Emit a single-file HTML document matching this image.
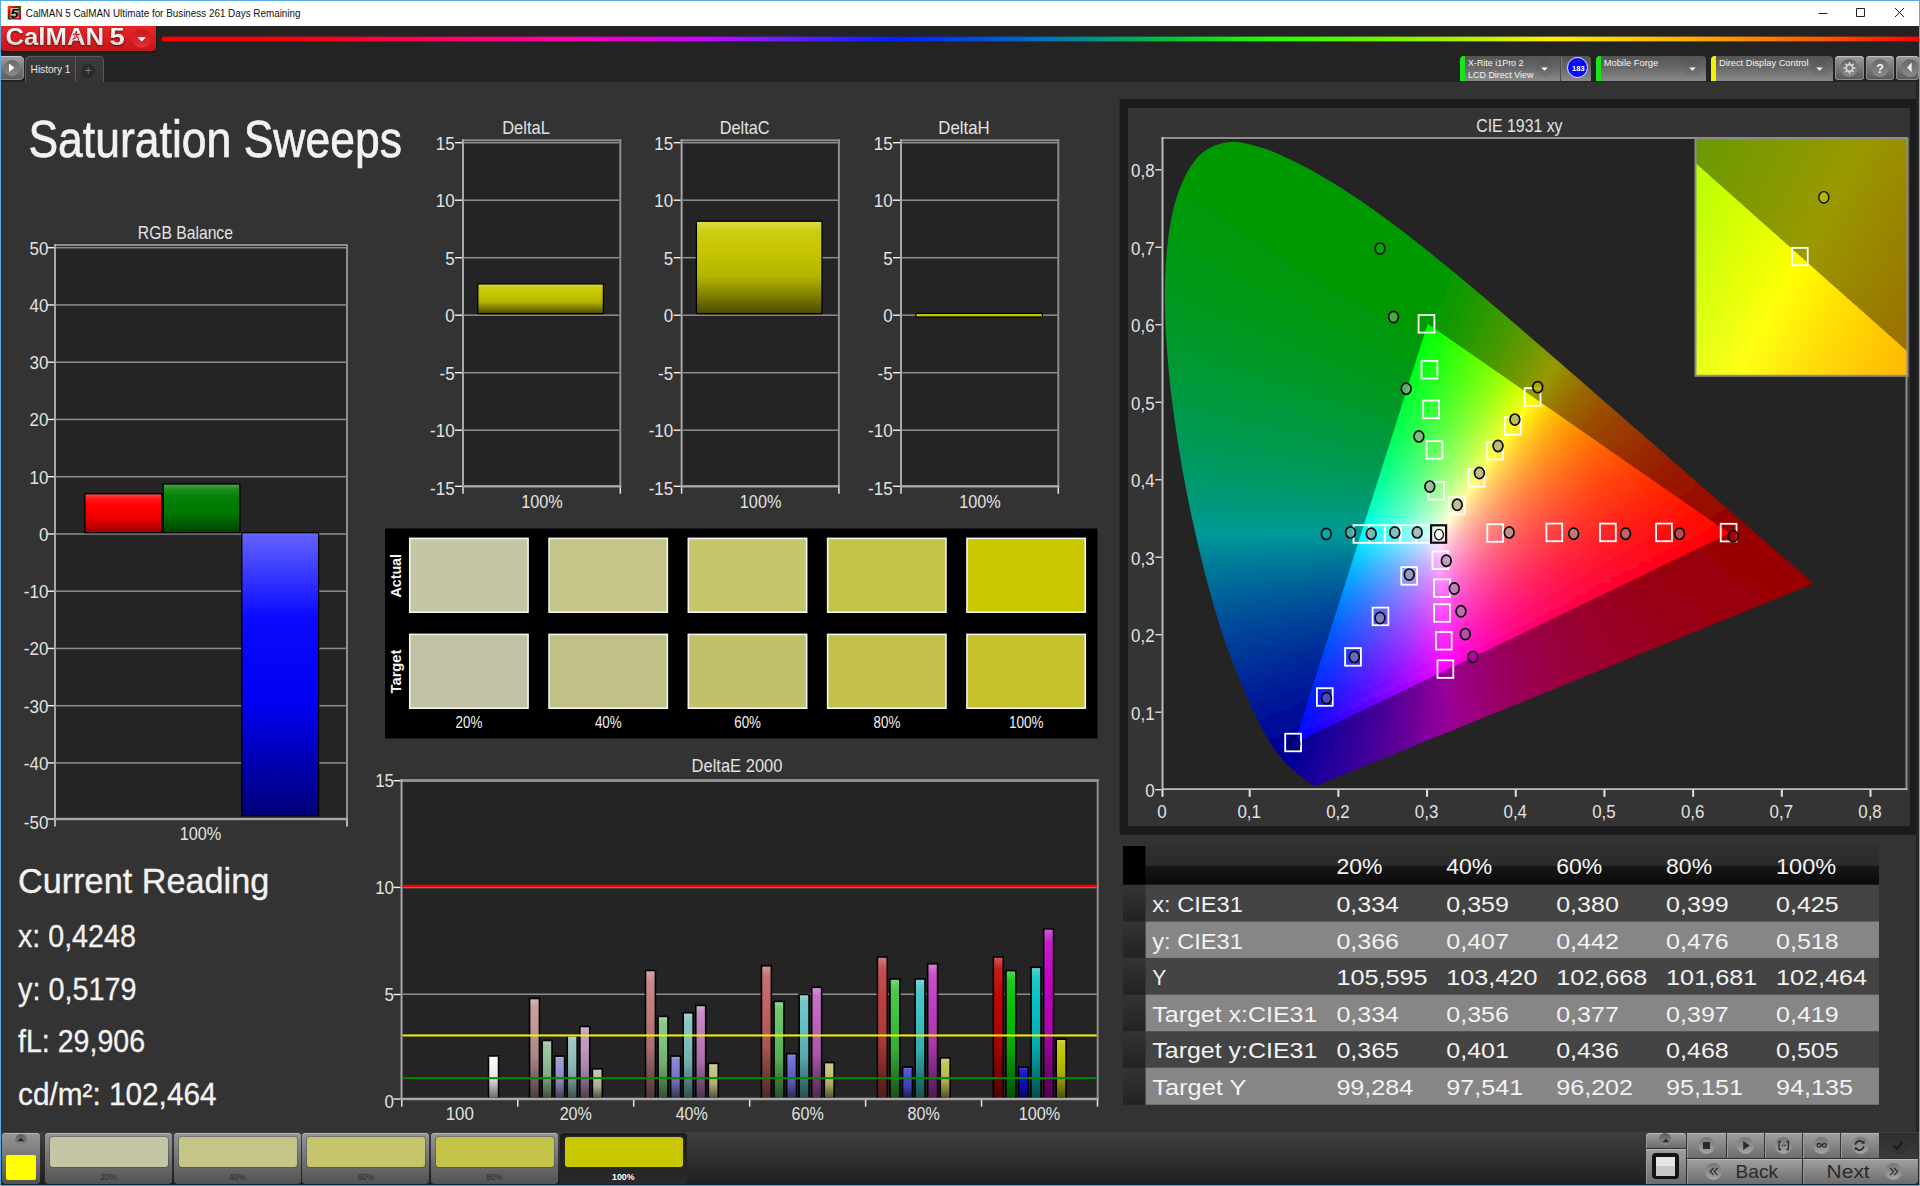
<!DOCTYPE html>
<html lang="en"><head><meta charset="utf-8"><title>CalMAN 5 - Saturation Sweeps</title>
<style>
html,body{margin:0;padding:0;background:#333}
#win{position:relative;width:1920px;height:1186px;overflow:hidden;background:#333333;font-family:'Liberation Sans',sans-serif}
#win div,#win i,#win b,#win u,#win s,#win em,#win span{position:absolute;display:block;box-sizing:border-box;text-decoration:none}
#border{left:0;top:0;width:1920px;height:1186px;border:1px solid #58ace6;z-index:5;pointer-events:none}
#ov{position:absolute;left:0;top:0}
text{font-family:'Liberation Sans',sans-serif}

#titlebar{left:1px;top:1px;width:1918px;height:25px;background:#fff}
#topbar{left:1px;top:26px;width:1918px;height:56px;background:#232323}
#rainbow{left:162px;top:36px;width:1757px;height:6px;-webkit-mask-image:linear-gradient(180deg,transparent 0,#000 22%,#000 78%,transparent 100%);mask-image:linear-gradient(180deg,transparent 0,#000 22%,#000 78%,transparent 100%);background:linear-gradient(90deg,#ff0000 0%,#ff0010 8%,#ff00a0 22%,#d000ff 30.5%,#7020ff 35%,#0020ff 42%,#0070c0 50%,#00c040 57%,#20ff00 63%,#a0f000 73%,#fff000 79%,#ffb000 87%,#ff5000 95%,#ff0000 100%)}
#logo{left:1px;top:26px;width:155px;height:25px;border-radius:0 0 4px 4px;background:linear-gradient(#e8262a,#dc1f22 45%,#c41418);box-shadow:0 1px 2px rgba(0,0,0,.7)}
#logodd{left:131px;top:3px;width:19px;height:19px;border-radius:50%;background:linear-gradient(#c8181c,#e43034)}
#playbtn{left:1px;top:56px;width:23px;height:24px;border-radius:0 5px 5px 0;background:linear-gradient(#a2a2a2,#7a7a7a 50%,#5c5c5c);box-shadow:inset 0 1px 0 #c4c4c4,inset -1px 0 0 #8a8a8a,inset 0 -1px 0 #888}
#playbtn i{left:3px;top:4px;width:16px;height:16px;border-radius:50%;background:linear-gradient(#6a6a6a,#8a8a8a)}
#tab{left:25px;top:56px;width:79px;height:26px;border-radius:5px 5px 0 0;background:linear-gradient(#3c3c3c,#333);box-shadow:inset 1px 1px 0 #5a5a5a,inset -1px 0 0 #5a5a5a}
#tab b{left:50px;top:1px;width:1px;height:25px;background:#5a5a5a}
#tab i{left:56px;top:8px;width:14px;height:14px;border-radius:50%;background:#2a2a2a}
.src{top:56px;height:25px;border-radius:4px 4px 0 0;background:linear-gradient(#545454,#6a6a6a 50%,#8a8a8a);overflow:hidden}
.src u{left:0;top:0;width:5px;height:25px}
.src s{top:1px;width:1px;height:24px;background:#4a4a4a;box-shadow:1px 0 0 #7c7c7c}
.src em{top:4px;width:17px;height:17px;border-radius:50%;background:linear-gradient(#555,#777)}
.src .blue{left:107px;top:1px;width:21px;height:21px;border-radius:50%;background:#0a0aff;border:1px solid #e8e8ff}
.tbtn{top:56px;height:24px;border-radius:4px;background:linear-gradient(#9c9c9c,#787878 50%,#585858);box-shadow:inset 0 1px 0 #c0c0c0,inset 1px 0 0 #8c8c8c,inset -1px 0 0 #8c8c8c,inset 0 -1px 0 #8c8c8c}
.tbtn i{left:5px;top:3px;width:18px;height:18px;border-radius:50%;background:linear-gradient(#666,#8a8a8a)}
#botbar{left:1px;top:1132px;width:1918px;height:53px;background:linear-gradient(#3e3e3e,#2c2c2c 60%,#1f1f1f)}
.bbtn{top:1133px;height:51px;border-radius:4px;background:linear-gradient(#969696,#747474 50%,#525252);box-shadow:inset 0 1px 0 #b4b4b4}
.bbtn.sw b{left:5px;top:4px;width:118px;height:30px;border-radius:3px;box-shadow:0 0 0 1px rgba(60,60,60,.35)}
.bbtn.sel{background:linear-gradient(#1c1c1c,#2a2a2a)}
.bbtn.sel{box-shadow:none}
.upc{left:13px;top:1px;width:12px;height:12px;border-radius:50%;background:linear-gradient(#5c5c5c,#8c8c8c)}
.ysq{left:4px;top:22px;width:30px;height:25px;border-radius:2px;background:#ffff00}
.rb{background:linear-gradient(#a0a0a0,#868686 50%,#6c6c6c);box-shadow:inset 0 1px 0 #b8b8b8,inset 1px 0 0 #999}
.rb.dk{background:linear-gradient(#2e2e2e,#3a3a3a);box-shadow:none}
.cir{top:4px;width:17px;height:17px;border-radius:50%;background:linear-gradient(#767676,#a4a4a4)}
.psq{left:6px;top:4px;width:27px;height:26px;border-radius:4px;background:#141414}
.psq i{left:4px;top:4px;width:19px;height:19px;background:linear-gradient(#e6e6e6 50%,#c8c8c8 50%)}
</style></head>
<body><div id="win">
<div id="titlebar"></div>
<div id="topbar"></div>
<div id="rainbow"></div>
<div id="logo"><div id="logodd"></div></div>
<div id="playbtn"><i></i></div>
<div id="tab"><b></b><i></i></div>
<div class="src" style="left:1460px;width:131px"><u style="background:#19e619"></u><s style="left:100px"></s><em style="left:76px"></em><span class="blue"></span></div>
<div class="src" style="left:1596px;width:110px"><u style="background:#19e619"></u><em style="left:88px"></em></div>
<div class="src" style="left:1711px;width:122px"><u style="background:#f2f200"></u><em style="left:100px"></em></div>
<div class="tbtn" style="left:1835px;width:29px"><i></i></div>
<div class="tbtn" style="left:1866px;width:28px"><i></i></div>
<div class="tbtn" style="left:1896px;width:23px"><i></i></div>
<div id="botbar"></div>
<div class="bbtn" style="left:2px;width:38px"><i class="upc"></i><b class="ysq"></b></div>
<div class="bbtn sw" style="left:45px;width:127px"><b style="background:#c5c6a6"></b></div>
<div class="bbtn sw" style="left:173.7px;width:127px"><b style="background:#c6c588"></b></div>
<div class="bbtn sw" style="left:302.4px;width:127px"><b style="background:#c7c56b"></b></div>
<div class="bbtn sw" style="left:431.1px;width:127px"><b style="background:#c4c34a"></b></div>
<div class="bbtn sw sel" style="left:559.8px;width:127px"><b style="background:#c9c800"></b></div>
<div class="rb" style="left:1646px;top:1133px;width:40px;height:15px;border-radius:4px 4px 0 0"><i class="upc" style="left:13px;top:0px"></i></div>
<div class="rb" style="left:1646px;top:1149px;width:40px;height:35px"><b class="psq"><i></i></b></div>
<div class="rb" style="left:1687px;top:1133px;width:39px;height:25px"><i class="cir" style="left:11px"></i></div>
<div class="rb" style="left:1727px;top:1133px;width:37px;height:25px"><i class="cir" style="left:10px"></i></div>
<div class="rb" style="left:1765px;top:1133px;width:37px;height:25px"><i class="cir" style="left:10px"></i></div>
<div class="rb" style="left:1803px;top:1133px;width:37px;height:25px"><i class="cir" style="left:10px"></i></div>
<div class="rb" style="left:1841px;top:1133px;width:38px;height:25px"><i class="cir" style="left:10.5px"></i></div>
<div class="rb dk" style="left:1879px;top:1133px;width:39px;height:25px"><i class="cir" style="left:11px;background:#333"></i></div>
<div class="rb" style="left:1687px;top:1159px;width:115px;height:25px"><i class="cir" style="left:18px;top:4px"></i></div>
<div class="rb" style="left:1803px;top:1159px;width:115px;height:25px;border-radius:0 0 4px 0"><i class="cir" style="left:82px;top:4px"></i></div>
<svg id="ov" width="1920" height="1186" viewBox="0 0 1920 1186">
<text x="28.4" y="157.3" font-size="52" fill="#f2f2f2" textLength="373.6" lengthAdjust="spacingAndGlyphs" stroke="#f2f2f2" stroke-width=".7">Saturation Sweeps</text>
<text x="18" y="893" font-size="35.2" fill="#f2f2f2" textLength="251.3" lengthAdjust="spacingAndGlyphs" stroke="#f2f2f2" stroke-width=".35">Current Reading</text>
<text x="18" y="947" font-size="30.9" fill="#f2f2f2" textLength="117.81" lengthAdjust="spacingAndGlyphs" stroke="#f2f2f2" stroke-width=".3">x: 0,4248</text>
<text x="18" y="999.5" font-size="30.9" fill="#f2f2f2" textLength="118.43" lengthAdjust="spacingAndGlyphs" stroke="#f2f2f2" stroke-width=".3">y: 0,5179</text>
<text x="18" y="1052" font-size="30.9" fill="#f2f2f2" textLength="127.09" lengthAdjust="spacingAndGlyphs" stroke="#f2f2f2" stroke-width=".3">fL: 29,906</text>
<text x="18" y="1104.5" font-size="30.9" fill="#f2f2f2" textLength="198.55" lengthAdjust="spacingAndGlyphs" stroke="#f2f2f2" stroke-width=".3">cd/m²: 102,464</text>
<defs>
<linearGradient id="gR" x1="0" y1="0" x2="0" y2="1"><stop offset="0" stop-color="#ff5050"/><stop offset="0.12" stop-color="#ff1a1a"/><stop offset="0.3" stop-color="#ff0000"/><stop offset="0.6" stop-color="#f00000"/><stop offset="1" stop-color="#9c0000"/></linearGradient>
<linearGradient id="gG" x1="0" y1="0" x2="0" y2="1"><stop offset="0" stop-color="#4aa84a"/><stop offset="0.12" stop-color="#1a8c1a"/><stop offset="0.3" stop-color="#008000"/><stop offset="0.6" stop-color="#007800"/><stop offset="1" stop-color="#004200"/></linearGradient>
<linearGradient id="gB" x1="0" y1="0" x2="0" y2="1"><stop offset="0" stop-color="#6464ff"/><stop offset="0.12" stop-color="#4040ff"/><stop offset="0.3" stop-color="#0a0aff"/><stop offset="0.6" stop-color="#0000f4"/><stop offset="1" stop-color="#000078"/></linearGradient>
</defs>
<rect x="54" y="244" width="294" height="576" fill="#242424"/>
<rect x="56" y="246.95" width="290" height="1.5" fill="#8e8e8e"/>
<rect x="56" y="304.2" width="290" height="1.5" fill="#8e8e8e"/>
<rect x="56" y="361.45" width="290" height="1.5" fill="#8e8e8e"/>
<rect x="56" y="418.7" width="290" height="1.5" fill="#8e8e8e"/>
<rect x="56" y="475.95" width="290" height="1.5" fill="#8e8e8e"/>
<rect x="56" y="533.2" width="290" height="1.5" fill="#8e8e8e"/>
<rect x="56" y="590.45" width="290" height="1.5" fill="#8e8e8e"/>
<rect x="56" y="647.7" width="290" height="1.5" fill="#8e8e8e"/>
<rect x="56" y="704.95" width="290" height="1.5" fill="#8e8e8e"/>
<rect x="56" y="762.2" width="290" height="1.5" fill="#8e8e8e"/>
<rect x="54" y="244" width="294" height="2" fill="#8e8e8e"/>
<rect x="346" y="244" width="2" height="576" fill="#8e8e8e"/>
<rect x="54" y="244" width="2" height="576" fill="#a8a8a8"/>
<rect x="54" y="817.8" width="294" height="2.4" fill="#a8a8a8"/>
<rect x="47" y="247" width="7" height="1.4" fill="#f2f2f2"/>
<text x="48.4" y="254.5" font-size="19" fill="#e2e2e2" text-anchor="end" textLength="18.85" lengthAdjust="spacingAndGlyphs">50</text>
<rect x="47" y="304.25" width="7" height="1.4" fill="#f2f2f2"/>
<text x="48.4" y="311.75" font-size="19" fill="#e2e2e2" text-anchor="end" textLength="18.85" lengthAdjust="spacingAndGlyphs">40</text>
<rect x="47" y="361.5" width="7" height="1.4" fill="#f2f2f2"/>
<text x="48.4" y="369" font-size="19" fill="#e2e2e2" text-anchor="end" textLength="18.85" lengthAdjust="spacingAndGlyphs">30</text>
<rect x="47" y="418.75" width="7" height="1.4" fill="#f2f2f2"/>
<text x="48.4" y="426.25" font-size="19" fill="#e2e2e2" text-anchor="end" textLength="18.85" lengthAdjust="spacingAndGlyphs">20</text>
<rect x="47" y="476" width="7" height="1.4" fill="#f2f2f2"/>
<text x="48.4" y="483.5" font-size="19" fill="#e2e2e2" text-anchor="end" textLength="18.85" lengthAdjust="spacingAndGlyphs">10</text>
<rect x="47" y="533.25" width="7" height="1.4" fill="#f2f2f2"/>
<text x="48.4" y="540.75" font-size="19" fill="#e2e2e2" text-anchor="end" textLength="9.43" lengthAdjust="spacingAndGlyphs">0</text>
<rect x="47" y="590.5" width="7" height="1.4" fill="#f2f2f2"/>
<text x="48.4" y="598" font-size="19" fill="#e2e2e2" text-anchor="end" textLength="24.55" lengthAdjust="spacingAndGlyphs">-10</text>
<rect x="47" y="647.75" width="7" height="1.4" fill="#f2f2f2"/>
<text x="48.4" y="655.25" font-size="19" fill="#e2e2e2" text-anchor="end" textLength="24.55" lengthAdjust="spacingAndGlyphs">-20</text>
<rect x="47" y="705" width="7" height="1.4" fill="#f2f2f2"/>
<text x="48.4" y="712.5" font-size="19" fill="#e2e2e2" text-anchor="end" textLength="24.55" lengthAdjust="spacingAndGlyphs">-30</text>
<rect x="47" y="762.25" width="7" height="1.4" fill="#f2f2f2"/>
<text x="48.4" y="769.75" font-size="19" fill="#e2e2e2" text-anchor="end" textLength="24.55" lengthAdjust="spacingAndGlyphs">-40</text>
<rect x="47" y="818.3" width="7" height="1.4" fill="#f2f2f2"/>
<text x="48.4" y="828.5" font-size="19" fill="#e2e2e2" text-anchor="end" textLength="24.55" lengthAdjust="spacingAndGlyphs">-50</text>
<rect x="54.25" y="820" width="1.5" height="6.5" fill="#e0e0e0"/>
<rect x="346.25" y="820" width="1.5" height="6.5" fill="#e0e0e0"/>
<text x="200.5" y="839.6" font-size="19" fill="#e2e2e2" text-anchor="middle" textLength="41.58" lengthAdjust="spacingAndGlyphs">100%</text>
<text x="185.4" y="238.9" font-size="19" fill="#e2e2e2" text-anchor="middle" textLength="95.08" lengthAdjust="spacingAndGlyphs">RGB Balance</text>
<rect x="84.8" y="493.8" width="77" height="38.9" fill="url(#gR)" stroke="#000" stroke-width="1.3"/>
<rect x="163.2" y="484" width="76.6" height="48.7" fill="url(#gG)" stroke="#000" stroke-width="1.3"/>
<rect x="241.8" y="532.6" width="76.8" height="283" fill="url(#gB)" stroke="#000" stroke-width="1.3"/>
<defs>
<linearGradient id="gY" x1="0" y1="0" x2="0" y2="1"><stop offset="0" stop-color="#dcdc50"/><stop offset="0.12" stop-color="#cccc10"/><stop offset="0.35" stop-color="#c4c400"/><stop offset="0.6" stop-color="#b4b400"/><stop offset="1" stop-color="#4c4c00"/></linearGradient>
</defs>
<rect x="462" y="139.3" width="159.3" height="348" fill="#242424"/>
<rect x="464" y="141.95" width="155.3" height="1.5" fill="#8e8e8e"/>
<rect x="464" y="199.45" width="155.3" height="1.5" fill="#8e8e8e"/>
<rect x="464" y="256.95" width="155.3" height="1.5" fill="#8e8e8e"/>
<rect x="464" y="314.45" width="155.3" height="1.5" fill="#8e8e8e"/>
<rect x="464" y="371.95" width="155.3" height="1.5" fill="#8e8e8e"/>
<rect x="464" y="429.45" width="155.3" height="1.5" fill="#8e8e8e"/>
<rect x="462" y="139.3" width="159.3" height="2" fill="#8e8e8e"/>
<rect x="619.3" y="139.3" width="2" height="348" fill="#8e8e8e"/>
<rect x="462" y="139.3" width="2" height="348" fill="#a8a8a8"/>
<rect x="462" y="485.1" width="159.3" height="2.4" fill="#a8a8a8"/>
<rect x="455" y="142" width="7" height="1.4" fill="#f2f2f2"/>
<text x="454.6" y="149.5" font-size="19" fill="#e2e2e2" text-anchor="end" textLength="18.85" lengthAdjust="spacingAndGlyphs">15</text>
<rect x="455" y="199.5" width="7" height="1.4" fill="#f2f2f2"/>
<text x="454.6" y="207" font-size="19" fill="#e2e2e2" text-anchor="end" textLength="18.85" lengthAdjust="spacingAndGlyphs">10</text>
<rect x="455" y="257" width="7" height="1.4" fill="#f2f2f2"/>
<text x="454.6" y="264.5" font-size="19" fill="#e2e2e2" text-anchor="end" textLength="9.43" lengthAdjust="spacingAndGlyphs">5</text>
<rect x="455" y="314.5" width="7" height="1.4" fill="#f2f2f2"/>
<text x="454.6" y="322" font-size="19" fill="#e2e2e2" text-anchor="end" textLength="9.43" lengthAdjust="spacingAndGlyphs">0</text>
<rect x="455" y="372" width="7" height="1.4" fill="#f2f2f2"/>
<text x="454.6" y="379.5" font-size="19" fill="#e2e2e2" text-anchor="end" textLength="15.12" lengthAdjust="spacingAndGlyphs">-5</text>
<rect x="455" y="429.5" width="7" height="1.4" fill="#f2f2f2"/>
<text x="454.6" y="437" font-size="19" fill="#e2e2e2" text-anchor="end" textLength="24.55" lengthAdjust="spacingAndGlyphs">-10</text>
<rect x="455" y="485.6" width="7" height="1.4" fill="#f2f2f2"/>
<text x="454.6" y="495.3" font-size="19" fill="#e2e2e2" text-anchor="end" textLength="24.55" lengthAdjust="spacingAndGlyphs">-15</text>
<rect x="462.25" y="487.3" width="1.5" height="6.5" fill="#e0e0e0"/>
<rect x="619.55" y="487.3" width="1.5" height="6.5" fill="#e0e0e0"/>
<text x="542" y="508.2" font-size="19" fill="#e2e2e2" text-anchor="middle" textLength="41.58" lengthAdjust="spacingAndGlyphs">100%</text>
<text x="526" y="134.2" font-size="19" fill="#e2e2e2" text-anchor="middle" textLength="47.7" lengthAdjust="spacingAndGlyphs">DeltaL</text>
<rect x="477.8" y="283.9" width="125.6" height="29.7" fill="url(#gY)" stroke="#000" stroke-width="1.3"/>
<rect x="680.6" y="139.3" width="159.3" height="348" fill="#242424"/>
<rect x="682.6" y="141.95" width="155.3" height="1.5" fill="#8e8e8e"/>
<rect x="682.6" y="199.45" width="155.3" height="1.5" fill="#8e8e8e"/>
<rect x="682.6" y="256.95" width="155.3" height="1.5" fill="#8e8e8e"/>
<rect x="682.6" y="314.45" width="155.3" height="1.5" fill="#8e8e8e"/>
<rect x="682.6" y="371.95" width="155.3" height="1.5" fill="#8e8e8e"/>
<rect x="682.6" y="429.45" width="155.3" height="1.5" fill="#8e8e8e"/>
<rect x="680.6" y="139.3" width="159.3" height="2" fill="#8e8e8e"/>
<rect x="837.9" y="139.3" width="2" height="348" fill="#8e8e8e"/>
<rect x="680.6" y="139.3" width="2" height="348" fill="#a8a8a8"/>
<rect x="680.6" y="485.1" width="159.3" height="2.4" fill="#a8a8a8"/>
<rect x="673.6" y="142" width="7" height="1.4" fill="#f2f2f2"/>
<text x="673.2" y="149.5" font-size="19" fill="#e2e2e2" text-anchor="end" textLength="18.85" lengthAdjust="spacingAndGlyphs">15</text>
<rect x="673.6" y="199.5" width="7" height="1.4" fill="#f2f2f2"/>
<text x="673.2" y="207" font-size="19" fill="#e2e2e2" text-anchor="end" textLength="18.85" lengthAdjust="spacingAndGlyphs">10</text>
<rect x="673.6" y="257" width="7" height="1.4" fill="#f2f2f2"/>
<text x="673.2" y="264.5" font-size="19" fill="#e2e2e2" text-anchor="end" textLength="9.43" lengthAdjust="spacingAndGlyphs">5</text>
<rect x="673.6" y="314.5" width="7" height="1.4" fill="#f2f2f2"/>
<text x="673.2" y="322" font-size="19" fill="#e2e2e2" text-anchor="end" textLength="9.43" lengthAdjust="spacingAndGlyphs">0</text>
<rect x="673.6" y="372" width="7" height="1.4" fill="#f2f2f2"/>
<text x="673.2" y="379.5" font-size="19" fill="#e2e2e2" text-anchor="end" textLength="15.12" lengthAdjust="spacingAndGlyphs">-5</text>
<rect x="673.6" y="429.5" width="7" height="1.4" fill="#f2f2f2"/>
<text x="673.2" y="437" font-size="19" fill="#e2e2e2" text-anchor="end" textLength="24.55" lengthAdjust="spacingAndGlyphs">-10</text>
<rect x="673.6" y="485.6" width="7" height="1.4" fill="#f2f2f2"/>
<text x="673.2" y="495.3" font-size="19" fill="#e2e2e2" text-anchor="end" textLength="24.55" lengthAdjust="spacingAndGlyphs">-15</text>
<rect x="680.85" y="487.3" width="1.5" height="6.5" fill="#e0e0e0"/>
<rect x="838.15" y="487.3" width="1.5" height="6.5" fill="#e0e0e0"/>
<text x="760.6" y="508.2" font-size="19" fill="#e2e2e2" text-anchor="middle" textLength="41.58" lengthAdjust="spacingAndGlyphs">100%</text>
<text x="744.6" y="134.2" font-size="19" fill="#e2e2e2" text-anchor="middle" textLength="49.8" lengthAdjust="spacingAndGlyphs">DeltaC</text>
<rect x="696.4" y="221.2" width="125.6" height="92.4" fill="url(#gY)" stroke="#000" stroke-width="1.3"/>
<rect x="900" y="139.3" width="159.3" height="348" fill="#242424"/>
<rect x="902" y="141.95" width="155.3" height="1.5" fill="#8e8e8e"/>
<rect x="902" y="199.45" width="155.3" height="1.5" fill="#8e8e8e"/>
<rect x="902" y="256.95" width="155.3" height="1.5" fill="#8e8e8e"/>
<rect x="902" y="314.45" width="155.3" height="1.5" fill="#8e8e8e"/>
<rect x="902" y="371.95" width="155.3" height="1.5" fill="#8e8e8e"/>
<rect x="902" y="429.45" width="155.3" height="1.5" fill="#8e8e8e"/>
<rect x="900" y="139.3" width="159.3" height="2" fill="#8e8e8e"/>
<rect x="1057.3" y="139.3" width="2" height="348" fill="#8e8e8e"/>
<rect x="900" y="139.3" width="2" height="348" fill="#a8a8a8"/>
<rect x="900" y="485.1" width="159.3" height="2.4" fill="#a8a8a8"/>
<rect x="893" y="142" width="7" height="1.4" fill="#f2f2f2"/>
<text x="892.6" y="149.5" font-size="19" fill="#e2e2e2" text-anchor="end" textLength="18.85" lengthAdjust="spacingAndGlyphs">15</text>
<rect x="893" y="199.5" width="7" height="1.4" fill="#f2f2f2"/>
<text x="892.6" y="207" font-size="19" fill="#e2e2e2" text-anchor="end" textLength="18.85" lengthAdjust="spacingAndGlyphs">10</text>
<rect x="893" y="257" width="7" height="1.4" fill="#f2f2f2"/>
<text x="892.6" y="264.5" font-size="19" fill="#e2e2e2" text-anchor="end" textLength="9.43" lengthAdjust="spacingAndGlyphs">5</text>
<rect x="893" y="314.5" width="7" height="1.4" fill="#f2f2f2"/>
<text x="892.6" y="322" font-size="19" fill="#e2e2e2" text-anchor="end" textLength="9.43" lengthAdjust="spacingAndGlyphs">0</text>
<rect x="893" y="372" width="7" height="1.4" fill="#f2f2f2"/>
<text x="892.6" y="379.5" font-size="19" fill="#e2e2e2" text-anchor="end" textLength="15.12" lengthAdjust="spacingAndGlyphs">-5</text>
<rect x="893" y="429.5" width="7" height="1.4" fill="#f2f2f2"/>
<text x="892.6" y="437" font-size="19" fill="#e2e2e2" text-anchor="end" textLength="24.55" lengthAdjust="spacingAndGlyphs">-10</text>
<rect x="893" y="485.6" width="7" height="1.4" fill="#f2f2f2"/>
<text x="892.6" y="495.3" font-size="19" fill="#e2e2e2" text-anchor="end" textLength="24.55" lengthAdjust="spacingAndGlyphs">-15</text>
<rect x="900.25" y="487.3" width="1.5" height="6.5" fill="#e0e0e0"/>
<rect x="1057.55" y="487.3" width="1.5" height="6.5" fill="#e0e0e0"/>
<text x="980" y="508.2" font-size="19" fill="#e2e2e2" text-anchor="middle" textLength="41.58" lengthAdjust="spacingAndGlyphs">100%</text>
<text x="964" y="134.2" font-size="19" fill="#e2e2e2" text-anchor="middle" textLength="51.47" lengthAdjust="spacingAndGlyphs">DeltaH</text>
<rect x="915.8" y="313.4" width="126.6" height="3.6" fill="#c8c800" stroke="#000" stroke-width="1.3"/>
<rect x="385" y="528.5" width="712.5" height="210" fill="#000"/>
<rect x="409.75" y="538.4" width="118.3" height="73.8" fill="#c5c6a6" stroke="#f4f4ea" stroke-width="1.6"/>
<rect x="409.75" y="634.4" width="118.3" height="73.8" fill="#c1c1a6" stroke="#f4f4ea" stroke-width="1.6"/>
<text x="469" y="727.9" font-size="16.4" fill="#f0f0f0" text-anchor="middle" textLength="26.79" lengthAdjust="spacingAndGlyphs">20%</text>
<rect x="549.05" y="538.4" width="118.3" height="73.8" fill="#c6c588" stroke="#f4f4ea" stroke-width="1.6"/>
<rect x="549.05" y="634.4" width="118.3" height="73.8" fill="#c1c087" stroke="#f4f4ea" stroke-width="1.6"/>
<text x="608.3" y="727.9" font-size="16.4" fill="#f0f0f0" text-anchor="middle" textLength="26.79" lengthAdjust="spacingAndGlyphs">40%</text>
<rect x="688.35" y="538.4" width="118.3" height="73.8" fill="#c7c56b" stroke="#f4f4ea" stroke-width="1.6"/>
<rect x="688.35" y="634.4" width="118.3" height="73.8" fill="#c2c06c" stroke="#f4f4ea" stroke-width="1.6"/>
<text x="747.6" y="727.9" font-size="16.4" fill="#f0f0f0" text-anchor="middle" textLength="26.79" lengthAdjust="spacingAndGlyphs">60%</text>
<rect x="827.65" y="538.4" width="118.3" height="73.8" fill="#c4c34a" stroke="#f4f4ea" stroke-width="1.6"/>
<rect x="827.65" y="634.4" width="118.3" height="73.8" fill="#c3c04b" stroke="#f4f4ea" stroke-width="1.6"/>
<text x="886.9" y="727.9" font-size="16.4" fill="#f0f0f0" text-anchor="middle" textLength="26.79" lengthAdjust="spacingAndGlyphs">80%</text>
<rect x="966.95" y="538.4" width="118.3" height="73.8" fill="#c9c800" stroke="#f4f4ea" stroke-width="1.6"/>
<rect x="966.95" y="634.4" width="118.3" height="73.8" fill="#c5c22e" stroke="#f4f4ea" stroke-width="1.6"/>
<text x="1026.2" y="727.9" font-size="16.4" fill="#f0f0f0" text-anchor="middle" textLength="34.65" lengthAdjust="spacingAndGlyphs">100%</text>
<text transform="translate(401,575.8) rotate(-90)" font-size="14.6" font-weight="bold" fill="#f4f4f4" text-anchor="middle" textLength="43.6" lengthAdjust="spacingAndGlyphs">Actual</text>
<text transform="translate(401,671.5) rotate(-90)" font-size="14.6" font-weight="bold" fill="#f4f4f4" text-anchor="middle" textLength="43.8" lengthAdjust="spacingAndGlyphs">Target</text>
<defs>
<linearGradient id="bw" x1="0" y1="0" x2="0" y2="1"><stop offset="0" stop-color="#ffffff"/><stop offset="0.5" stop-color="#e8e8e8"/><stop offset="1" stop-color="#6a6a6a"/></linearGradient>
<linearGradient id="br0" x1="0" y1="0" x2="0" y2="1"><stop offset="0" stop-color="#d6baba"/><stop offset="0.08" stop-color="#c7a0a0"/><stop offset="0.3" stop-color="#c19696"/><stop offset="0.6" stop-color="#aa8484"/><stop offset="1" stop-color="#4d3c3c"/></linearGradient>
<linearGradient id="bg0" x1="0" y1="0" x2="0" y2="1"><stop offset="0" stop-color="#bad6ba"/><stop offset="0.08" stop-color="#a0c7a0"/><stop offset="0.3" stop-color="#96c196"/><stop offset="0.6" stop-color="#84aa84"/><stop offset="1" stop-color="#3c4d3c"/></linearGradient>
<linearGradient id="bb0" x1="0" y1="0" x2="0" y2="1"><stop offset="0" stop-color="#babadf"/><stop offset="0.08" stop-color="#a0a0d3"/><stop offset="0.3" stop-color="#9696ce"/><stop offset="0.6" stop-color="#8484b5"/><stop offset="1" stop-color="#3c3c52"/></linearGradient>
<linearGradient id="bc0" x1="0" y1="0" x2="0" y2="1"><stop offset="0" stop-color="#bad6d6"/><stop offset="0.08" stop-color="#a0c7c7"/><stop offset="0.3" stop-color="#96c1c1"/><stop offset="0.6" stop-color="#84aaaa"/><stop offset="1" stop-color="#3c4d4d"/></linearGradient>
<linearGradient id="bm0" x1="0" y1="0" x2="0" y2="1"><stop offset="0" stop-color="#d6bad6"/><stop offset="0.08" stop-color="#c7a0c7"/><stop offset="0.3" stop-color="#c196c1"/><stop offset="0.6" stop-color="#aa84aa"/><stop offset="1" stop-color="#4d3c4d"/></linearGradient>
<linearGradient id="by0" x1="0" y1="0" x2="0" y2="1"><stop offset="0" stop-color="#d6d6c0"/><stop offset="0.08" stop-color="#c7c7aa"/><stop offset="0.3" stop-color="#c1c1a0"/><stop offset="0.6" stop-color="#aaaa8d"/><stop offset="1" stop-color="#4d4d40"/></linearGradient>
<linearGradient id="br1" x1="0" y1="0" x2="0" y2="1"><stop offset="0" stop-color="#d6aaaa"/><stop offset="0.08" stop-color="#c78b8b"/><stop offset="0.3" stop-color="#c17e7e"/><stop offset="0.6" stop-color="#aa6f6f"/><stop offset="1" stop-color="#4d3232"/></linearGradient>
<linearGradient id="bg1" x1="0" y1="0" x2="0" y2="1"><stop offset="0" stop-color="#aad6aa"/><stop offset="0.08" stop-color="#8bc78b"/><stop offset="0.3" stop-color="#7ec17e"/><stop offset="0.6" stop-color="#6faa6f"/><stop offset="1" stop-color="#324d32"/></linearGradient>
<linearGradient id="bb1" x1="0" y1="0" x2="0" y2="1"><stop offset="0" stop-color="#aaaadf"/><stop offset="0.08" stop-color="#8b8bd3"/><stop offset="0.3" stop-color="#7e7ece"/><stop offset="0.6" stop-color="#6f6fb5"/><stop offset="1" stop-color="#323252"/></linearGradient>
<linearGradient id="bc1" x1="0" y1="0" x2="0" y2="1"><stop offset="0" stop-color="#aad6d6"/><stop offset="0.08" stop-color="#8bc7c7"/><stop offset="0.3" stop-color="#7ec1c1"/><stop offset="0.6" stop-color="#6faaaa"/><stop offset="1" stop-color="#324d4d"/></linearGradient>
<linearGradient id="bm1" x1="0" y1="0" x2="0" y2="1"><stop offset="0" stop-color="#d6aad6"/><stop offset="0.08" stop-color="#c78bc7"/><stop offset="0.3" stop-color="#c17ec1"/><stop offset="0.6" stop-color="#aa6faa"/><stop offset="1" stop-color="#4d324d"/></linearGradient>
<linearGradient id="by1" x1="0" y1="0" x2="0" y2="1"><stop offset="0" stop-color="#d6d6ae"/><stop offset="0.08" stop-color="#c7c790"/><stop offset="0.3" stop-color="#c1c184"/><stop offset="0.6" stop-color="#aaaa74"/><stop offset="1" stop-color="#4d4d35"/></linearGradient>
<linearGradient id="br2" x1="0" y1="0" x2="0" y2="1"><stop offset="0" stop-color="#d69797"/><stop offset="0.08" stop-color="#c77272"/><stop offset="0.3" stop-color="#c16262"/><stop offset="0.6" stop-color="#aa5656"/><stop offset="1" stop-color="#4d2727"/></linearGradient>
<linearGradient id="bg2" x1="0" y1="0" x2="0" y2="1"><stop offset="0" stop-color="#97d697"/><stop offset="0.08" stop-color="#72c772"/><stop offset="0.3" stop-color="#62c162"/><stop offset="0.6" stop-color="#56aa56"/><stop offset="1" stop-color="#274d27"/></linearGradient>
<linearGradient id="bb2" x1="0" y1="0" x2="0" y2="1"><stop offset="0" stop-color="#9b9bdf"/><stop offset="0.08" stop-color="#7777d3"/><stop offset="0.3" stop-color="#6868ce"/><stop offset="0.6" stop-color="#5c5cb5"/><stop offset="1" stop-color="#2a2a52"/></linearGradient>
<linearGradient id="bc2" x1="0" y1="0" x2="0" y2="1"><stop offset="0" stop-color="#97d6d6"/><stop offset="0.08" stop-color="#72c7c7"/><stop offset="0.3" stop-color="#62c1c1"/><stop offset="0.6" stop-color="#56aaaa"/><stop offset="1" stop-color="#274d4d"/></linearGradient>
<linearGradient id="bm2" x1="0" y1="0" x2="0" y2="1"><stop offset="0" stop-color="#d697d6"/><stop offset="0.08" stop-color="#c772c7"/><stop offset="0.3" stop-color="#c162c1"/><stop offset="0.6" stop-color="#aa56aa"/><stop offset="1" stop-color="#4d274d"/></linearGradient>
<linearGradient id="by2" x1="0" y1="0" x2="0" y2="1"><stop offset="0" stop-color="#d6d69e"/><stop offset="0.08" stop-color="#c7c77b"/><stop offset="0.3" stop-color="#c1c16c"/><stop offset="0.6" stop-color="#aaaa5f"/><stop offset="1" stop-color="#4d4d2b"/></linearGradient>
<linearGradient id="br3" x1="0" y1="0" x2="0" y2="1"><stop offset="0" stop-color="#d68080"/><stop offset="0.08" stop-color="#c75151"/><stop offset="0.3" stop-color="#c13e3e"/><stop offset="0.6" stop-color="#aa3737"/><stop offset="1" stop-color="#4d1919"/></linearGradient>
<linearGradient id="bg3" x1="0" y1="0" x2="0" y2="1"><stop offset="0" stop-color="#80d680"/><stop offset="0.08" stop-color="#51c751"/><stop offset="0.3" stop-color="#3ec13e"/><stop offset="0.6" stop-color="#37aa37"/><stop offset="1" stop-color="#194d19"/></linearGradient>
<linearGradient id="bb3" x1="0" y1="0" x2="0" y2="1"><stop offset="0" stop-color="#8888df"/><stop offset="0.08" stop-color="#5c5cd3"/><stop offset="0.3" stop-color="#4a4ace"/><stop offset="0.6" stop-color="#4141b5"/><stop offset="1" stop-color="#1e1e52"/></linearGradient>
<linearGradient id="bc3" x1="0" y1="0" x2="0" y2="1"><stop offset="0" stop-color="#80d6d6"/><stop offset="0.08" stop-color="#51c7c7"/><stop offset="0.3" stop-color="#3ec1c1"/><stop offset="0.6" stop-color="#37aaaa"/><stop offset="1" stop-color="#194d4d"/></linearGradient>
<linearGradient id="bm3" x1="0" y1="0" x2="0" y2="1"><stop offset="0" stop-color="#d680d6"/><stop offset="0.08" stop-color="#c751c7"/><stop offset="0.3" stop-color="#c13ec1"/><stop offset="0.6" stop-color="#aa37aa"/><stop offset="1" stop-color="#4d194d"/></linearGradient>
<linearGradient id="by3" x1="0" y1="0" x2="0" y2="1"><stop offset="0" stop-color="#d6d68c"/><stop offset="0.08" stop-color="#c7c762"/><stop offset="0.3" stop-color="#c1c150"/><stop offset="0.6" stop-color="#aaaa46"/><stop offset="1" stop-color="#4d4d20"/></linearGradient>
<linearGradient id="br4" x1="0" y1="0" x2="0" y2="1"><stop offset="0" stop-color="#d65959"/><stop offset="0.08" stop-color="#c71d1d"/><stop offset="0.3" stop-color="#c10404"/><stop offset="0.6" stop-color="#aa0404"/><stop offset="1" stop-color="#4d0202"/></linearGradient>
<linearGradient id="bg4" x1="0" y1="0" x2="0" y2="1"><stop offset="0" stop-color="#59d659"/><stop offset="0.08" stop-color="#1dc71d"/><stop offset="0.3" stop-color="#04c104"/><stop offset="0.6" stop-color="#04aa04"/><stop offset="1" stop-color="#024d02"/></linearGradient>
<linearGradient id="bb4" x1="0" y1="0" x2="0" y2="1"><stop offset="0" stop-color="#6060df"/><stop offset="0.08" stop-color="#2626d3"/><stop offset="0.3" stop-color="#0e0ece"/><stop offset="0.6" stop-color="#0c0cb5"/><stop offset="1" stop-color="#060652"/></linearGradient>
<linearGradient id="bc4" x1="0" y1="0" x2="0" y2="1"><stop offset="0" stop-color="#59d6d6"/><stop offset="0.08" stop-color="#1dc7c7"/><stop offset="0.3" stop-color="#04c1c1"/><stop offset="0.6" stop-color="#04aaaa"/><stop offset="1" stop-color="#024d4d"/></linearGradient>
<linearGradient id="bm4" x1="0" y1="0" x2="0" y2="1"><stop offset="0" stop-color="#d659d6"/><stop offset="0.08" stop-color="#c71dc7"/><stop offset="0.3" stop-color="#c104c1"/><stop offset="0.6" stop-color="#aa04aa"/><stop offset="1" stop-color="#4d024d"/></linearGradient>
<linearGradient id="by4" x1="0" y1="0" x2="0" y2="1"><stop offset="0" stop-color="#d6d657"/><stop offset="0.08" stop-color="#c7c71a"/><stop offset="0.3" stop-color="#c1c100"/><stop offset="0.6" stop-color="#aaaa00"/><stop offset="1" stop-color="#4d4d00"/></linearGradient>
</defs>
<rect x="400.5" y="779" width="698.2" height="321" fill="#242424"/>
<rect x="402.5" y="886.75" width="694.2" height="1.5" fill="#8e8e8e"/>
<rect x="402.5" y="993.5" width="694.2" height="1.5" fill="#8e8e8e"/>
<rect x="400.5" y="779" width="698.2" height="3" fill="#8e8e8e"/>
<rect x="1096.7" y="779" width="2" height="321" fill="#8e8e8e"/>
<rect x="400.5" y="779" width="2" height="321" fill="#a8a8a8"/>
<rect x="393.5" y="780" width="7" height="1.4" fill="#f2f2f2"/>
<text x="394" y="787.3" font-size="19" fill="#e2e2e2" text-anchor="end" textLength="18.85" lengthAdjust="spacingAndGlyphs">15</text>
<rect x="393.5" y="886.7" width="7" height="1.4" fill="#f2f2f2"/>
<text x="394" y="894" font-size="19" fill="#e2e2e2" text-anchor="end" textLength="18.85" lengthAdjust="spacingAndGlyphs">10</text>
<rect x="393.5" y="993.8" width="7" height="1.4" fill="#f2f2f2"/>
<text x="394" y="1001.1" font-size="19" fill="#e2e2e2" text-anchor="end" textLength="9.43" lengthAdjust="spacingAndGlyphs">5</text>
<rect x="393.5" y="1098.3" width="7" height="1.4" fill="#f2f2f2"/>
<text x="394" y="1108.3" font-size="19" fill="#e2e2e2" text-anchor="end" textLength="9.43" lengthAdjust="spacingAndGlyphs">0</text>
<text x="737" y="772.3" font-size="19" fill="#e2e2e2" text-anchor="middle" textLength="90.88" lengthAdjust="spacingAndGlyphs">DeltaE 2000</text>
<rect x="488.5" y="1056" width="10" height="42.4" fill="url(#bw)" stroke="#000" stroke-width="1.5"/>
<rect x="529.55" y="998.5" width="9.9" height="99.9" fill="url(#br0)" stroke="#000" stroke-width="1.6"/>
<rect x="542.12" y="1040.5" width="9.9" height="57.9" fill="url(#bg0)" stroke="#000" stroke-width="1.6"/>
<rect x="554.69" y="1056.1" width="9.9" height="42.3" fill="url(#bb0)" stroke="#000" stroke-width="1.6"/>
<rect x="567.26" y="1035.8" width="9.9" height="62.6" fill="url(#bc0)" stroke="#000" stroke-width="1.6"/>
<rect x="579.83" y="1026.5" width="9.9" height="71.9" fill="url(#bm0)" stroke="#000" stroke-width="1.6"/>
<rect x="592.4" y="1068.9" width="9.9" height="29.5" fill="url(#by0)" stroke="#000" stroke-width="1.6"/>
<rect x="645.5" y="970.5" width="9.9" height="127.9" fill="url(#br1)" stroke="#000" stroke-width="1.6"/>
<rect x="658.07" y="1016.4" width="9.9" height="82" fill="url(#bg1)" stroke="#000" stroke-width="1.6"/>
<rect x="670.64" y="1056.1" width="9.9" height="42.3" fill="url(#bb1)" stroke="#000" stroke-width="1.6"/>
<rect x="683.21" y="1012.8" width="9.9" height="85.6" fill="url(#bc1)" stroke="#000" stroke-width="1.6"/>
<rect x="695.78" y="1005.4" width="9.9" height="93" fill="url(#bm1)" stroke="#000" stroke-width="1.6"/>
<rect x="708.35" y="1063.4" width="9.9" height="35" fill="url(#by1)" stroke="#000" stroke-width="1.6"/>
<rect x="761.45" y="965.8" width="9.9" height="132.6" fill="url(#br2)" stroke="#000" stroke-width="1.6"/>
<rect x="774.02" y="1001.4" width="9.9" height="97" fill="url(#bg2)" stroke="#000" stroke-width="1.6"/>
<rect x="786.59" y="1053.7" width="9.9" height="44.7" fill="url(#bb2)" stroke="#000" stroke-width="1.6"/>
<rect x="799.16" y="994.4" width="9.9" height="104" fill="url(#bc2)" stroke="#000" stroke-width="1.6"/>
<rect x="811.73" y="987.3" width="9.9" height="111.1" fill="url(#bm2)" stroke="#000" stroke-width="1.6"/>
<rect x="824.3" y="1062.6" width="9.9" height="35.8" fill="url(#by2)" stroke="#000" stroke-width="1.6"/>
<rect x="877.4" y="957" width="9.9" height="141.4" fill="url(#br3)" stroke="#000" stroke-width="1.6"/>
<rect x="889.97" y="979" width="9.9" height="119.4" fill="url(#bg3)" stroke="#000" stroke-width="1.6"/>
<rect x="902.54" y="1067.1" width="9.9" height="31.3" fill="url(#bb3)" stroke="#000" stroke-width="1.6"/>
<rect x="915.11" y="979" width="9.9" height="119.4" fill="url(#bc3)" stroke="#000" stroke-width="1.6"/>
<rect x="927.68" y="963.8" width="9.9" height="134.6" fill="url(#bm3)" stroke="#000" stroke-width="1.6"/>
<rect x="940.25" y="1057.9" width="9.9" height="40.5" fill="url(#by3)" stroke="#000" stroke-width="1.6"/>
<rect x="993.35" y="957" width="9.9" height="141.4" fill="url(#br4)" stroke="#000" stroke-width="1.6"/>
<rect x="1005.92" y="970.6" width="9.9" height="127.8" fill="url(#bg4)" stroke="#000" stroke-width="1.6"/>
<rect x="1018.49" y="1067.1" width="9.9" height="31.3" fill="url(#bb4)" stroke="#000" stroke-width="1.6"/>
<rect x="1031.06" y="967.3" width="9.9" height="131.1" fill="url(#bc4)" stroke="#000" stroke-width="1.6"/>
<rect x="1043.63" y="928.9" width="9.9" height="169.5" fill="url(#bm4)" stroke="#000" stroke-width="1.6"/>
<rect x="1056.2" y="1039.1" width="9.9" height="59.3" fill="url(#by4)" stroke="#000" stroke-width="1.6"/>
<rect x="402.5" y="884.7" width="694.2" height="2.6" fill="#f00000"/>
<rect x="402.5" y="1034.45" width="694.2" height="2" fill="#f4f400"/>
<rect x="402.5" y="1077.15" width="694.2" height="2" fill="#008a00"/>
<rect x="400.5" y="1097.7" width="698.2" height="2.5" fill="#a8a8a8"/>
<rect x="401.05" y="1100" width="1.5" height="6.7" fill="#e0e0e0"/>
<rect x="517" y="1100" width="1.5" height="6.7" fill="#e0e0e0"/>
<rect x="632.95" y="1100" width="1.5" height="6.7" fill="#e0e0e0"/>
<rect x="748.9" y="1100" width="1.5" height="6.7" fill="#e0e0e0"/>
<rect x="864.85" y="1100" width="1.5" height="6.7" fill="#e0e0e0"/>
<rect x="980.8" y="1100" width="1.5" height="6.7" fill="#e0e0e0"/>
<rect x="1096.75" y="1100" width="1.5" height="6.7" fill="#e0e0e0"/>
<text x="459.8" y="1119.6" font-size="19" fill="#e2e2e2" text-anchor="middle" textLength="28.28" lengthAdjust="spacingAndGlyphs">100</text>
<text x="575.75" y="1119.6" font-size="19" fill="#e2e2e2" text-anchor="middle" textLength="32.15" lengthAdjust="spacingAndGlyphs">20%</text>
<text x="691.7" y="1119.6" font-size="19" fill="#e2e2e2" text-anchor="middle" textLength="32.15" lengthAdjust="spacingAndGlyphs">40%</text>
<text x="807.65" y="1119.6" font-size="19" fill="#e2e2e2" text-anchor="middle" textLength="32.15" lengthAdjust="spacingAndGlyphs">60%</text>
<text x="923.6" y="1119.6" font-size="19" fill="#e2e2e2" text-anchor="middle" textLength="32.15" lengthAdjust="spacingAndGlyphs">80%</text>
<text x="1039.55" y="1119.6" font-size="19" fill="#e2e2e2" text-anchor="middle" textLength="41.58" lengthAdjust="spacingAndGlyphs">100%</text>
<rect x="1916" y="82" width="3" height="1050" fill="#262626"/>
<rect x="1119.7" y="99.1" width="796.3" height="735.6" fill="#1c1c1c"/>
<rect x="1128" y="108" width="782" height="718" fill="#343434"/>
<rect x="1161.5" y="137" width="746" height="653" fill="#242424"/>
<defs><linearGradient id="o0" gradientUnits="userSpaceOnUse" x1="1221" x2="1247"><stop offset="0" stop-color="#009900"/><stop offset="1" stop-color="#009900"/></linearGradient><linearGradient id="o1" gradientUnits="userSpaceOnUse" x1="1211" x2="1259"><stop offset="0" stop-color="#009900"/><stop offset="1" stop-color="#009900"/></linearGradient><linearGradient id="o2" gradientUnits="userSpaceOnUse" x1="1205" x2="1268"><stop offset="0" stop-color="#009900"/><stop offset="1" stop-color="#009900"/></linearGradient><linearGradient id="o3" gradientUnits="userSpaceOnUse" x1="1201" x2="1276"><stop offset="0" stop-color="#009900"/><stop offset="1" stop-color="#009900"/></linearGradient><linearGradient id="o4" gradientUnits="userSpaceOnUse" x1="1198" x2="1283"><stop offset="0" stop-color="#009900"/><stop offset="1" stop-color="#009900"/></linearGradient><linearGradient id="o5" gradientUnits="userSpaceOnUse" x1="1195" x2="1289"><stop offset="0" stop-color="#009900"/><stop offset="1" stop-color="#009900"/></linearGradient><linearGradient id="o6" gradientUnits="userSpaceOnUse" x1="1192" x2="1296"><stop offset="0" stop-color="#009900"/><stop offset="1" stop-color="#009900"/></linearGradient><linearGradient id="o7" gradientUnits="userSpaceOnUse" x1="1190" x2="1302"><stop offset="0" stop-color="#009901"/><stop offset="1" stop-color="#009900"/></linearGradient><linearGradient id="o8" gradientUnits="userSpaceOnUse" x1="1188" x2="1307"><stop offset="0" stop-color="#009901"/><stop offset="1" stop-color="#009900"/></linearGradient><linearGradient id="o9" gradientUnits="userSpaceOnUse" x1="1186" x2="1313"><stop offset="0" stop-color="#009902"/><stop offset="1" stop-color="#009900"/></linearGradient><linearGradient id="o10" gradientUnits="userSpaceOnUse" x1="1184" x2="1319"><stop offset="0" stop-color="#009903"/><stop offset=".1556" stop-color="#009900"/><stop offset="1" stop-color="#009900"/></linearGradient><linearGradient id="o11" gradientUnits="userSpaceOnUse" x1="1183" x2="1324"><stop offset="0" stop-color="#009904"/><stop offset=".1844" stop-color="#009900"/><stop offset="1" stop-color="#009900"/></linearGradient><linearGradient id="o12" gradientUnits="userSpaceOnUse" x1="1181" x2="1329"><stop offset="0" stop-color="#009904"/><stop offset=".223" stop-color="#009900"/><stop offset="1" stop-color="#009900"/></linearGradient><linearGradient id="o13" gradientUnits="userSpaceOnUse" x1="1180" x2="1334"><stop offset="0" stop-color="#009905"/><stop offset=".2468" stop-color="#009900"/><stop offset="1" stop-color="#009900"/></linearGradient><linearGradient id="o14" gradientUnits="userSpaceOnUse" x1="1179" x2="1339"><stop offset="0" stop-color="#009906"/><stop offset=".2687" stop-color="#009900"/><stop offset="1" stop-color="#009900"/></linearGradient><linearGradient id="o15" gradientUnits="userSpaceOnUse" x1="1177" x2="1344"><stop offset="0" stop-color="#009906"/><stop offset=".2994" stop-color="#009900"/><stop offset="1" stop-color="#009900"/></linearGradient><linearGradient id="o16" gradientUnits="userSpaceOnUse" x1="1176" x2="1348"><stop offset="0" stop-color="#009907"/><stop offset=".3198" stop-color="#009900"/><stop offset="1" stop-color="#009900"/></linearGradient><linearGradient id="o17" gradientUnits="userSpaceOnUse" x1="1175" x2="1353"><stop offset="0" stop-color="#009908"/><stop offset=".3371" stop-color="#009900"/><stop offset="1" stop-color="#009900"/></linearGradient><linearGradient id="o18" gradientUnits="userSpaceOnUse" x1="1174" x2="1358"><stop offset="0" stop-color="#009908"/><stop offset=".3587" stop-color="#009900"/><stop offset="1" stop-color="#009900"/></linearGradient><linearGradient id="o19" gradientUnits="userSpaceOnUse" x1="1173" x2="1362"><stop offset="0" stop-color="#009909"/><stop offset=".3757" stop-color="#009900"/><stop offset="1" stop-color="#009900"/></linearGradient><linearGradient id="o20" gradientUnits="userSpaceOnUse" x1="1173" x2="1366"><stop offset="0" stop-color="#00990a"/><stop offset=".3886" stop-color="#009900"/><stop offset="1" stop-color="#009900"/></linearGradient><linearGradient id="o21" gradientUnits="userSpaceOnUse" x1="1172" x2="1371"><stop offset="0" stop-color="#00990a"/><stop offset=".407" stop-color="#009900"/><stop offset="1" stop-color="#009900"/></linearGradient><linearGradient id="o22" gradientUnits="userSpaceOnUse" x1="1171" x2="1375"><stop offset="0" stop-color="#00990b"/><stop offset=".4216" stop-color="#009900"/><stop offset="1" stop-color="#009900"/></linearGradient><linearGradient id="o23" gradientUnits="userSpaceOnUse" x1="1170" x2="1379"><stop offset="0" stop-color="#00990c"/><stop offset=".4402" stop-color="#009900"/><stop offset="1" stop-color="#009900"/></linearGradient><linearGradient id="o24" gradientUnits="userSpaceOnUse" x1="1170" x2="1383"><stop offset="0" stop-color="#00990c"/><stop offset=".4507" stop-color="#009900"/><stop offset="1" stop-color="#009900"/></linearGradient><linearGradient id="o25" gradientUnits="userSpaceOnUse" x1="1169" x2="1388"><stop offset="0" stop-color="#00990d"/><stop offset=".4612" stop-color="#009900"/><stop offset="1" stop-color="#009900"/></linearGradient><linearGradient id="o26" gradientUnits="userSpaceOnUse" x1="1168" x2="1392"><stop offset="0" stop-color="#00990e"/><stop offset=".4777" stop-color="#009900"/><stop offset="1" stop-color="#009900"/></linearGradient><linearGradient id="o27" gradientUnits="userSpaceOnUse" x1="1168" x2="1396"><stop offset="0" stop-color="#00990e"/><stop offset=".4868" stop-color="#009900"/><stop offset="1" stop-color="#009900"/></linearGradient><linearGradient id="o28" gradientUnits="userSpaceOnUse" x1="1167" x2="1400"><stop offset="0" stop-color="#00990f"/><stop offset=".4979" stop-color="#009900"/><stop offset="1" stop-color="#009900"/></linearGradient><linearGradient id="o29" gradientUnits="userSpaceOnUse" x1="1167" x2="1404"><stop offset="0" stop-color="#009910"/><stop offset=".5105" stop-color="#009900"/><stop offset="1" stop-color="#009900"/></linearGradient><linearGradient id="o30" gradientUnits="userSpaceOnUse" x1="1166" x2="1407"><stop offset="0" stop-color="#009910"/><stop offset=".5228" stop-color="#009900"/><stop offset="1" stop-color="#009900"/></linearGradient><linearGradient id="o31" gradientUnits="userSpaceOnUse" x1="1166" x2="1411"><stop offset="0" stop-color="#009911"/><stop offset=".5306" stop-color="#009900"/><stop offset="1" stop-color="#009900"/></linearGradient><linearGradient id="o32" gradientUnits="userSpaceOnUse" x1="1166" x2="1415"><stop offset="0" stop-color="#009912"/><stop offset=".5422" stop-color="#009900"/><stop offset="1" stop-color="#009900"/></linearGradient><linearGradient id="o33" gradientUnits="userSpaceOnUse" x1="1165" x2="1419"><stop offset="0" stop-color="#009912"/><stop offset=".5512" stop-color="#009900"/><stop offset="1" stop-color="#009900"/></linearGradient><linearGradient id="o34" gradientUnits="userSpaceOnUse" x1="1165" x2="1423"><stop offset="0" stop-color="#009913"/><stop offset=".5581" stop-color="#009900"/><stop offset="1" stop-color="#009900"/></linearGradient><linearGradient id="o35" gradientUnits="userSpaceOnUse" x1="1165" x2="1427"><stop offset="0" stop-color="#009914"/><stop offset=".5687" stop-color="#009900"/><stop offset="1" stop-color="#009900"/></linearGradient><linearGradient id="o36" gradientUnits="userSpaceOnUse" x1="1164" x2="1430"><stop offset="0" stop-color="#009915"/><stop offset=".5789" stop-color="#009900"/><stop offset="1" stop-color="#009900"/></linearGradient><linearGradient id="o37" gradientUnits="userSpaceOnUse" x1="1164" x2="1434"><stop offset="0" stop-color="#009915"/><stop offset=".5852" stop-color="#009900"/><stop offset="1" stop-color="#009900"/></linearGradient><linearGradient id="o38" gradientUnits="userSpaceOnUse" x1="1164" x2="1438"><stop offset="0" stop-color="#009916"/><stop offset=".5949" stop-color="#009900"/><stop offset="1" stop-color="#009900"/></linearGradient><linearGradient id="o39" gradientUnits="userSpaceOnUse" x1="1164" x2="1441"><stop offset="0" stop-color="#009917"/><stop offset=".6029" stop-color="#009900"/><stop offset="1" stop-color="#009900"/></linearGradient><linearGradient id="o40" gradientUnits="userSpaceOnUse" x1="1163" x2="1445"><stop offset="0" stop-color="#009918"/><stop offset=".6135" stop-color="#009900"/><stop offset="1" stop-color="#009900"/></linearGradient><linearGradient id="o41" gradientUnits="userSpaceOnUse" x1="1163" x2="1449"><stop offset="0" stop-color="#009918"/><stop offset=".6189" stop-color="#009900"/><stop offset="1" stop-color="#029900"/></linearGradient><linearGradient id="o42" gradientUnits="userSpaceOnUse" x1="1163" x2="1452"><stop offset="0" stop-color="#009919"/><stop offset=".6263" stop-color="#009900"/><stop offset=".9792" stop-color="#009900"/><stop offset="1" stop-color="#049900"/></linearGradient><linearGradient id="o43" gradientUnits="userSpaceOnUse" x1="1163" x2="1456"><stop offset="0" stop-color="#00991a"/><stop offset=".6348" stop-color="#009900"/><stop offset=".9625" stop-color="#009900"/><stop offset="1" stop-color="#089900"/></linearGradient><linearGradient id="o44" gradientUnits="userSpaceOnUse" x1="1163" x2="1460"><stop offset="0" stop-color="#00991a"/><stop offset=".6397" stop-color="#009900"/><stop offset=".9461" stop-color="#009900"/><stop offset="1" stop-color="#0b9900"/></linearGradient><linearGradient id="o45" gradientUnits="userSpaceOnUse" x1="1163" x2="1463"><stop offset="0" stop-color="#00991b"/><stop offset=".6467" stop-color="#009900"/><stop offset=".9333" stop-color="#009900"/><stop offset="1" stop-color="#0e9900"/></linearGradient><linearGradient id="o46" gradientUnits="userSpaceOnUse" x1="1162" x2="1467"><stop offset="0" stop-color="#00991c"/><stop offset=".6557" stop-color="#009900"/><stop offset=".918" stop-color="#009900"/><stop offset="1" stop-color="#129900"/></linearGradient><linearGradient id="o47" gradientUnits="userSpaceOnUse" x1="1162" x2="1471"><stop offset="0" stop-color="#00991d"/><stop offset=".6602" stop-color="#009900"/><stop offset=".9029" stop-color="#009900"/><stop offset="1" stop-color="#169900"/></linearGradient><linearGradient id="o48" gradientUnits="userSpaceOnUse" x1="1162" x2="1474"><stop offset="0" stop-color="#00991e"/><stop offset=".6667" stop-color="#009900"/><stop offset=".891" stop-color="#009900"/><stop offset="1" stop-color="#199900"/></linearGradient><linearGradient id="o49" gradientUnits="userSpaceOnUse" x1="1162" x2="1478"><stop offset="0" stop-color="#00991e"/><stop offset=".6741" stop-color="#009900"/><stop offset=".8766" stop-color="#009900"/><stop offset="1" stop-color="#1d9900"/></linearGradient><linearGradient id="o50" gradientUnits="userSpaceOnUse" x1="1162" x2="1481"><stop offset="0" stop-color="#00991f"/><stop offset=".6803" stop-color="#009900"/><stop offset=".8652" stop-color="#009900"/><stop offset="1" stop-color="#219900"/></linearGradient><linearGradient id="o51" gradientUnits="userSpaceOnUse" x1="1162" x2="1485"><stop offset="0" stop-color="#009920"/><stop offset=".3963" stop-color="#009910"/><stop offset=".6842" stop-color="#009900"/><stop offset=".8514" stop-color="#009900"/><stop offset="1" stop-color="#259900"/></linearGradient><linearGradient id="o52" gradientUnits="userSpaceOnUse" x1="1162" x2="1488"><stop offset="0" stop-color="#009921"/><stop offset=".6933" stop-color="#009900"/><stop offset=".8405" stop-color="#009900"/><stop offset="1" stop-color="#289900"/></linearGradient><linearGradient id="o53" gradientUnits="userSpaceOnUse" x1="1162" x2="1492"><stop offset="0" stop-color="#009922"/><stop offset=".4212" stop-color="#009910"/><stop offset=".697" stop-color="#009900"/><stop offset=".8273" stop-color="#009900"/><stop offset="1" stop-color="#2d9900"/></linearGradient><linearGradient id="o54" gradientUnits="userSpaceOnUse" x1="1162" x2="1495"><stop offset="0" stop-color="#009922"/><stop offset=".4144" stop-color="#009911"/><stop offset=".7027" stop-color="#009900"/><stop offset=".8168" stop-color="#009900"/><stop offset="1" stop-color="#309900"/></linearGradient><linearGradient id="o55" gradientUnits="userSpaceOnUse" x1="1162" x2="1499"><stop offset="0" stop-color="#009923"/><stop offset=".3858" stop-color="#009913"/><stop offset=".7092" stop-color="#009900"/><stop offset=".8042" stop-color="#009900"/><stop offset="1" stop-color="#359900"/></linearGradient><linearGradient id="o56" gradientUnits="userSpaceOnUse" x1="1162" x2="1502"><stop offset="0" stop-color="#009924"/><stop offset=".3794" stop-color="#009914"/><stop offset=".7147" stop-color="#009900"/><stop offset=".7941" stop-color="#009900"/><stop offset="1" stop-color="#399900"/></linearGradient><linearGradient id="o57" gradientUnits="userSpaceOnUse" x1="1163" x2="1506"><stop offset="0" stop-color="#009925"/><stop offset=".3907" stop-color="#009914"/><stop offset=".7201" stop-color="#009900"/><stop offset=".7813" stop-color="#009900"/><stop offset="1" stop-color="#3e9900"/></linearGradient><linearGradient id="o58" gradientUnits="userSpaceOnUse" x1="1163" x2="1509"><stop offset="0" stop-color="#009926"/><stop offset=".7717" stop-color="#009900"/><stop offset="1" stop-color="#429900"/></linearGradient><linearGradient id="o59" gradientUnits="userSpaceOnUse" x1="1163" x2="1513"><stop offset="0" stop-color="#009927"/><stop offset=".76" stop-color="#009900"/><stop offset=".88" stop-color="#219900"/><stop offset="1" stop-color="#489900"/></linearGradient><linearGradient id="o60" gradientUnits="userSpaceOnUse" x1="1163" x2="1516"><stop offset="0" stop-color="#009927"/><stop offset=".3541" stop-color="#009918"/><stop offset=".7535" stop-color="#009900"/><stop offset=".8754" stop-color="#239900"/><stop offset="1" stop-color="#4c9900"/></linearGradient><linearGradient id="o61" gradientUnits="userSpaceOnUse" x1="1163" x2="1520"><stop offset="0" stop-color="#009928"/><stop offset=".423" stop-color="#009915"/><stop offset=".7423" stop-color="#009900"/><stop offset=".8908" stop-color="#2c9900"/><stop offset="1" stop-color="#529900"/></linearGradient><linearGradient id="o62" gradientUnits="userSpaceOnUse" x1="1163" x2="1523"><stop offset="0" stop-color="#009929"/><stop offset=".4" stop-color="#009917"/><stop offset=".7333" stop-color="#009901"/><stop offset=".8639" stop-color="#279900"/><stop offset="1" stop-color="#569900"/></linearGradient><linearGradient id="o63" gradientUnits="userSpaceOnUse" x1="1163" x2="1527"><stop offset="0" stop-color="#00992a"/><stop offset=".3764" stop-color="#009919"/><stop offset=".7225" stop-color="#009902"/><stop offset=".8571" stop-color="#299900"/><stop offset="1" stop-color="#5c9900"/></linearGradient><linearGradient id="o64" gradientUnits="userSpaceOnUse" x1="1163" x2="1530"><stop offset="0" stop-color="#00992b"/><stop offset=".3542" stop-color="#00991b"/><stop offset=".7139" stop-color="#009904"/><stop offset=".7548" stop-color="#0c9900"/><stop offset=".8556" stop-color="#2c9900"/><stop offset="1" stop-color="#619900"/></linearGradient><linearGradient id="o65" gradientUnits="userSpaceOnUse" x1="1163" x2="1534"><stop offset="0" stop-color="#00992c"/><stop offset=".3315" stop-color="#00991d"/><stop offset=".7035" stop-color="#009905"/><stop offset=".7574" stop-color="#119900"/><stop offset=".8571" stop-color="#319900"/><stop offset="1" stop-color="#679900"/></linearGradient><linearGradient id="o66" gradientUnits="userSpaceOnUse" x1="1164" x2="1537"><stop offset="0" stop-color="#00992d"/><stop offset=".3807" stop-color="#00991b"/><stop offset=".6944" stop-color="#009906"/><stop offset=".7641" stop-color="#169900"/><stop offset=".866" stop-color="#389900"/><stop offset="1" stop-color="#6d9900"/></linearGradient><linearGradient id="o67" gradientUnits="userSpaceOnUse" x1="1164" x2="1541"><stop offset="0" stop-color="#00992e"/><stop offset=".3767" stop-color="#00991c"/><stop offset=".6844" stop-color="#009907"/><stop offset=".7666" stop-color="#1a9900"/><stop offset=".8196" stop-color="#2c9900"/><stop offset="1" stop-color="#749900"/></linearGradient><linearGradient id="o68" gradientUnits="userSpaceOnUse" x1="1164" x2="1544"><stop offset="0" stop-color="#00992f"/><stop offset=".3737" stop-color="#00991d"/><stop offset=".6763" stop-color="#009908"/><stop offset=".7711" stop-color="#1f9900"/><stop offset=".8289" stop-color="#339900"/><stop offset="1" stop-color="#799900"/></linearGradient><linearGradient id="o69" gradientUnits="userSpaceOnUse" x1="1164" x2="1548"><stop offset="0" stop-color="#009930"/><stop offset=".388" stop-color="#00991d"/><stop offset=".6667" stop-color="#009909"/><stop offset=".776" stop-color="#259900"/><stop offset=".8932" stop-color="#519900"/><stop offset="1" stop-color="#809900"/></linearGradient><linearGradient id="o70" gradientUnits="userSpaceOnUse" x1="1165" x2="1551"><stop offset="0" stop-color="#009931"/><stop offset=".3497" stop-color="#009920"/><stop offset=".658" stop-color="#00990b"/><stop offset=".7798" stop-color="#2a9900"/><stop offset=".8549" stop-color="#469900"/><stop offset="1" stop-color="#879900"/></linearGradient><linearGradient id="o71" gradientUnits="userSpaceOnUse" x1="1165" x2="1555"><stop offset="0" stop-color="#009932"/><stop offset=".3641" stop-color="#009920"/><stop offset=".6487" stop-color="#00990c"/><stop offset=".7821" stop-color="#2f9900"/><stop offset=".8615" stop-color="#4e9900"/><stop offset="1" stop-color="#8e9900"/></linearGradient><linearGradient id="o72" gradientUnits="userSpaceOnUse" x1="1165" x2="1558"><stop offset="0" stop-color="#009933"/><stop offset=".3461" stop-color="#009922"/><stop offset=".6412" stop-color="#00990d"/><stop offset=".7888" stop-color="#359900"/><stop offset=".8295" stop-color="#459900"/><stop offset=".916" stop-color="#6b9900"/><stop offset="1" stop-color="#959900"/></linearGradient><linearGradient id="o73" gradientUnits="userSpaceOnUse" x1="1165" x2="1562"><stop offset="0" stop-color="#009934"/><stop offset=".3098" stop-color="#009925"/><stop offset=".6322" stop-color="#00990f"/><stop offset=".7909" stop-color="#3b9900"/><stop offset=".8917" stop-color="#669900"/><stop offset=".9924" stop-color="#999900"/><stop offset="1" stop-color="#999500"/></linearGradient><linearGradient id="o74" gradientUnits="userSpaceOnUse" x1="1165" x2="1565"><stop offset="0" stop-color="#009935"/><stop offset=".36" stop-color="#009923"/><stop offset=".625" stop-color="#009910"/><stop offset=".805" stop-color="#449900"/><stop offset=".9075" stop-color="#739900"/><stop offset=".98" stop-color="#999900"/><stop offset="1" stop-color="#998f00"/></linearGradient><linearGradient id="o75" gradientUnits="userSpaceOnUse" x1="1166" x2="1569"><stop offset="0" stop-color="#009936"/><stop offset=".3573" stop-color="#009924"/><stop offset=".6154" stop-color="#009911"/><stop offset=".7047" stop-color="#20990a"/><stop offset=".8065" stop-color="#4a9900"/><stop offset=".9653" stop-color="#999900"/><stop offset="1" stop-color="#998700"/></linearGradient><linearGradient id="o76" gradientUnits="userSpaceOnUse" x1="1166" x2="1572"><stop offset="0" stop-color="#009937"/><stop offset=".3571" stop-color="#009925"/><stop offset=".6084" stop-color="#009913"/><stop offset=".7808" stop-color="#439903"/><stop offset=".8645" stop-color="#6a9900"/><stop offset=".9532" stop-color="#999900"/><stop offset="1" stop-color="#998100"/></linearGradient><linearGradient id="o77" gradientUnits="userSpaceOnUse" x1="1166" x2="1575"><stop offset="0" stop-color="#009938"/><stop offset=".357" stop-color="#009926"/><stop offset=".6015" stop-color="#009914"/><stop offset=".7848" stop-color="#499903"/><stop offset=".8093" stop-color="#559900"/><stop offset=".9413" stop-color="#999900"/><stop offset="1" stop-color="#997c00"/></linearGradient><linearGradient id="o78" gradientUnits="userSpaceOnUse" x1="1167" x2="1579"><stop offset="0" stop-color="#009939"/><stop offset=".3228" stop-color="#009929"/><stop offset=".5922" stop-color="#009915"/><stop offset=".7597" stop-color="#439906"/><stop offset=".8107" stop-color="#5b9900"/><stop offset=".9248" stop-color="#989900"/><stop offset="1" stop-color="#997600"/></linearGradient><linearGradient id="o79" gradientUnits="userSpaceOnUse" x1="1167" x2="1582"><stop offset="0" stop-color="#00993a"/><stop offset=".3398" stop-color="#009929"/><stop offset=".5855" stop-color="#009917"/><stop offset=".6627" stop-color="#1d9910"/><stop offset=".759" stop-color="#479907"/><stop offset=".8145" stop-color="#629900"/><stop offset=".9133" stop-color="#989900"/><stop offset="1" stop-color="#997100"/></linearGradient><linearGradient id="o80" gradientUnits="userSpaceOnUse" x1="1167" x2="1586"><stop offset="0" stop-color="#00993b"/><stop offset=".3246" stop-color="#00992b"/><stop offset=".5776" stop-color="#009918"/><stop offset=".7399" stop-color="#439909"/><stop offset=".8186" stop-color="#6b9900"/><stop offset=".9021" stop-color="#999800"/><stop offset=".9475" stop-color="#998000"/><stop offset="1" stop-color="#996b00"/></linearGradient><linearGradient id="o81" gradientUnits="userSpaceOnUse" x1="1167" x2="1589"><stop offset="0" stop-color="#00993d"/><stop offset=".3578" stop-color="#00992a"/><stop offset=".5711" stop-color="#00991a"/><stop offset=".7393" stop-color="#47990a"/><stop offset=".8223" stop-color="#729900"/><stop offset=".891" stop-color="#999800"/><stop offset=".9313" stop-color="#998200"/><stop offset="1" stop-color="#996700"/></linearGradient><linearGradient id="o82" gradientUnits="userSpaceOnUse" x1="1168" x2="1593"><stop offset="0" stop-color="#00993e"/><stop offset=".3412" stop-color="#00992c"/><stop offset=".5624" stop-color="#00991b"/><stop offset=".6682" stop-color="#2b9912"/><stop offset=".7341" stop-color="#4a990b"/><stop offset=".8235" stop-color="#7a9900"/><stop offset=".8753" stop-color="#999900"/><stop offset=".9412" stop-color="#997700"/><stop offset="1" stop-color="#996200"/></linearGradient><linearGradient id="o83" gradientUnits="userSpaceOnUse" x1="1168" x2="1596"><stop offset="0" stop-color="#00993f"/><stop offset=".2453" stop-color="#009933"/><stop offset=".5584" stop-color="#00991d"/><stop offset=".7313" stop-color="#4d990c"/><stop offset=".8294" stop-color="#839900"/><stop offset=".8645" stop-color="#999900"/><stop offset=".9159" stop-color="#997d00"/><stop offset="1" stop-color="#995e00"/></linearGradient><linearGradient id="o84" gradientUnits="userSpaceOnUse" x1="1168" x2="1600"><stop offset="0" stop-color="#009940"/><stop offset=".2986" stop-color="#009931"/><stop offset=".5509" stop-color="#00991e"/><stop offset=".713" stop-color="#49990f"/><stop offset=".794" stop-color="#759905"/><stop offset=".8519" stop-color="#999900"/><stop offset=".8981" stop-color="#997f00"/><stop offset=".9421" stop-color="#996c00"/><stop offset="1" stop-color="#995900"/></linearGradient><linearGradient id="o85" gradientUnits="userSpaceOnUse" x1="1169" x2="1603"><stop offset="0" stop-color="#009941"/><stop offset=".2673" stop-color="#009934"/><stop offset=".5438" stop-color="#009920"/><stop offset=".7097" stop-color="#4c9910"/><stop offset=".841" stop-color="#999900"/><stop offset=".8825" stop-color="#998100"/><stop offset=".9378" stop-color="#996900"/><stop offset="1" stop-color="#995600"/></linearGradient><linearGradient id="o86" gradientUnits="userSpaceOnUse" x1="1169" x2="1606"><stop offset="0" stop-color="#009943"/><stop offset=".3501" stop-color="#009930"/><stop offset=".5378" stop-color="#009921"/><stop offset=".6819" stop-color="#429914"/><stop offset=".7757" stop-color="#769909"/><stop offset=".8307" stop-color="#999902"/><stop offset=".8673" stop-color="#998300"/><stop offset=".913" stop-color="#996e00"/><stop offset="1" stop-color="#995200"/></linearGradient><linearGradient id="o87" gradientUnits="userSpaceOnUse" x1="1170" x2="1610"><stop offset="0" stop-color="#009944"/><stop offset=".2568" stop-color="#009937"/><stop offset=".5295" stop-color="#009923"/><stop offset=".6886" stop-color="#4b9914"/><stop offset=".8182" stop-color="#999904"/><stop offset=".8523" stop-color="#998400"/><stop offset=".9091" stop-color="#996a00"/><stop offset="1" stop-color="#994e00"/></linearGradient><linearGradient id="o88" gradientUnits="userSpaceOnUse" x1="1170" x2="1613"><stop offset="0" stop-color="#009945"/><stop offset=".2619" stop-color="#009938"/><stop offset=".5237" stop-color="#009925"/><stop offset=".6749" stop-color="#489916"/><stop offset=".7449" stop-color="#70990e"/><stop offset=".8081" stop-color="#999906"/><stop offset=".851" stop-color="#997f00"/><stop offset=".9052" stop-color="#996700"/><stop offset="1" stop-color="#994b00"/></linearGradient><linearGradient id="o89" gradientUnits="userSpaceOnUse" x1="1170" x2="1617"><stop offset="0" stop-color="#009946"/><stop offset=".2662" stop-color="#009939"/><stop offset=".5168" stop-color="#009926"/><stop offset=".66" stop-color="#459919"/><stop offset=".7293" stop-color="#6d9911"/><stop offset=".7964" stop-color="#999908"/><stop offset=".8456" stop-color="#997c00"/><stop offset=".8792" stop-color="#996c00"/><stop offset=".9351" stop-color="#995800"/><stop offset="1" stop-color="#994700"/></linearGradient><linearGradient id="o90" gradientUnits="userSpaceOnUse" x1="1171" x2="1620"><stop offset="0" stop-color="#009948"/><stop offset=".2539" stop-color="#00993b"/><stop offset=".51" stop-color="#009928"/><stop offset=".6459" stop-color="#42991b"/><stop offset=".7149" stop-color="#6a9913"/><stop offset=".7862" stop-color="#99990a"/><stop offset=".8218" stop-color="#998204"/><stop offset=".8775" stop-color="#996800"/><stop offset=".9465" stop-color="#995100"/><stop offset="1" stop-color="#994400"/></linearGradient><linearGradient id="o91" gradientUnits="userSpaceOnUse" x1="1171" x2="1624"><stop offset="0" stop-color="#009949"/><stop offset=".2759" stop-color="#00993b"/><stop offset=".5033" stop-color="#00992a"/><stop offset=".6313" stop-color="#3f991e"/><stop offset=".6998" stop-color="#679916"/><stop offset=".7748" stop-color="#99980c"/><stop offset=".819" stop-color="#997d05"/><stop offset=".872" stop-color="#996500"/><stop offset=".9426" stop-color="#994e00"/><stop offset="1" stop-color="#994100"/></linearGradient><linearGradient id="o92" gradientUnits="userSpaceOnUse" x1="1172" x2="1627"><stop offset="0" stop-color="#00994a"/><stop offset=".2308" stop-color="#00993f"/><stop offset=".4967" stop-color="#00992c"/><stop offset=".6374" stop-color="#47991e"/><stop offset=".7648" stop-color="#99980e"/><stop offset=".8044" stop-color="#997f07"/><stop offset=".8681" stop-color="#996200"/><stop offset=".9231" stop-color="#995000"/><stop offset="1" stop-color="#993e00"/></linearGradient><linearGradient id="o93" gradientUnits="userSpaceOnUse" x1="1172" x2="1630"><stop offset="0" stop-color="#00994c"/><stop offset=".2707" stop-color="#00993e"/><stop offset=".4913" stop-color="#00992d"/><stop offset=".6332" stop-color="#499920"/><stop offset=".7555" stop-color="#999811"/><stop offset=".8035" stop-color="#997a08"/><stop offset=".8624" stop-color="#996000"/><stop offset=".9367" stop-color="#994900"/><stop offset="1" stop-color="#993b00"/></linearGradient><linearGradient id="o94" gradientUnits="userSpaceOnUse" x1="1172" x2="1634"><stop offset="0" stop-color="#00994d"/><stop offset=".2619" stop-color="#009940"/><stop offset=".4848" stop-color="#00992f"/><stop offset=".6126" stop-color="#429923"/><stop offset=".671" stop-color="#66991c"/><stop offset=".7446" stop-color="#999813"/><stop offset=".7879" stop-color="#997c0a"/><stop offset=".8442" stop-color="#996202"/><stop offset=".9113" stop-color="#994c00"/><stop offset="1" stop-color="#993800"/></linearGradient><linearGradient id="o95" gradientUnits="userSpaceOnUse" x1="1173" x2="1637"><stop offset="0" stop-color="#00994e"/><stop offset=".2522" stop-color="#009942"/><stop offset=".4784" stop-color="#009931"/><stop offset=".6078" stop-color="#449925"/><stop offset=".7349" stop-color="#999815"/><stop offset=".7888" stop-color="#99760a"/><stop offset=".8491" stop-color="#995c02"/><stop offset=".9181" stop-color="#994700"/><stop offset="1" stop-color="#993600"/></linearGradient><linearGradient id="o96" gradientUnits="userSpaceOnUse" x1="1173" x2="1641"><stop offset="0" stop-color="#009950"/><stop offset=".2436" stop-color="#009944"/><stop offset=".4722" stop-color="#009933"/><stop offset=".5962" stop-color="#429927"/><stop offset=".6603" stop-color="#6b9920"/><stop offset=".7222" stop-color="#999918"/><stop offset=".7714" stop-color="#99790d"/><stop offset=".8333" stop-color="#995d04"/><stop offset=".9038" stop-color="#994700"/><stop offset="1" stop-color="#993300"/></linearGradient><linearGradient id="o97" gradientUnits="userSpaceOnUse" x1="1174" x2="1644"><stop offset="0" stop-color="#009951"/><stop offset=".2511" stop-color="#009945"/><stop offset=".466" stop-color="#009935"/><stop offset=".5915" stop-color="#449929"/><stop offset=".6383" stop-color="#629924"/><stop offset=".7128" stop-color="#99991b"/><stop offset=".7574" stop-color="#997b10"/><stop offset=".8277" stop-color="#995b05"/><stop offset=".8957" stop-color="#994600"/><stop offset="1" stop-color="#993100"/></linearGradient><linearGradient id="o98" gradientUnits="userSpaceOnUse" x1="1174" x2="1648"><stop offset="0" stop-color="#009953"/><stop offset=".2764" stop-color="#009945"/><stop offset=".4599" stop-color="#009937"/><stop offset=".5865" stop-color="#46992b"/><stop offset=".6603" stop-color="#789923"/><stop offset=".7025" stop-color="#99991d"/><stop offset=".7553" stop-color="#997611"/><stop offset=".8207" stop-color="#995906"/><stop offset=".8819" stop-color="#994600"/><stop offset="1" stop-color="#992e00"/></linearGradient><linearGradient id="o99" gradientUnits="userSpaceOnUse" x1="1175" x2="1651"><stop offset="0" stop-color="#009954"/><stop offset=".2185" stop-color="#00994a"/><stop offset=".4538" stop-color="#009939"/><stop offset=".5378" stop-color="#2d9932"/><stop offset=".5987" stop-color="#53992b"/><stop offset=".6933" stop-color="#999920"/><stop offset=".7416" stop-color="#997813"/><stop offset=".8151" stop-color="#995707"/><stop offset=".8739" stop-color="#994500"/><stop offset="1" stop-color="#992c00"/></linearGradient><linearGradient id="o100" gradientUnits="userSpaceOnUse" x1="1175" x2="1655"><stop offset="0" stop-color="#009956"/><stop offset=".2792" stop-color="#009948"/><stop offset=".4479" stop-color="#00993b"/><stop offset=".5188" stop-color="#269935"/><stop offset=".5813" stop-color="#4d992f"/><stop offset=".6833" stop-color="#999922"/><stop offset=".7396" stop-color="#997314"/><stop offset=".8083" stop-color="#995508"/><stop offset=".875" stop-color="#994200"/><stop offset="1" stop-color="#992900"/></linearGradient><linearGradient id="o101" gradientUnits="userSpaceOnUse" x1="1176" x2="1658"><stop offset="0" stop-color="#009957"/><stop offset=".2054" stop-color="#00994e"/><stop offset=".4419" stop-color="#00993d"/><stop offset=".5083" stop-color="#249938"/><stop offset=".5705" stop-color="#4b9931"/><stop offset=".6743" stop-color="#999925"/><stop offset=".7261" stop-color="#997517"/><stop offset=".7946" stop-color="#99560a"/><stop offset=".8776" stop-color="#993e00"/><stop offset="1" stop-color="#992700"/></linearGradient><linearGradient id="o102" gradientUnits="userSpaceOnUse" x1="1176" x2="1661"><stop offset="0" stop-color="#009959"/><stop offset=".4371" stop-color="#009940"/><stop offset=".501" stop-color="#23993a"/><stop offset=".5608" stop-color="#499934"/><stop offset=".666" stop-color="#999928"/><stop offset=".6928" stop-color="#99841f"/><stop offset=".7258" stop-color="#997017"/><stop offset=".7897" stop-color="#99540b"/><stop offset=".8825" stop-color="#993a00"/><stop offset="1" stop-color="#992500"/></linearGradient><linearGradient id="o103" gradientUnits="userSpaceOnUse" x1="1176" x2="1665"><stop offset="0" stop-color="#00995b"/><stop offset=".4315" stop-color="#009942"/><stop offset=".5399" stop-color="#409938"/><stop offset=".6053" stop-color="#6f9931"/><stop offset=".6564" stop-color="#99992a"/><stop offset=".7096" stop-color="#99731a"/><stop offset=".7894" stop-color="#99500b"/><stop offset=".8834" stop-color="#993700"/><stop offset="1" stop-color="#992300"/></linearGradient><linearGradient id="o104" gradientUnits="userSpaceOnUse" x1="1177" x2="1668"><stop offset="0" stop-color="#00995c"/><stop offset=".2261" stop-color="#009952"/><stop offset=".4257" stop-color="#009944"/><stop offset=".4745" stop-color="#1b9940"/><stop offset=".5499" stop-color="#4c9939"/><stop offset=".6456" stop-color="#98992e"/><stop offset=".7088" stop-color="#996e1a"/><stop offset=".7841" stop-color="#994e0c"/><stop offset=".8859" stop-color="#993400"/><stop offset="1" stop-color="#992100"/></linearGradient><linearGradient id="o105" gradientUnits="userSpaceOnUse" x1="1177" x2="1672"><stop offset="0" stop-color="#00995e"/><stop offset=".2404" stop-color="#009953"/><stop offset=".4202" stop-color="#009946"/><stop offset=".5253" stop-color="#40993d"/><stop offset=".5758" stop-color="#659938"/><stop offset=".6364" stop-color="#989930"/><stop offset=".6929" stop-color="#99711e"/><stop offset=".7636" stop-color="#99510f"/><stop offset=".8263" stop-color="#993e07"/><stop offset=".8869" stop-color="#993100"/><stop offset="1" stop-color="#991f00"/></linearGradient><linearGradient id="o106" gradientUnits="userSpaceOnUse" x1="1178" x2="1675"><stop offset="0" stop-color="#009960"/><stop offset=".4165" stop-color="#009949"/><stop offset=".5252" stop-color="#45993f"/><stop offset=".5755" stop-color="#6b993a"/><stop offset=".6278" stop-color="#989933"/><stop offset=".66" stop-color="#998028"/><stop offset=".6942" stop-color="#996b1e"/><stop offset=".7767" stop-color="#99490e"/><stop offset=".8913" stop-color="#992e00"/><stop offset="1" stop-color="#991e00"/></linearGradient><linearGradient id="o107" gradientUnits="userSpaceOnUse" x1="1178" x2="1679"><stop offset="0" stop-color="#009962"/><stop offset=".4112" stop-color="#00994b"/><stop offset=".511" stop-color="#409942"/><stop offset=".5649" stop-color="#69993d"/><stop offset=".6188" stop-color="#989936"/><stop offset=".6766" stop-color="#996f22"/><stop offset=".7146" stop-color="#995c19"/><stop offset=".7745" stop-color="#99460e"/><stop offset=".8922" stop-color="#992b00"/><stop offset="1" stop-color="#991c00"/></linearGradient><linearGradient id="o108" gradientUnits="userSpaceOnUse" x1="1179" x2="1682"><stop offset="0" stop-color="#009963"/><stop offset=".2167" stop-color="#00995a"/><stop offset=".4056" stop-color="#00994d"/><stop offset=".5149" stop-color="#489944"/><stop offset=".6103" stop-color="#98993a"/><stop offset=".6382" stop-color="#99822e"/><stop offset=".6779" stop-color="#996921"/><stop offset=".7634" stop-color="#994610"/><stop offset=".8946" stop-color="#992800"/><stop offset="1" stop-color="#991a00"/></linearGradient><linearGradient id="o109" gradientUnits="userSpaceOnUse" x1="1179" x2="1686"><stop offset="0" stop-color="#009965"/><stop offset=".4004" stop-color="#009950"/><stop offset=".497" stop-color="#409948"/><stop offset=".5444" stop-color="#659943"/><stop offset=".6016" stop-color="#98993d"/><stop offset=".6371" stop-color="#997c2e"/><stop offset=".6607" stop-color="#996d26"/><stop offset=".6982" stop-color="#995a1c"/><stop offset=".7456" stop-color="#994812"/><stop offset=".8146" stop-color="#993509"/><stop offset=".8955" stop-color="#992600"/><stop offset="1" stop-color="#991800"/></linearGradient><linearGradient id="o110" gradientUnits="userSpaceOnUse" x1="1180" x2="1689"><stop offset="0" stop-color="#009967"/><stop offset=".2358" stop-color="#00995d"/><stop offset=".3949" stop-color="#009952"/><stop offset=".4597" stop-color="#2a994d"/><stop offset=".5147" stop-color="#539948"/><stop offset=".5933" stop-color="#999940"/><stop offset=".6267" stop-color="#997d31"/><stop offset=".6621" stop-color="#996725"/><stop offset=".7505" stop-color="#994312"/><stop offset=".8212" stop-color="#993108"/><stop offset=".8998" stop-color="#992300"/><stop offset="1" stop-color="#991700"/></linearGradient><linearGradient id="o111" gradientUnits="userSpaceOnUse" x1="1181" x2="1692"><stop offset="0" stop-color="#009969"/><stop offset=".3894" stop-color="#009955"/><stop offset=".4951" stop-color="#49994d"/><stop offset=".5421" stop-color="#709948"/><stop offset=".5851" stop-color="#999943"/><stop offset=".6125" stop-color="#998136"/><stop offset=".6438" stop-color="#996c2a"/><stop offset=".681" stop-color="#995920"/><stop offset=".7339" stop-color="#994515"/><stop offset=".8141" stop-color="#993009"/><stop offset=".9022" stop-color="#992100"/><stop offset="1" stop-color="#991500"/></linearGradient><linearGradient id="o112" gradientUnits="userSpaceOnUse" x1="1181" x2="1696"><stop offset="0" stop-color="#00996b"/><stop offset=".3845" stop-color="#009958"/><stop offset=".4447" stop-color="#289953"/><stop offset=".4932" stop-color="#4d994f"/><stop offset=".5767" stop-color="#999947"/><stop offset=".6117" stop-color="#997b36"/><stop offset=".6447" stop-color="#99662a"/><stop offset=".7223" stop-color="#994517"/><stop offset=".8058" stop-color="#992f0a"/><stop offset=".9029" stop-color="#991f00"/><stop offset="1" stop-color="#991300"/></linearGradient><linearGradient id="o113" gradientUnits="userSpaceOnUse" x1="1182" x2="1699"><stop offset="0" stop-color="#00996d"/><stop offset=".3791" stop-color="#00995b"/><stop offset=".4739" stop-color="#439953"/><stop offset=".53" stop-color="#73994e"/><stop offset=".5687" stop-color="#99994a"/><stop offset=".5899" stop-color="#99853e"/><stop offset=".6286" stop-color="#996a2e"/><stop offset=".6654" stop-color="#995723"/><stop offset=".7118" stop-color="#994519"/><stop offset=".7988" stop-color="#992e0b"/><stop offset=".8704" stop-color="#992203"/><stop offset="1" stop-color="#991200"/></linearGradient><linearGradient id="o114" gradientUnits="userSpaceOnUse" x1="1182" x2="1703"><stop offset="0" stop-color="#00996f"/><stop offset=".3743" stop-color="#00995d"/><stop offset=".4722" stop-color="#479956"/><stop offset=".5106" stop-color="#689953"/><stop offset=".5605" stop-color="#99994e"/><stop offset=".5912" stop-color="#997d3d"/><stop offset=".6276" stop-color="#99652e"/><stop offset=".6737" stop-color="#994f21"/><stop offset=".7198" stop-color="#993f17"/><stop offset=".8061" stop-color="#992a0a"/><stop offset=".8944" stop-color="#991c01"/><stop offset="1" stop-color="#991000"/></linearGradient><linearGradient id="o115" gradientUnits="userSpaceOnUse" x1="1183" x2="1706"><stop offset="0" stop-color="#009971"/><stop offset=".369" stop-color="#009960"/><stop offset=".4608" stop-color="#43995a"/><stop offset=".5086" stop-color="#6d9956"/><stop offset=".5526" stop-color="#999951"/><stop offset=".5717" stop-color="#998646"/><stop offset=".6119" stop-color="#996933"/><stop offset=".6616" stop-color="#995024"/><stop offset=".7189" stop-color="#993c17"/><stop offset=".7992" stop-color="#99290b"/><stop offset=".8967" stop-color="#991a01"/><stop offset="1" stop-color="#990f00"/></linearGradient><linearGradient id="o116" gradientUnits="userSpaceOnUse" x1="1183" x2="1710"><stop offset="0" stop-color="#009973"/><stop offset=".3643" stop-color="#009963"/><stop offset=".4592" stop-color="#47995d"/><stop offset=".5446" stop-color="#999955"/><stop offset=".5655" stop-color="#998448"/><stop offset=".6091" stop-color="#996534"/><stop offset=".649" stop-color="#995127"/><stop offset=".7078" stop-color="#993c19"/><stop offset=".797" stop-color="#99270b"/><stop offset=".8975" stop-color="#991801"/><stop offset="1" stop-color="#990e00"/></linearGradient><linearGradient id="o117" gradientUnits="userSpaceOnUse" x1="1184" x2="1713"><stop offset="0" stop-color="#009975"/><stop offset=".3592" stop-color="#009966"/><stop offset=".4045" stop-color="#209963"/><stop offset=".4537" stop-color="#489960"/><stop offset=".535" stop-color="#979959"/><stop offset=".5633" stop-color="#997f48"/><stop offset=".5955" stop-color="#996838"/><stop offset=".6465" stop-color="#994e27"/><stop offset=".6975" stop-color="#993c1b"/><stop offset=".775" stop-color="#99290e"/><stop offset=".8544" stop-color="#991c05"/><stop offset=".9149" stop-color="#991500"/><stop offset="1" stop-color="#990c00"/></linearGradient><linearGradient id="o118" gradientUnits="userSpaceOnUse" x1="1185" x2="1716"><stop offset="0" stop-color="#009977"/><stop offset=".354" stop-color="#009969"/><stop offset=".4369" stop-color="#3f9964"/><stop offset=".484" stop-color="#6a9961"/><stop offset=".5273" stop-color="#98995d"/><stop offset=".5574" stop-color="#997d4a"/><stop offset=".5932" stop-color="#996439"/><stop offset=".6347" stop-color="#994f2a"/><stop offset=".6836" stop-color="#993d1e"/><stop offset=".7684" stop-color="#99280f"/><stop offset=".8456" stop-color="#991c06"/><stop offset=".9171" stop-color="#991300"/><stop offset="1" stop-color="#990b00"/></linearGradient><linearGradient id="o119" gradientUnits="userSpaceOnUse" x1="1185" x2="1720"><stop offset="0" stop-color="#00997a"/><stop offset=".3495" stop-color="#00996c"/><stop offset=".3832" stop-color="#18996b"/><stop offset=".4486" stop-color="#4f9966"/><stop offset=".5196" stop-color="#989961"/><stop offset=".5551" stop-color="#99784a"/><stop offset=".5925" stop-color="#995f38"/><stop offset=".6318" stop-color="#994c2a"/><stop offset=".686" stop-color="#99391d"/><stop offset=".7607" stop-color="#992710"/><stop offset=".8561" stop-color="#991805"/><stop offset=".9178" stop-color="#991100"/><stop offset="1" stop-color="#990a00"/></linearGradient><linearGradient id="o120" gradientUnits="userSpaceOnUse" x1="1186" x2="1723"><stop offset="0" stop-color="#00997c"/><stop offset=".3445" stop-color="#009970"/><stop offset=".4358" stop-color="#49996a"/><stop offset=".514" stop-color="#999864"/><stop offset=".5456" stop-color="#99794e"/><stop offset=".5754" stop-color="#99643e"/><stop offset=".6201" stop-color="#994d2e"/><stop offset=".6723" stop-color="#993a20"/><stop offset=".8063" stop-color="#991d0b"/><stop offset=".9199" stop-color="#990f00"/><stop offset="1" stop-color="#990900"/></linearGradient><linearGradient id="o121" gradientUnits="userSpaceOnUse" x1="1186" x2="1727"><stop offset="0" stop-color="#00997e"/><stop offset=".3401" stop-color="#009973"/><stop offset=".3863" stop-color="#239971"/><stop offset=".4307" stop-color="#4a996e"/><stop offset=".5065" stop-color="#999868"/><stop offset=".5305" stop-color="#997f56"/><stop offset=".573" stop-color="#99603f"/><stop offset=".6174" stop-color="#994a2e"/><stop offset=".6784" stop-color="#99351e"/><stop offset=".7523" stop-color="#992411"/><stop offset=".8373" stop-color="#991707"/><stop offset=".9224" stop-color="#990e00"/><stop offset="1" stop-color="#990700"/></linearGradient><linearGradient id="o122" gradientUnits="userSpaceOnUse" x1="1187" x2="1730"><stop offset="0" stop-color="#009980"/><stop offset=".3352" stop-color="#009976"/><stop offset=".418" stop-color="#449972"/><stop offset=".4991" stop-color="#99986c"/><stop offset=".5249" stop-color="#997d58"/><stop offset=".558" stop-color="#996445"/><stop offset=".5967" stop-color="#994f34"/><stop offset=".6611" stop-color="#993722"/><stop offset=".7459" stop-color="#992312"/><stop offset=".8287" stop-color="#991708"/><stop offset=".9245" stop-color="#990c00"/><stop offset="1" stop-color="#990600"/></linearGradient><linearGradient id="o123" gradientUnits="userSpaceOnUse" x1="1188" x2="1734"><stop offset="0" stop-color="#009983"/><stop offset=".3297" stop-color="#00997a"/><stop offset=".4048" stop-color="#3e9977"/><stop offset=".4451" stop-color="#669974"/><stop offset=".4908" stop-color="#999771"/><stop offset=".5183" stop-color="#997b5a"/><stop offset=".5549" stop-color="#996045"/><stop offset=".5952" stop-color="#994b34"/><stop offset=".6502" stop-color="#993724"/><stop offset=".7179" stop-color="#992617"/><stop offset=".8187" stop-color="#991609"/><stop offset=".9249" stop-color="#990b00"/><stop offset="1" stop-color="#990500"/></linearGradient><linearGradient id="o124" gradientUnits="userSpaceOnUse" x1="1188" x2="1737"><stop offset="0" stop-color="#009985"/><stop offset=".326" stop-color="#00997d"/><stop offset=".3643" stop-color="#1e997c"/><stop offset=".408" stop-color="#46997a"/><stop offset=".4845" stop-color="#999775"/><stop offset=".51" stop-color="#997c5f"/><stop offset=".5556" stop-color="#995b44"/><stop offset=".6011" stop-color="#994532"/><stop offset=".6539" stop-color="#993323"/><stop offset=".7122" stop-color="#992518"/><stop offset=".8106" stop-color="#99150a"/><stop offset=".9271" stop-color="#990900"/><stop offset="1" stop-color="#990400"/></linearGradient><linearGradient id="o125" gradientUnits="userSpaceOnUse" x1="1189" x2="1741"><stop offset="0" stop-color="#009988"/><stop offset=".3207" stop-color="#009981"/><stop offset=".3514" stop-color="#189980"/><stop offset=".4004" stop-color="#45997e"/><stop offset=".4348" stop-color="#69997d"/><stop offset=".4746" stop-color="#99997b"/><stop offset=".5036" stop-color="#997a61"/><stop offset=".5362" stop-color="#99614c"/><stop offset=".5725" stop-color="#994d3b"/><stop offset=".6359" stop-color="#993527"/><stop offset=".7047" stop-color="#992419"/><stop offset=".8007" stop-color="#99150b"/><stop offset=".9293" stop-color="#990800"/><stop offset="1" stop-color="#990300"/></linearGradient><linearGradient id="o126" gradientUnits="userSpaceOnUse" x1="1190" x2="1744"><stop offset="0" stop-color="#00998b"/><stop offset=".3159" stop-color="#009985"/><stop offset=".3484" stop-color="#1a9984"/><stop offset=".3953" stop-color="#469982"/><stop offset=".4386" stop-color="#759981"/><stop offset=".4675" stop-color="#999980"/><stop offset=".4982" stop-color="#997863"/><stop offset=".5343" stop-color="#995d4c"/><stop offset=".5722" stop-color="#99493b"/><stop offset=".6227" stop-color="#99362a"/><stop offset=".6841" stop-color="#99261c"/><stop offset=".7762" stop-color="#99160e"/><stop offset=".9314" stop-color="#990600"/><stop offset="1" stop-color="#990200"/></linearGradient><linearGradient id="o127" gradientUnits="userSpaceOnUse" x1="1190" x2="1748"><stop offset="0" stop-color="#00998d"/><stop offset=".3118" stop-color="#009989"/><stop offset=".3495" stop-color="#1f9988"/><stop offset=".3907" stop-color="#479987"/><stop offset=".4355" stop-color="#799985"/><stop offset=".4606" stop-color="#999985"/><stop offset=".4892" stop-color="#997968"/><stop offset=".5341" stop-color="#99584b"/><stop offset=".5789" stop-color="#994337"/><stop offset=".6254" stop-color="#993229"/><stop offset=".724" stop-color="#991c15"/><stop offset=".8118" stop-color="#99100a"/><stop offset=".9319" stop-color="#990500"/><stop offset="1" stop-color="#990000"/></linearGradient><linearGradient id="o128" gradientUnits="userSpaceOnUse" x1="1191" x2="1751"><stop offset="0" stop-color="#009990"/><stop offset=".3071" stop-color="#00998d"/><stop offset=".3375" stop-color="#19998c"/><stop offset=".3857" stop-color="#48998b"/><stop offset=".4536" stop-color="#99998a"/><stop offset=".4786" stop-color="#997c6f"/><stop offset=".5161" stop-color="#995e54"/><stop offset=".5607" stop-color="#99463e"/><stop offset=".6089" stop-color="#99342d"/><stop offset=".6804" stop-color="#99221d"/><stop offset=".7679" stop-color="#99140f"/><stop offset=".9339" stop-color="#990400"/><stop offset="1" stop-color="#990000"/></linearGradient><linearGradient id="o129" gradientUnits="userSpaceOnUse" x1="1191" x2="1754"><stop offset="0" stop-color="#009993"/><stop offset=".3055" stop-color="#009991"/><stop offset=".3837" stop-color="#4b9990"/><stop offset=".4476" stop-color="#99998f"/><stop offset=".4689" stop-color="#997f77"/><stop offset=".4813" stop-color="#99746b"/><stop offset=".5133" stop-color="#995b55"/><stop offset=".5631" stop-color="#99423c"/><stop offset=".6394" stop-color="#992925"/><stop offset=".7069" stop-color="#991b18"/><stop offset=".8046" stop-color="#990e0b"/><stop offset=".9378" stop-color="#990200"/><stop offset="1" stop-color="#990000"/></linearGradient><linearGradient id="o130" gradientUnits="userSpaceOnUse" x1="1192" x2="1758"><stop offset="0" stop-color="#009996"/><stop offset=".3004" stop-color="#009995"/><stop offset=".3622" stop-color="#3b9995"/><stop offset=".4046" stop-color="#6b9994"/><stop offset=".4399" stop-color="#999894"/><stop offset=".4558" stop-color="#998580"/><stop offset=".4753" stop-color="#99716e"/><stop offset=".5088" stop-color="#995955"/><stop offset=".5565" stop-color="#99403e"/><stop offset=".6237" stop-color="#992a29"/><stop offset=".6979" stop-color="#991b19"/><stop offset=".8039" stop-color="#990d0b"/><stop offset=".9382" stop-color="#990100"/><stop offset="1" stop-color="#990000"/></linearGradient><linearGradient id="o131" gradientUnits="userSpaceOnUse" x1="1193" x2="1761"><stop offset="0" stop-color="#009999"/><stop offset=".2958" stop-color="#009999"/><stop offset=".3715" stop-color="#4b9999"/><stop offset=".4331" stop-color="#999899"/><stop offset=".4665" stop-color="#997273"/><stop offset=".5018" stop-color="#995858"/><stop offset=".5599" stop-color="#993b3c"/><stop offset=".6197" stop-color="#992929"/><stop offset=".6884" stop-color="#991a1b"/><stop offset=".7817" stop-color="#990d0e"/><stop offset=".9331" stop-color="#990001"/><stop offset="1" stop-color="#990000"/></linearGradient><linearGradient id="o132" gradientUnits="userSpaceOnUse" x1="1194" x2="1765"><stop offset="0" stop-color="#009699"/><stop offset=".2907" stop-color="#009499"/><stop offset=".3608" stop-color="#449499"/><stop offset=".3993" stop-color="#719399"/><stop offset=".4291" stop-color="#999399"/><stop offset=".4553" stop-color="#99757a"/><stop offset=".4939" stop-color="#99575b"/><stop offset=".5447" stop-color="#993d41"/><stop offset=".6095" stop-color="#99292b"/><stop offset=".676" stop-color="#991a1d"/><stop offset=".7951" stop-color="#990a0c"/><stop offset=".9159" stop-color="#990002"/><stop offset="1" stop-color="#990000"/></linearGradient><linearGradient id="o133" gradientUnits="userSpaceOnUse" x1="1194" x2="1768"><stop offset="0" stop-color="#009399"/><stop offset=".2875" stop-color="#009099"/><stop offset=".3554" stop-color="#418f99"/><stop offset=".4286" stop-color="#998c97"/><stop offset=".4599" stop-color="#996b74"/><stop offset=".4895" stop-color="#99555d"/><stop offset=".5453" stop-color="#993a40"/><stop offset=".6132" stop-color="#99252a"/><stop offset=".7091" stop-color="#991317"/><stop offset=".8014" stop-color="#99080c"/><stop offset=".9007" stop-color="#990003"/><stop offset="1" stop-color="#990000"/></linearGradient><linearGradient id="o134" gradientUnits="userSpaceOnUse" x1="1195" x2="1772"><stop offset="0" stop-color="#009099"/><stop offset=".2825" stop-color="#008c99"/><stop offset=".3276" stop-color="#298b99"/><stop offset=".3622" stop-color="#4d8a99"/><stop offset=".4246" stop-color="#998798"/><stop offset=".4471" stop-color="#996f7d"/><stop offset=".4835" stop-color="#99545f"/><stop offset=".5269" stop-color="#993d47"/><stop offset=".5997" stop-color="#99262d"/><stop offset=".695" stop-color="#991419"/><stop offset=".8076" stop-color="#99060b"/><stop offset=".8839" stop-color="#990005"/><stop offset="1" stop-color="#990000"/></linearGradient><linearGradient id="o135" gradientUnits="userSpaceOnUse" x1="1196" x2="1775"><stop offset="0" stop-color="#008e99"/><stop offset=".2781" stop-color="#008899"/><stop offset=".3541" stop-color="#488699"/><stop offset=".4214" stop-color="#998398"/><stop offset=".4508" stop-color="#996577"/><stop offset=".4888" stop-color="#994c5a"/><stop offset=".5354" stop-color="#993643"/><stop offset=".6062" stop-color="#99222b"/><stop offset=".7012" stop-color="#991118"/><stop offset=".8048" stop-color="#99050c"/><stop offset=".867" stop-color="#990006"/><stop offset="1" stop-color="#990000"/></linearGradient><linearGradient id="o136" gradientUnits="userSpaceOnUse" x1="1196" x2="1778"><stop offset="0" stop-color="#008b99"/><stop offset=".2749" stop-color="#008499"/><stop offset=".3488" stop-color="#458299"/><stop offset=".4192" stop-color="#997e99"/><stop offset=".4502" stop-color="#996076"/><stop offset=".4811" stop-color="#994c5e"/><stop offset=".5326" stop-color="#993443"/><stop offset=".5979" stop-color="#99212d"/><stop offset=".689" stop-color="#99111a"/><stop offset=".8385" stop-color="#990109"/><stop offset=".9485" stop-color="#990000"/><stop offset="1" stop-color="#990000"/></linearGradient><linearGradient id="o137" gradientUnits="userSpaceOnUse" x1="1197" x2="1782"><stop offset="0" stop-color="#008899"/><stop offset=".2701" stop-color="#008199"/><stop offset=".3145" stop-color="#277f99"/><stop offset=".3521" stop-color="#4d7d99"/><stop offset=".4154" stop-color="#997a99"/><stop offset=".4393" stop-color="#99637d"/><stop offset=".4735" stop-color="#994b61"/><stop offset=".5299" stop-color="#993243"/><stop offset=".6" stop-color="#991e2c"/><stop offset=".694" stop-color="#990e19"/><stop offset=".8222" stop-color="#99010a"/><stop offset=".9504" stop-color="#990000"/><stop offset="1" stop-color="#990000"/></linearGradient><linearGradient id="o138" gradientUnits="userSpaceOnUse" x1="1198" x2="1785"><stop offset="0" stop-color="#008599"/><stop offset=".2658" stop-color="#007d99"/><stop offset=".3032" stop-color="#207b99"/><stop offset=".3458" stop-color="#4a7999"/><stop offset=".3884" stop-color="#7a7799"/><stop offset=".4123" stop-color="#997599"/><stop offset=".4327" stop-color="#996281"/><stop offset=".4549" stop-color="#99516d"/><stop offset=".4889" stop-color="#993f56"/><stop offset=".5434" stop-color="#992a3d"/><stop offset=".6065" stop-color="#991b2a"/><stop offset=".7002" stop-color="#990c18"/><stop offset=".8211" stop-color="#99000a"/><stop offset=".9523" stop-color="#990000"/><stop offset="1" stop-color="#990000"/></linearGradient><linearGradient id="o139" gradientUnits="userSpaceOnUse" x1="1198" x2="1789"><stop offset="0" stop-color="#008299"/><stop offset=".2623" stop-color="#007999"/><stop offset=".3333" stop-color="#407699"/><stop offset=".4112" stop-color="#996f97"/><stop offset=".4467" stop-color="#995272"/><stop offset=".4924" stop-color="#993953"/><stop offset=".5364" stop-color="#99293f"/><stop offset=".5973" stop-color="#991a2c"/><stop offset=".6802" stop-color="#990d1b"/><stop offset=".8054" stop-color="#99000c"/><stop offset=".9357" stop-color="#990001"/><stop offset="1" stop-color="#990000"/></linearGradient><linearGradient id="o140" gradientUnits="userSpaceOnUse" x1="1199" x2="1792"><stop offset="0" stop-color="#008099"/><stop offset=".258" stop-color="#007699"/><stop offset=".3356" stop-color="#467199"/><stop offset=".4081" stop-color="#996b98"/><stop offset=".425" stop-color="#995c84"/><stop offset=".4503" stop-color="#994b6d"/><stop offset=".4941" stop-color="#993551"/><stop offset=".5295" stop-color="#992941"/><stop offset=".5885" stop-color="#991a2e"/><stop offset=".6863" stop-color="#990b1a"/><stop offset=".7909" stop-color="#99000d"/><stop offset=".9545" stop-color="#990000"/><stop offset="1" stop-color="#990000"/></linearGradient><linearGradient id="o141" gradientUnits="userSpaceOnUse" x1="1200" x2="1796"><stop offset="0" stop-color="#007d99"/><stop offset=".2534" stop-color="#007299"/><stop offset=".2953" stop-color="#237099"/><stop offset=".3356" stop-color="#4a6d99"/><stop offset=".4044" stop-color="#996798"/><stop offset=".4446" stop-color="#99496f"/><stop offset=".4933" stop-color="#993150"/><stop offset=".5436" stop-color="#99223b"/><stop offset=".6023" stop-color="#99152a"/><stop offset=".6913" stop-color="#990819"/><stop offset=".7752" stop-color="#99000f"/><stop offset=".9077" stop-color="#990003"/><stop offset="1" stop-color="#990000"/></linearGradient><linearGradient id="o142" gradientUnits="userSpaceOnUse" x1="1201" x2="1799"><stop offset="0" stop-color="#007a99"/><stop offset=".2492" stop-color="#006f99"/><stop offset=".286" stop-color="#1e6d99"/><stop offset=".3361" stop-color="#4e6999"/><stop offset=".4013" stop-color="#996399"/><stop offset=".4314" stop-color="#994c78"/><stop offset=".4799" stop-color="#993356"/><stop offset=".5334" stop-color="#99223e"/><stop offset=".5853" stop-color="#99162e"/><stop offset=".6722" stop-color="#99091c"/><stop offset=".7592" stop-color="#990011"/><stop offset=".8813" stop-color="#990005"/><stop offset="1" stop-color="#990000"/></linearGradient><linearGradient id="o143" gradientUnits="userSpaceOnUse" x1="1201" x2="1803"><stop offset="0" stop-color="#007899"/><stop offset=".2458" stop-color="#006c99"/><stop offset=".3173" stop-color="#3e6799"/><stop offset=".3605" stop-color="#6b6399"/><stop offset=".3987" stop-color="#995f99"/><stop offset=".4352" stop-color="#994573"/><stop offset=".4817" stop-color="#992f54"/><stop offset=".5266" stop-color="#992140"/><stop offset=".588" stop-color="#99142d"/><stop offset=".6595" stop-color="#99091e"/><stop offset=".7442" stop-color="#990012"/><stop offset=".8953" stop-color="#990004"/><stop offset="1" stop-color="#990000"/></linearGradient><linearGradient id="o144" gradientUnits="userSpaceOnUse" x1="1202" x2="1806"><stop offset="0" stop-color="#007599"/><stop offset=".2417" stop-color="#006999"/><stop offset=".2815" stop-color="#206699"/><stop offset=".3262" stop-color="#4a6299"/><stop offset=".3957" stop-color="#995c99"/><stop offset=".4305" stop-color="#994375"/><stop offset=".4818" stop-color="#992c53"/><stop offset=".5248" stop-color="#991f40"/><stop offset=".5828" stop-color="#99132e"/><stop offset=".6589" stop-color="#99081e"/><stop offset=".7301" stop-color="#990014"/><stop offset=".8974" stop-color="#990004"/><stop offset="1" stop-color="#990000"/></linearGradient><linearGradient id="o145" gradientUnits="userSpaceOnUse" x1="1203" x2="1810"><stop offset="0" stop-color="#007399"/><stop offset=".2372" stop-color="#006699"/><stop offset=".2784" stop-color="#216399"/><stop offset=".3213" stop-color="#495f99"/><stop offset=".3937" stop-color="#995797"/><stop offset=".4283" stop-color="#993f74"/><stop offset=".4695" stop-color="#992d58"/><stop offset=".5222" stop-color="#991d40"/><stop offset=".5848" stop-color="#99102d"/><stop offset=".715" stop-color="#990016"/><stop offset=".8567" stop-color="#990007"/><stop offset="1" stop-color="#990000"/></linearGradient><linearGradient id="o146" gradientUnits="userSpaceOnUse" x1="1204" x2="1813"><stop offset="0" stop-color="#007099"/><stop offset=".2332" stop-color="#006399"/><stop offset=".3087" stop-color="#405c99"/><stop offset=".3415" stop-color="#615999"/><stop offset=".3908" stop-color="#995398"/><stop offset=".4236" stop-color="#993d76"/><stop offset=".4713" stop-color="#992956"/><stop offset=".5156" stop-color="#991c42"/><stop offset=".5796" stop-color="#990f2e"/><stop offset=".7011" stop-color="#990018"/><stop offset=".8456" stop-color="#990008"/><stop offset="1" stop-color="#990000"/></linearGradient><linearGradient id="o147" gradientUnits="userSpaceOnUse" x1="1205" x2="1815"><stop offset="0" stop-color="#006e99"/><stop offset=".2295" stop-color="#006099"/><stop offset=".3049" stop-color="#3f5999"/><stop offset=".3557" stop-color="#735499"/><stop offset=".3885" stop-color="#995098"/><stop offset=".4295" stop-color="#993770"/><stop offset=".4721" stop-color="#992655"/><stop offset=".523" stop-color="#99183f"/><stop offset=".5836" stop-color="#990d2d"/><stop offset=".6885" stop-color="#99001a"/><stop offset=".8361" stop-color="#990009"/><stop offset="1" stop-color="#990000"/></linearGradient><linearGradient id="o148" gradientUnits="userSpaceOnUse" x1="1205" x2="1815"><stop offset="0" stop-color="#006b99"/><stop offset=".2279" stop-color="#005d99"/><stop offset=".2705" stop-color="#215999"/><stop offset=".3148" stop-color="#495599"/><stop offset=".3885" stop-color="#994c98"/><stop offset=".418" stop-color="#993a7a"/><stop offset=".4639" stop-color="#99265a"/><stop offset=".5164" stop-color="#991842"/><stop offset=".5705" stop-color="#990e31"/><stop offset=".677" stop-color="#99001c"/><stop offset=".7574" stop-color="#990011"/><stop offset="1" stop-color="#990000"/></linearGradient><linearGradient id="o149" gradientUnits="userSpaceOnUse" x1="1206" x2="1808"><stop offset="0" stop-color="#006999"/><stop offset=".2292" stop-color="#005a99"/><stop offset=".3156" stop-color="#485299"/><stop offset=".392" stop-color="#994999"/><stop offset=".4286" stop-color="#993475"/><stop offset=".4751" stop-color="#992257"/><stop offset=".5233" stop-color="#991642"/><stop offset=".5748" stop-color="#990d32"/><stop offset=".6744" stop-color="#99001e"/><stop offset=".7525" stop-color="#990013"/><stop offset="1" stop-color="#990000"/></linearGradient><linearGradient id="o150" gradientUnits="userSpaceOnUse" x1="1207" x2="1800"><stop offset="0" stop-color="#006699"/><stop offset=".2293" stop-color="#005799"/><stop offset=".317" stop-color="#474f99"/><stop offset=".3524" stop-color="#694b99"/><stop offset=".3963" stop-color="#994599"/><stop offset=".4266" stop-color="#99347b"/><stop offset=".4688" stop-color="#99245e"/><stop offset=".5261" stop-color="#991544"/><stop offset=".5885" stop-color="#990a31"/><stop offset=".6728" stop-color="#990020"/><stop offset=".7757" stop-color="#990012"/><stop offset="1" stop-color="#990001"/></linearGradient><linearGradient id="o151" gradientUnits="userSpaceOnUse" x1="1208" x2="1793"><stop offset="0" stop-color="#006499"/><stop offset=".2291" stop-color="#005599"/><stop offset=".3145" stop-color="#434c99"/><stop offset=".3624" stop-color="#704799"/><stop offset=".4" stop-color="#994299"/><stop offset=".4376" stop-color="#992f76"/><stop offset=".4821" stop-color="#991f5a"/><stop offset=".5333" stop-color="#991344"/><stop offset=".5932" stop-color="#990932"/><stop offset=".6701" stop-color="#990022"/><stop offset=".7538" stop-color="#990016"/><stop offset="1" stop-color="#990002"/></linearGradient><linearGradient id="o152" gradientUnits="userSpaceOnUse" x1="1209" x2="1785"><stop offset="0" stop-color="#006299"/><stop offset=".2292" stop-color="#005299"/><stop offset=".2865" stop-color="#2a4d99"/><stop offset=".3316" stop-color="#504899"/><stop offset=".4062" stop-color="#993e98"/><stop offset=".4462" stop-color="#992b74"/><stop offset=".4931" stop-color="#991c58"/><stop offset=".533" stop-color="#991347"/><stop offset=".599" stop-color="#990833"/><stop offset=".6684" stop-color="#990025"/><stop offset=".7517" stop-color="#990018"/><stop offset="1" stop-color="#990003"/></linearGradient><linearGradient id="o153" gradientUnits="userSpaceOnUse" x1="1209" x2="1778"><stop offset="0" stop-color="#005f99"/><stop offset=".2302" stop-color="#004f99"/><stop offset=".3128" stop-color="#3d4799"/><stop offset=".362" stop-color="#684299"/><stop offset=".4112" stop-color="#993b98"/><stop offset=".4482" stop-color="#992a77"/><stop offset=".4903" stop-color="#991d5d"/><stop offset=".5413" stop-color="#991147"/><stop offset=".6046" stop-color="#990734"/><stop offset=".6661" stop-color="#990027"/><stop offset=".7733" stop-color="#990017"/><stop offset="1" stop-color="#990004"/></linearGradient><linearGradient id="o154" gradientUnits="userSpaceOnUse" x1="1210" x2="1771"><stop offset="0" stop-color="#005d99"/><stop offset=".2299" stop-color="#004d99"/><stop offset=".3173" stop-color="#3f4499"/><stop offset=".3619" stop-color="#653f99"/><stop offset=".4153" stop-color="#993898"/><stop offset=".4563" stop-color="#992675"/><stop offset=".5009" stop-color="#99195b"/><stop offset=".549" stop-color="#990f47"/><stop offset=".6061" stop-color="#990736"/><stop offset=".6613" stop-color="#99002a"/><stop offset=".7701" stop-color="#990019"/><stop offset="1" stop-color="#990006"/></linearGradient><linearGradient id="o155" gradientUnits="userSpaceOnUse" x1="1211" x2="1763"><stop offset="0" stop-color="#005b99"/><stop offset=".2301" stop-color="#004b99"/><stop offset=".3225" stop-color="#414199"/><stop offset=".3768" stop-color="#6f3b99"/><stop offset=".4203" stop-color="#993599"/><stop offset=".4583" stop-color="#992578"/><stop offset=".4982" stop-color="#991a60"/><stop offset=".558" stop-color="#990d47"/><stop offset=".6123" stop-color="#990637"/><stop offset=".6594" stop-color="#99002d"/><stop offset=".7609" stop-color="#99001c"/><stop offset="1" stop-color="#990007"/></linearGradient><linearGradient id="o156" gradientUnits="userSpaceOnUse" x1="1212" x2="1756"><stop offset="0" stop-color="#005999"/><stop offset=".2298" stop-color="#004899"/><stop offset=".3272" stop-color="#433e99"/><stop offset=".386" stop-color="#743799"/><stop offset=".4246" stop-color="#993299"/><stop offset=".4669" stop-color="#992276"/><stop offset=".511" stop-color="#99165d"/><stop offset=".5662" stop-color="#990c47"/><stop offset=".614" stop-color="#990539"/><stop offset=".6562" stop-color="#990030"/><stop offset=".7665" stop-color="#99001d"/><stop offset="1" stop-color="#990008"/></linearGradient><linearGradient id="o157" gradientUnits="userSpaceOnUse" x1="1213" x2="1748"><stop offset="0" stop-color="#005699"/><stop offset=".2299" stop-color="#004699"/><stop offset=".3327" stop-color="#453b99"/><stop offset=".3869" stop-color="#713599"/><stop offset=".4299" stop-color="#992f99"/><stop offset=".4692" stop-color="#992179"/><stop offset=".5047" stop-color="#991764"/><stop offset=".5607" stop-color="#990c4c"/><stop offset=".6206" stop-color="#99043a"/><stop offset=".6542" stop-color="#990033"/><stop offset=".7813" stop-color="#99001d"/><stop offset="1" stop-color="#990009"/></linearGradient><linearGradient id="o158" gradientUnits="userSpaceOnUse" x1="1214" x2="1741"><stop offset="0" stop-color="#005499"/><stop offset=".2296" stop-color="#004399"/><stop offset=".3378" stop-color="#473999"/><stop offset=".4364" stop-color="#992c98"/><stop offset=".4706" stop-color="#99207c"/><stop offset=".5218" stop-color="#99135f"/><stop offset=".575" stop-color="#990a4a"/><stop offset=".6433" stop-color="#990137"/><stop offset=".7875" stop-color="#99001e"/><stop offset="1" stop-color="#99000b"/></linearGradient><linearGradient id="o159" gradientUnits="userSpaceOnUse" x1="1215" x2="1734"><stop offset="0" stop-color="#005299"/><stop offset=".2293" stop-color="#004199"/><stop offset=".3391" stop-color="#463699"/><stop offset=".4412" stop-color="#992998"/><stop offset=".4798" stop-color="#991c7a"/><stop offset=".5337" stop-color="#99105d"/><stop offset=".5838" stop-color="#99084a"/><stop offset=".6493" stop-color="#990038"/><stop offset=".8015" stop-color="#99001e"/><stop offset="1" stop-color="#99000c"/></linearGradient><linearGradient id="o160" gradientUnits="userSpaceOnUse" x1="1216" x2="1726"><stop offset="0" stop-color="#005099"/><stop offset=".2294" stop-color="#003f99"/><stop offset=".2784" stop-color="#1c3a99"/><stop offset=".3451" stop-color="#483399"/><stop offset=".4471" stop-color="#992698"/><stop offset=".4824" stop-color="#991b7d"/><stop offset=".5333" stop-color="#991061"/><stop offset=".5941" stop-color="#99064a"/><stop offset=".6569" stop-color="#990039"/><stop offset=".8098" stop-color="#99001f"/><stop offset="1" stop-color="#99000e"/></linearGradient><linearGradient id="o161" gradientUnits="userSpaceOnUse" x1="1217" x2="1719"><stop offset="0" stop-color="#004e99"/><stop offset=".2291" stop-color="#003d99"/><stop offset=".3406" stop-color="#433299"/><stop offset=".4064" stop-color="#732a99"/><stop offset=".4522" stop-color="#992499"/><stop offset=".5" stop-color="#991676"/><stop offset=".5458" stop-color="#990d5f"/><stop offset=".6235" stop-color="#990244"/><stop offset=".7012" stop-color="#990032"/><stop offset=".7869" stop-color="#990024"/><stop offset="1" stop-color="#99000f"/></linearGradient><linearGradient id="o162" gradientUnits="userSpaceOnUse" x1="1218" x2="1712"><stop offset="0" stop-color="#004b99"/><stop offset=".2287" stop-color="#003b99"/><stop offset=".3057" stop-color="#2b3399"/><stop offset=".3583" stop-color="#4d2e99"/><stop offset=".4575" stop-color="#992199"/><stop offset=".4939" stop-color="#99177e"/><stop offset=".5445" stop-color="#990d63"/><stop offset=".6377" stop-color="#990043"/><stop offset=".7935" stop-color="#990025"/><stop offset="1" stop-color="#990010"/></linearGradient><linearGradient id="o163" gradientUnits="userSpaceOnUse" x1="1218" x2="1704"><stop offset="0" stop-color="#004999"/><stop offset=".2305" stop-color="#003999"/><stop offset=".2942" stop-color="#223399"/><stop offset=".356" stop-color="#482c99"/><stop offset=".4321" stop-color="#7e2399"/><stop offset=".465" stop-color="#991e99"/><stop offset=".5041" stop-color="#99147d"/><stop offset=".5617" stop-color="#990a60"/><stop offset=".6502" stop-color="#990043"/><stop offset=".7963" stop-color="#990027"/><stop offset="1" stop-color="#990012"/></linearGradient><linearGradient id="o164" gradientUnits="userSpaceOnUse" x1="1219" x2="1697"><stop offset="0" stop-color="#004799"/><stop offset=".2301" stop-color="#003799"/><stop offset=".3431" stop-color="#3e2c99"/><stop offset=".3996" stop-color="#632599"/><stop offset=".4728" stop-color="#991b98"/><stop offset=".5146" stop-color="#99117b"/><stop offset=".5607" stop-color="#990964"/><stop offset=".6297" stop-color="#99004c"/><stop offset=".6611" stop-color="#990043"/><stop offset=".818" stop-color="#990026"/><stop offset="1" stop-color="#990014"/></linearGradient><linearGradient id="o165" gradientUnits="userSpaceOnUse" x1="1220" x2="1689"><stop offset="0" stop-color="#004599"/><stop offset=".2303" stop-color="#003599"/><stop offset=".3582" stop-color="#452899"/><stop offset=".4797" stop-color="#991998"/><stop offset=".5267" stop-color="#990e79"/><stop offset=".5778" stop-color="#990661"/><stop offset=".6269" stop-color="#990050"/><stop offset=".6738" stop-color="#990043"/><stop offset=".7996" stop-color="#99002b"/><stop offset="1" stop-color="#990015"/></linearGradient><linearGradient id="o166" gradientUnits="userSpaceOnUse" x1="1221" x2="1682"><stop offset="0" stop-color="#004399"/><stop offset=".2299" stop-color="#003399"/><stop offset=".3579" stop-color="#432699"/><stop offset=".4273" stop-color="#6f1e99"/><stop offset=".4859" stop-color="#991798"/><stop offset=".5271" stop-color="#990e7d"/><stop offset=".577" stop-color="#990665"/><stop offset=".6226" stop-color="#990055"/><stop offset=".6855" stop-color="#990043"/><stop offset=".8221" stop-color="#99002a"/><stop offset="1" stop-color="#990017"/></linearGradient><linearGradient id="o167" gradientUnits="userSpaceOnUse" x1="1222" x2="1675"><stop offset="0" stop-color="#004199"/><stop offset=".2296" stop-color="#003199"/><stop offset=".3664" stop-color="#462499"/><stop offset=".4371" stop-color="#721b99"/><stop offset=".4923" stop-color="#991499"/><stop offset=".5298" stop-color="#990d80"/><stop offset=".5673" stop-color="#99076d"/><stop offset=".6159" stop-color="#99005b"/><stop offset=".6733" stop-color="#990049"/><stop offset=".8234" stop-color="#99002c"/><stop offset="1" stop-color="#990019"/></linearGradient><linearGradient id="o168" gradientUnits="userSpaceOnUse" x1="1223" x2="1667"><stop offset="0" stop-color="#003f99"/><stop offset=".232" stop-color="#002f99"/><stop offset=".3671" stop-color="#442299"/><stop offset=".4324" stop-color="#6b1b99"/><stop offset=".5" stop-color="#991299"/><stop offset=".5428" stop-color="#990a7e"/><stop offset=".5946" stop-color="#990366"/><stop offset=".6869" stop-color="#990049"/><stop offset=".8491" stop-color="#99002b"/><stop offset="1" stop-color="#99001b"/></linearGradient><linearGradient id="o169" gradientUnits="userSpaceOnUse" x1="1224" x2="1660"><stop offset="0" stop-color="#003d99"/><stop offset=".2317" stop-color="#002d99"/><stop offset=".3761" stop-color="#471f99"/><stop offset=".4427" stop-color="#6e1899"/><stop offset=".5069" stop-color="#991099"/><stop offset=".5436" stop-color="#990982"/><stop offset=".5872" stop-color="#99036d"/><stop offset=".6835" stop-color="#99004d"/><stop offset=".8234" stop-color="#990031"/><stop offset="1" stop-color="#99001d"/></linearGradient><linearGradient id="o170" gradientUnits="userSpaceOnUse" x1="1226" x2="1652"><stop offset="0" stop-color="#003b99"/><stop offset=".23" stop-color="#002b99"/><stop offset=".385" stop-color="#4a1d99"/><stop offset=".4531" stop-color="#711599"/><stop offset=".5141" stop-color="#990d99"/><stop offset=".5681" stop-color="#99057a"/><stop offset=".6127" stop-color="#990067"/><stop offset=".7089" stop-color="#99004a"/><stop offset=".8286" stop-color="#990033"/><stop offset="1" stop-color="#99001f"/></linearGradient><linearGradient id="o171" gradientUnits="userSpaceOnUse" x1="1227" x2="1645"><stop offset="0" stop-color="#003999"/><stop offset=".2297" stop-color="#002999"/><stop offset=".3756" stop-color="#431c99"/><stop offset=".4593" stop-color="#711399"/><stop offset=".5239" stop-color="#990b98"/><stop offset=".5574" stop-color="#990584"/><stop offset=".61" stop-color="#99006c"/><stop offset=".7057" stop-color="#99004e"/><stop offset=".8517" stop-color="#990032"/><stop offset="1" stop-color="#990021"/></linearGradient><linearGradient id="o172" gradientUnits="userSpaceOnUse" x1="1228" x2="1638"><stop offset="0" stop-color="#003799"/><stop offset=".2293" stop-color="#002899"/><stop offset=".3756" stop-color="#411a99"/><stop offset=".4585" stop-color="#6d1299"/><stop offset=".5317" stop-color="#990998"/><stop offset=".5927" stop-color="#990078"/><stop offset=".6317" stop-color="#990068"/><stop offset=".7073" stop-color="#990051"/><stop offset=".8366" stop-color="#990037"/><stop offset="1" stop-color="#990023"/></linearGradient><linearGradient id="o173" gradientUnits="userSpaceOnUse" x1="1229" x2="1630"><stop offset="0" stop-color="#003599"/><stop offset=".2294" stop-color="#002699"/><stop offset=".399" stop-color="#4a1799"/><stop offset=".5411" stop-color="#990799"/><stop offset=".601" stop-color="#990079"/><stop offset=".7107" stop-color="#990054"/><stop offset=".8429" stop-color="#990039"/><stop offset="1" stop-color="#990025"/></linearGradient><linearGradient id="o174" gradientUnits="userSpaceOnUse" x1="1230" x2="1623"><stop offset="0" stop-color="#003499"/><stop offset=".229" stop-color="#002499"/><stop offset=".3995" stop-color="#481599"/><stop offset=".4784" stop-color="#700d99"/><stop offset=".5496" stop-color="#990499"/><stop offset=".6005" stop-color="#99007e"/><stop offset=".6565" stop-color="#990068"/><stop offset=".7328" stop-color="#990052"/><stop offset=".8422" stop-color="#99003c"/><stop offset="1" stop-color="#990028"/></linearGradient><linearGradient id="o175" gradientUnits="userSpaceOnUse" x1="1231" x2="1616"><stop offset="0" stop-color="#003299"/><stop offset=".2286" stop-color="#002299"/><stop offset=".4" stop-color="#461499"/><stop offset=".4701" stop-color="#680d99"/><stop offset=".5584" stop-color="#990299"/><stop offset=".6156" stop-color="#99007c"/><stop offset=".7351" stop-color="#990055"/><stop offset=".8727" stop-color="#99003a"/><stop offset="1" stop-color="#99002a"/></linearGradient><linearGradient id="o176" gradientUnits="userSpaceOnUse" x1="1232" x2="1608"><stop offset="0" stop-color="#003099"/><stop offset=".2287" stop-color="#002199"/><stop offset=".4149" stop-color="#4a1199"/><stop offset=".508" stop-color="#770799"/><stop offset=".5691" stop-color="#990099"/><stop offset=".6463" stop-color="#990075"/><stop offset=".7287" stop-color="#99005b"/><stop offset=".8564" stop-color="#990040"/><stop offset="1" stop-color="#99002d"/></linearGradient><linearGradient id="o177" gradientUnits="userSpaceOnUse" x1="1234" x2="1601"><stop offset="0" stop-color="#002e99"/><stop offset=".2262" stop-color="#001f99"/><stop offset=".3978" stop-color="#411199"/><stop offset=".4905" stop-color="#6b0899"/><stop offset=".5804" stop-color="#990098"/><stop offset=".6322" stop-color="#99007f"/><stop offset=".7466" stop-color="#99005a"/><stop offset=".8692" stop-color="#990041"/><stop offset="1" stop-color="#99002f"/></linearGradient><linearGradient id="o178" gradientUnits="userSpaceOnUse" x1="1235" x2="1593"><stop offset="0" stop-color="#002c99"/><stop offset=".2263" stop-color="#001e99"/><stop offset=".3352" stop-color="#261599"/><stop offset=".4302" stop-color="#4c0d99"/><stop offset=".5531" stop-color="#850099"/><stop offset=".5922" stop-color="#990098"/><stop offset=".6564" stop-color="#99007b"/><stop offset=".7486" stop-color="#99005e"/><stop offset=".8911" stop-color="#990041"/><stop offset="1" stop-color="#990032"/></linearGradient><linearGradient id="o179" gradientUnits="userSpaceOnUse" x1="1236" x2="1586"><stop offset="0" stop-color="#002a99"/><stop offset=".2257" stop-color="#001c99"/><stop offset=".4114" stop-color="#420d99"/><stop offset=".5457" stop-color="#7d0099"/><stop offset=".6029" stop-color="#990099"/><stop offset=".6543" stop-color="#990081"/><stop offset=".7686" stop-color="#99005d"/><stop offset=".9114" stop-color="#990041"/><stop offset="1" stop-color="#990035"/></linearGradient><linearGradient id="o180" gradientUnits="userSpaceOnUse" x1="1237" x2="1579"><stop offset="0" stop-color="#002999"/><stop offset=".2251" stop-color="#001b99"/><stop offset=".4298" stop-color="#470b99"/><stop offset=".538" stop-color="#750099"/><stop offset=".614" stop-color="#990099"/><stop offset=".6725" stop-color="#99007f"/><stop offset=".7778" stop-color="#99005f"/><stop offset=".8509" stop-color="#99004f"/><stop offset="1" stop-color="#990038"/></linearGradient><linearGradient id="o181" gradientUnits="userSpaceOnUse" x1="1239" x2="1571"><stop offset="0" stop-color="#002799"/><stop offset=".2229" stop-color="#001999"/><stop offset=".4277" stop-color="#440a99"/><stop offset=".5301" stop-color="#6d0099"/><stop offset=".6265" stop-color="#990099"/><stop offset=".7078" stop-color="#990078"/><stop offset=".7651" stop-color="#990067"/><stop offset=".8675" stop-color="#990050"/><stop offset="1" stop-color="#99003c"/></linearGradient><linearGradient id="o182" gradientUnits="userSpaceOnUse" x1="1240" x2="1564"><stop offset="0" stop-color="#002599"/><stop offset=".2222" stop-color="#001899"/><stop offset=".4475" stop-color="#490799"/><stop offset=".5185" stop-color="#650099"/><stop offset=".6389" stop-color="#990099"/><stop offset=".6944" stop-color="#990082"/><stop offset=".8025" stop-color="#990062"/><stop offset=".8889" stop-color="#990050"/><stop offset="1" stop-color="#99003f"/></linearGradient><linearGradient id="o183" gradientUnits="userSpaceOnUse" x1="1241" x2="1556"><stop offset="0" stop-color="#002399"/><stop offset=".2317" stop-color="#021699"/><stop offset=".4476" stop-color="#460699"/><stop offset=".5111" stop-color="#5e0099"/><stop offset=".654" stop-color="#980099"/><stop offset=".7206" stop-color="#99007f"/><stop offset=".8159" stop-color="#990064"/><stop offset="1" stop-color="#990043"/></linearGradient><linearGradient id="o184" gradientUnits="userSpaceOnUse" x1="1242" x2="1549"><stop offset="0" stop-color="#002199"/><stop offset=".228" stop-color="#011499"/><stop offset=".4723" stop-color="#4c0399"/><stop offset=".5016" stop-color="#570099"/><stop offset=".6678" stop-color="#980099"/><stop offset=".7199" stop-color="#990085"/><stop offset=".8111" stop-color="#99006a"/><stop offset=".8925" stop-color="#990058"/><stop offset="1" stop-color="#990047"/></linearGradient><linearGradient id="o185" gradientUnits="userSpaceOnUse" x1="1244" x2="1542"><stop offset="0" stop-color="#002099"/><stop offset=".2248" stop-color="#011399"/><stop offset=".4698" stop-color="#490299"/><stop offset=".6846" stop-color="#990099"/><stop offset=".7416" stop-color="#990083"/><stop offset=".8221" stop-color="#99006c"/><stop offset="1" stop-color="#99004a"/></linearGradient><linearGradient id="o186" gradientUnits="userSpaceOnUse" x1="1245" x2="1534"><stop offset="0" stop-color="#001e99"/><stop offset=".2249" stop-color="#011299"/><stop offset=".4671" stop-color="#450199"/><stop offset=".5952" stop-color="#700099"/><stop offset=".7024" stop-color="#990099"/><stop offset=".7751" stop-color="#99007f"/><stop offset=".8374" stop-color="#99006e"/><stop offset="1" stop-color="#99004f"/></linearGradient><linearGradient id="o187" gradientUnits="userSpaceOnUse" x1="1246" x2="1527"><stop offset="0" stop-color="#001c99"/><stop offset=".2206" stop-color="#001099"/><stop offset=".4982" stop-color="#4c0099"/><stop offset=".7189" stop-color="#990099"/><stop offset=".847" stop-color="#990071"/><stop offset="1" stop-color="#990053"/></linearGradient><linearGradient id="o188" gradientUnits="userSpaceOnUse" x1="1248" x2="1520"><stop offset="0" stop-color="#001a99"/><stop offset=".2169" stop-color="#000f99"/><stop offset=".4926" stop-color="#480099"/><stop offset=".6176" stop-color="#6f0099"/><stop offset=".7353" stop-color="#990099"/><stop offset=".8529" stop-color="#990075"/><stop offset="1" stop-color="#990058"/></linearGradient><linearGradient id="o189" gradientUnits="userSpaceOnUse" x1="1249" x2="1512"><stop offset="0" stop-color="#001999"/><stop offset=".2167" stop-color="#000e99"/><stop offset=".4411" stop-color="#370099"/><stop offset=".5323" stop-color="#500099"/><stop offset=".7567" stop-color="#990099"/><stop offset=".8593" stop-color="#99007a"/><stop offset="1" stop-color="#99005d"/></linearGradient><linearGradient id="o190" gradientUnits="userSpaceOnUse" x1="1250" x2="1505"><stop offset="0" stop-color="#001799"/><stop offset=".2157" stop-color="#000c99"/><stop offset=".4235" stop-color="#310099"/><stop offset=".5294" stop-color="#4c0099"/><stop offset=".7765" stop-color="#980099"/><stop offset=".9137" stop-color="#990073"/><stop offset="1" stop-color="#990062"/></linearGradient><linearGradient id="o191" gradientUnits="userSpaceOnUse" x1="1252" x2="1497"><stop offset="0" stop-color="#001599"/><stop offset=".2122" stop-color="#000b99"/><stop offset=".4082" stop-color="#2b0099"/><stop offset=".5224" stop-color="#470099"/><stop offset=".8041" stop-color="#990099"/><stop offset=".8653" stop-color="#990086"/><stop offset="1" stop-color="#990069"/></linearGradient><linearGradient id="o192" gradientUnits="userSpaceOnUse" x1="1253" x2="1490"><stop offset="0" stop-color="#001499"/><stop offset=".211" stop-color="#000a99"/><stop offset=".3924" stop-color="#260099"/><stop offset=".5738" stop-color="#510099"/><stop offset=".827" stop-color="#990099"/><stop offset=".9072" stop-color="#990082"/><stop offset="1" stop-color="#99006e"/></linearGradient><linearGradient id="o193" gradientUnits="userSpaceOnUse" x1="1255" x2="1483"><stop offset="0" stop-color="#001299"/><stop offset=".2061" stop-color="#000999"/><stop offset=".3728" stop-color="#210099"/><stop offset=".5702" stop-color="#4d0099"/><stop offset=".8509" stop-color="#990099"/><stop offset="1" stop-color="#990075"/></linearGradient><linearGradient id="o194" gradientUnits="userSpaceOnUse" x1="1256" x2="1475"><stop offset="0" stop-color="#001099"/><stop offset=".2055" stop-color="#000799"/><stop offset=".3516" stop-color="#1b0099"/><stop offset=".5434" stop-color="#430099"/><stop offset=".7123" stop-color="#6b0099"/><stop offset=".8813" stop-color="#990099"/><stop offset="1" stop-color="#99007c"/></linearGradient><linearGradient id="o195" gradientUnits="userSpaceOnUse" x1="1258" x2="1468"><stop offset="0" stop-color="#000f99"/><stop offset=".2" stop-color="#000699"/><stop offset=".3286" stop-color="#170099"/><stop offset=".6333" stop-color="#540099"/><stop offset=".9095" stop-color="#990099"/><stop offset="1" stop-color="#990083"/></linearGradient><linearGradient id="o196" gradientUnits="userSpaceOnUse" x1="1259" x2="1461"><stop offset="0" stop-color="#000d99"/><stop offset=".198" stop-color="#000599"/><stop offset=".2178" stop-color="#030499"/><stop offset=".3069" stop-color="#120099"/><stop offset=".6238" stop-color="#4e0099"/><stop offset=".9406" stop-color="#980099"/><stop offset="1" stop-color="#99008b"/></linearGradient><linearGradient id="o197" gradientUnits="userSpaceOnUse" x1="1261" x2="1453"><stop offset="0" stop-color="#000b99"/><stop offset=".2083" stop-color="#020399"/><stop offset=".4792" stop-color="#2f0099"/><stop offset=".7135" stop-color="#5c0099"/><stop offset=".9844" stop-color="#990099"/><stop offset="1" stop-color="#990095"/></linearGradient><linearGradient id="o198" gradientUnits="userSpaceOnUse" x1="1263" x2="1446"><stop offset="0" stop-color="#000a99"/><stop offset=".1858" stop-color="#000399"/><stop offset=".2568" stop-color="#0a0099"/><stop offset=".7158" stop-color="#580099"/><stop offset="1" stop-color="#940099"/></linearGradient><linearGradient id="o199" gradientUnits="userSpaceOnUse" x1="1264" x2="1438"><stop offset="0" stop-color="#000899"/><stop offset=".2011" stop-color="#020199"/><stop offset=".6207" stop-color="#420099"/><stop offset="1" stop-color="#8a0099"/></linearGradient><linearGradient id="o200" gradientUnits="userSpaceOnUse" x1="1266" x2="1431"><stop offset="0" stop-color="#000699"/><stop offset=".1758" stop-color="#000199"/><stop offset=".2182" stop-color="#050099"/><stop offset=".5697" stop-color="#370099"/><stop offset="1" stop-color="#820099"/></linearGradient><linearGradient id="o201" gradientUnits="userSpaceOnUse" x1="1268" x2="1424"><stop offset="0" stop-color="#000599"/><stop offset=".1795" stop-color="#010099"/><stop offset=".6346" stop-color="#3e0099"/><stop offset="1" stop-color="#7a0099"/></linearGradient><linearGradient id="o202" gradientUnits="userSpaceOnUse" x1="1270" x2="1416"><stop offset="0" stop-color="#000399"/><stop offset=".1712" stop-color="#010099"/><stop offset=".6027" stop-color="#360099"/><stop offset="1" stop-color="#710099"/></linearGradient><linearGradient id="o203" gradientUnits="userSpaceOnUse" x1="1272" x2="1409"><stop offset="0" stop-color="#000199"/><stop offset=".146" stop-color="#000099"/><stop offset=".1898" stop-color="#040099"/><stop offset=".5839" stop-color="#310099"/><stop offset="1" stop-color="#690099"/></linearGradient><linearGradient id="o204" gradientUnits="userSpaceOnUse" x1="1274" x2="1401"><stop offset="0" stop-color="#000099"/><stop offset=".1339" stop-color="#000099"/><stop offset=".2126" stop-color="#070099"/><stop offset=".6535" stop-color="#360099"/><stop offset="1" stop-color="#610099"/></linearGradient><linearGradient id="o205" gradientUnits="userSpaceOnUse" x1="1276" x2="1394"><stop offset="0" stop-color="#000099"/><stop offset=".1186" stop-color="#000099"/><stop offset=".2373" stop-color="#0a0099"/><stop offset=".6441" stop-color="#320099"/><stop offset="1" stop-color="#5a0099"/></linearGradient><linearGradient id="o206" gradientUnits="userSpaceOnUse" x1="1279" x2="1387"><stop offset="0" stop-color="#000099"/><stop offset=".1019" stop-color="#000099"/><stop offset=".2593" stop-color="#0d0099"/><stop offset="1" stop-color="#540099"/></linearGradient><linearGradient id="o207" gradientUnits="userSpaceOnUse" x1="1281" x2="1379"><stop offset="0" stop-color="#000099"/><stop offset=".0816" stop-color="#000099"/><stop offset=".2041" stop-color="#090099"/><stop offset="1" stop-color="#4c0099"/></linearGradient><linearGradient id="o208" gradientUnits="userSpaceOnUse" x1="1284" x2="1372"><stop offset="0" stop-color="#000099"/><stop offset=".0455" stop-color="#000099"/><stop offset=".3295" stop-color="#130099"/><stop offset="1" stop-color="#460099"/></linearGradient><linearGradient id="o209" gradientUnits="userSpaceOnUse" x1="1287" x2="1365"><stop offset="0" stop-color="#000099"/><stop offset="1" stop-color="#400099"/></linearGradient><linearGradient id="o210" gradientUnits="userSpaceOnUse" x1="1291" x2="1357"><stop offset="0" stop-color="#040099"/><stop offset="1" stop-color="#390099"/></linearGradient><linearGradient id="o211" gradientUnits="userSpaceOnUse" x1="1294" x2="1350"><stop offset="0" stop-color="#070099"/><stop offset="1" stop-color="#330099"/></linearGradient><linearGradient id="o212" gradientUnits="userSpaceOnUse" x1="1298" x2="1342"><stop offset="0" stop-color="#0a0099"/><stop offset="1" stop-color="#2d0099"/></linearGradient><linearGradient id="o213" gradientUnits="userSpaceOnUse" x1="1302" x2="1335"><stop offset="0" stop-color="#0e0099"/><stop offset="1" stop-color="#280099"/></linearGradient><linearGradient id="o214" gradientUnits="userSpaceOnUse" x1="1306" x2="1328"><stop offset="0" stop-color="#120099"/><stop offset="1" stop-color="#230099"/></linearGradient><linearGradient id="o215" gradientUnits="userSpaceOnUse" x1="1310" x2="1320"><stop offset="0" stop-color="#150099"/><stop offset="1" stop-color="#1d0099"/></linearGradient><linearGradient id="i0" gradientUnits="userSpaceOnUse" x1="1425" x2="1432"><stop offset="0" stop-color="#00ff01"/><stop offset="1" stop-color="#05ff00"/></linearGradient><linearGradient id="i1" gradientUnits="userSpaceOnUse" x1="1424" x2="1436"><stop offset="0" stop-color="#00ff03"/><stop offset=".25" stop-color="#00ff02"/><stop offset="1" stop-color="#0cff00"/></linearGradient><linearGradient id="i2" gradientUnits="userSpaceOnUse" x1="1423" x2="1441"><stop offset="0" stop-color="#00ff05"/><stop offset=".2222" stop-color="#01ff03"/><stop offset="1" stop-color="#14ff00"/></linearGradient><linearGradient id="i3" gradientUnits="userSpaceOnUse" x1="1422" x2="1445"><stop offset="0" stop-color="#00ff06"/><stop offset=".1739" stop-color="#01ff05"/><stop offset="1" stop-color="#1bff00"/></linearGradient><linearGradient id="i4" gradientUnits="userSpaceOnUse" x1="1421" x2="1449"><stop offset="0" stop-color="#00ff08"/><stop offset=".1429" stop-color="#01ff07"/><stop offset="1" stop-color="#22ff00"/></linearGradient><linearGradient id="i5" gradientUnits="userSpaceOnUse" x1="1420" x2="1454"><stop offset="0" stop-color="#00ff0a"/><stop offset=".1176" stop-color="#01ff09"/><stop offset="1" stop-color="#2bff00"/></linearGradient><linearGradient id="i6" gradientUnits="userSpaceOnUse" x1="1419" x2="1458"><stop offset="0" stop-color="#00ff0c"/><stop offset=".1026" stop-color="#01ff0b"/><stop offset="1" stop-color="#33ff00"/></linearGradient><linearGradient id="i7" gradientUnits="userSpaceOnUse" x1="1418" x2="1462"><stop offset="0" stop-color="#00ff0e"/><stop offset=".0682" stop-color="#00ff0d"/><stop offset=".2273" stop-color="#09ff0b"/><stop offset="1" stop-color="#3bff00"/></linearGradient><linearGradient id="i8" gradientUnits="userSpaceOnUse" x1="1417" x2="1467"><stop offset="0" stop-color="#00ff10"/><stop offset=".06" stop-color="#00ff0f"/><stop offset=".2" stop-color="#09ff0d"/><stop offset="1" stop-color="#44ff00"/></linearGradient><linearGradient id="i9" gradientUnits="userSpaceOnUse" x1="1416" x2="1471"><stop offset="0" stop-color="#00ff12"/><stop offset=".0909" stop-color="#02ff11"/><stop offset="1" stop-color="#4dff00"/></linearGradient><linearGradient id="i10" gradientUnits="userSpaceOnUse" x1="1415" x2="1475"><stop offset="0" stop-color="#00ff14"/><stop offset=".05" stop-color="#00ff13"/><stop offset=".1667" stop-color="#09ff11"/><stop offset="1" stop-color="#55ff00"/></linearGradient><linearGradient id="i11" gradientUnits="userSpaceOnUse" x1="1414" x2="1480"><stop offset="0" stop-color="#00ff17"/><stop offset=".0758" stop-color="#02ff15"/><stop offset=".2576" stop-color="#13ff11"/><stop offset="1" stop-color="#60ff00"/></linearGradient><linearGradient id="i12" gradientUnits="userSpaceOnUse" x1="1413" x2="1484"><stop offset="0" stop-color="#00ff19"/><stop offset=".0704" stop-color="#02ff17"/><stop offset=".2676" stop-color="#16ff12"/><stop offset="1" stop-color="#69ff00"/></linearGradient><linearGradient id="i13" gradientUnits="userSpaceOnUse" x1="1412" x2="1488"><stop offset="0" stop-color="#00ff1b"/><stop offset=".0658" stop-color="#02ff19"/><stop offset=".4737" stop-color="#30ff0e"/><stop offset="1" stop-color="#73ff00"/></linearGradient><linearGradient id="i14" gradientUnits="userSpaceOnUse" x1="1411" x2="1492"><stop offset="0" stop-color="#00ff1d"/><stop offset=".0617" stop-color="#02ff1b"/><stop offset=".3951" stop-color="#2aff12"/><stop offset="1" stop-color="#7dff00"/></linearGradient><linearGradient id="i15" gradientUnits="userSpaceOnUse" x1="1410" x2="1497"><stop offset="0" stop-color="#00ff1f"/><stop offset=".0575" stop-color="#02ff1e"/><stop offset=".4023" stop-color="#2fff13"/><stop offset="1" stop-color="#89ff00"/></linearGradient><linearGradient id="i16" gradientUnits="userSpaceOnUse" x1="1410" x2="1501"><stop offset="0" stop-color="#00ff21"/><stop offset=".0989" stop-color="#09ff1e"/><stop offset=".4396" stop-color="#39ff13"/><stop offset="1" stop-color="#94ff00"/></linearGradient><linearGradient id="i17" gradientUnits="userSpaceOnUse" x1="1409" x2="1505"><stop offset="0" stop-color="#00ff24"/><stop offset=".0938" stop-color="#09ff21"/><stop offset=".375" stop-color="#33ff17"/><stop offset=".6875" stop-color="#66ff0b"/><stop offset="1" stop-color="#9fff00"/></linearGradient><linearGradient id="i18" gradientUnits="userSpaceOnUse" x1="1408" x2="1510"><stop offset="0" stop-color="#00ff26"/><stop offset=".0686" stop-color="#06ff24"/><stop offset=".4804" stop-color="#49ff14"/><stop offset=".7745" stop-color="#7fff08"/><stop offset="1" stop-color="#adff00"/></linearGradient><linearGradient id="i19" gradientUnits="userSpaceOnUse" x1="1407" x2="1514"><stop offset="0" stop-color="#00ff28"/><stop offset=".0841" stop-color="#09ff25"/><stop offset=".4766" stop-color="#4dff16"/><stop offset=".7383" stop-color="#80ff0b"/><stop offset="1" stop-color="#b9ff00"/></linearGradient><linearGradient id="i20" gradientUnits="userSpaceOnUse" x1="1406" x2="1518"><stop offset="0" stop-color="#00ff2b"/><stop offset=".0268" stop-color="#00ff2a"/><stop offset=".0804" stop-color="#09ff28"/><stop offset=".4821" stop-color="#53ff17"/><stop offset=".7321" stop-color="#87ff0c"/><stop offset="1" stop-color="#c5ff00"/></linearGradient><linearGradient id="i21" gradientUnits="userSpaceOnUse" x1="1405" x2="1523"><stop offset="0" stop-color="#00ff2d"/><stop offset=".0254" stop-color="#00ff2c"/><stop offset=".0763" stop-color="#09ff2a"/><stop offset=".4831" stop-color="#59ff19"/><stop offset=".8475" stop-color="#adff06"/><stop offset="1" stop-color="#d5ff00"/></linearGradient><linearGradient id="i22" gradientUnits="userSpaceOnUse" x1="1404" x2="1527"><stop offset="0" stop-color="#00ff30"/><stop offset=".0244" stop-color="#00ff2f"/><stop offset=".1301" stop-color="#14ff2b"/><stop offset=".5041" stop-color="#63ff19"/><stop offset=".7724" stop-color="#a4ff0b"/><stop offset="1" stop-color="#e2ff00"/></linearGradient><linearGradient id="i23" gradientUnits="userSpaceOnUse" x1="1403" x2="1531"><stop offset="0" stop-color="#00ff33"/><stop offset=".0234" stop-color="#00ff32"/><stop offset=".1484" stop-color="#19ff2c"/><stop offset=".4766" stop-color="#62ff1c"/><stop offset=".7656" stop-color="#acff0c"/><stop offset="1" stop-color="#f1ff00"/></linearGradient><linearGradient id="i24" gradientUnits="userSpaceOnUse" x1="1402" x2="1536"><stop offset="0" stop-color="#00ff35"/><stop offset=".0224" stop-color="#00ff34"/><stop offset=".1045" stop-color="#11ff30"/><stop offset=".4403" stop-color="#5fff20"/><stop offset=".7015" stop-color="#a5ff11"/><stop offset=".9851" stop-color="#fdff00"/><stop offset="1" stop-color="#fffc00"/></linearGradient><linearGradient id="i25" gradientUnits="userSpaceOnUse" x1="1401" x2="1540"><stop offset="0" stop-color="#00ff38"/><stop offset=".0216" stop-color="#00ff37"/><stop offset=".1223" stop-color="#16ff32"/><stop offset=".4173" stop-color="#5eff23"/><stop offset=".6906" stop-color="#abff13"/><stop offset=".9424" stop-color="#fdff02"/><stop offset="1" stop-color="#ffee00"/></linearGradient><linearGradient id="i26" gradientUnits="userSpaceOnUse" x1="1400" x2="1544"><stop offset="0" stop-color="#00ff3b"/><stop offset=".0208" stop-color="#00ff3a"/><stop offset=".0833" stop-color="#0eff37"/><stop offset=".3889" stop-color="#5bff27"/><stop offset=".6389" stop-color="#a4ff18"/><stop offset=".9028" stop-color="#fdff05"/><stop offset="1" stop-color="#ffe000"/></linearGradient><linearGradient id="i27" gradientUnits="userSpaceOnUse" x1="1399" x2="1549"><stop offset="0" stop-color="#00ff3d"/><stop offset=".02" stop-color="#00ff3c"/><stop offset=".08" stop-color="#0eff39"/><stop offset=".36" stop-color="#58ff2a"/><stop offset=".6267" stop-color="#aaff1a"/><stop offset=".86" stop-color="#feff09"/><stop offset=".96" stop-color="#ffde00"/><stop offset="1" stop-color="#ffd200"/></linearGradient><linearGradient id="i28" gradientUnits="userSpaceOnUse" x1="1398" x2="1553"><stop offset="0" stop-color="#00ff40"/><stop offset=".0258" stop-color="#01ff3f"/><stop offset=".0774" stop-color="#0eff3c"/><stop offset=".329" stop-color="#53ff2e"/><stop offset=".5871" stop-color="#a5ff1e"/><stop offset=".8258" stop-color="#feff0c"/><stop offset="1" stop-color="#ffc600"/></linearGradient><linearGradient id="i29" gradientUnits="userSpaceOnUse" x1="1397" x2="1557"><stop offset="0" stop-color="#00ff43"/><stop offset=".025" stop-color="#01ff42"/><stop offset=".3" stop-color="#4eff32"/><stop offset=".55" stop-color="#a0ff22"/><stop offset=".7937" stop-color="#feff10"/><stop offset=".8688" stop-color="#ffe308"/><stop offset="1" stop-color="#ffbc00"/></linearGradient><linearGradient id="i30" gradientUnits="userSpaceOnUse" x1="1396" x2="1562"><stop offset="0" stop-color="#00ff46"/><stop offset=".0241" stop-color="#01ff45"/><stop offset=".1627" stop-color="#28ff3d"/><stop offset=".4398" stop-color="#81ff2c"/><stop offset=".6024" stop-color="#bdff20"/><stop offset=".759" stop-color="#feff13"/><stop offset=".8855" stop-color="#ffd007"/><stop offset="1" stop-color="#ffb000"/></linearGradient><linearGradient id="i31" gradientUnits="userSpaceOnUse" x1="1395" x2="1566"><stop offset="0" stop-color="#00ff49"/><stop offset=".0234" stop-color="#01ff48"/><stop offset=".1404" stop-color="#23ff41"/><stop offset=".4152" stop-color="#7eff30"/><stop offset=".5848" stop-color="#bfff23"/><stop offset=".731" stop-color="#feff17"/><stop offset=".8772" stop-color="#ffc808"/><stop offset="1" stop-color="#ffa700"/></linearGradient><linearGradient id="i32" gradientUnits="userSpaceOnUse" x1="1394" x2="1570"><stop offset="0" stop-color="#00ff4c"/><stop offset=".0227" stop-color="#01ff4b"/><stop offset=".0739" stop-color="#10ff48"/><stop offset=".3239" stop-color="#62ff38"/><stop offset=".483" stop-color="#9eff2d"/><stop offset=".7045" stop-color="#feff1b"/><stop offset=".8239" stop-color="#ffcf0d"/><stop offset=".9148" stop-color="#ffb305"/><stop offset="1" stop-color="#ff9e00"/></linearGradient><linearGradient id="i33" gradientUnits="userSpaceOnUse" x1="1393" x2="1575"><stop offset="0" stop-color="#00ff4f"/><stop offset=".022" stop-color="#01ff4e"/><stop offset=".0714" stop-color="#10ff4b"/><stop offset=".3187" stop-color="#65ff3b"/><stop offset=".522" stop-color="#b7ff2c"/><stop offset=".6758" stop-color="#ffff1f"/><stop offset=".7527" stop-color="#ffdd14"/><stop offset=".8187" stop-color="#ffc50d"/><stop offset="1" stop-color="#ff9400"/></linearGradient><linearGradient id="i34" gradientUnits="userSpaceOnUse" x1="1392" x2="1579"><stop offset="0" stop-color="#00ff52"/><stop offset=".0214" stop-color="#01ff51"/><stop offset=".0963" stop-color="#19ff4c"/><stop offset=".3102" stop-color="#66ff3e"/><stop offset=".4813" stop-color="#adff31"/><stop offset=".6524" stop-color="#ffff23"/><stop offset=".7166" stop-color="#ffe119"/><stop offset=".8075" stop-color="#ffbf0e"/><stop offset=".8877" stop-color="#ffa707"/><stop offset="1" stop-color="#ff8c00"/></linearGradient><linearGradient id="i35" gradientUnits="userSpaceOnUse" x1="1391" x2="1583"><stop offset="0" stop-color="#00ff55"/><stop offset=".0208" stop-color="#01ff54"/><stop offset=".0729" stop-color="#12ff51"/><stop offset=".3021" stop-color="#67ff42"/><stop offset=".4948" stop-color="#bbff33"/><stop offset=".6302" stop-color="#ffff27"/><stop offset=".7031" stop-color="#ffdc1b"/><stop offset=".7917" stop-color="#ffbb10"/><stop offset=".875" stop-color="#ffa208"/><stop offset="1" stop-color="#ff8500"/></linearGradient><linearGradient id="i36" gradientUnits="userSpaceOnUse" x1="1390" x2="1587"><stop offset="0" stop-color="#00ff58"/><stop offset=".0203" stop-color="#01ff57"/><stop offset=".0508" stop-color="#0bff55"/><stop offset=".2944" stop-color="#68ff45"/><stop offset=".4822" stop-color="#bdff36"/><stop offset=".6091" stop-color="#ffff2b"/><stop offset=".6751" stop-color="#ffde20"/><stop offset=".7614" stop-color="#ffbc14"/><stop offset=".8985" stop-color="#ff9406"/><stop offset="1" stop-color="#ff7e00"/></linearGradient><linearGradient id="i37" gradientUnits="userSpaceOnUse" x1="1390" x2="1592"><stop offset="0" stop-color="#00ff5b"/><stop offset=".0248" stop-color="#04ff5a"/><stop offset=".099" stop-color="#1fff55"/><stop offset=".2822" stop-color="#69ff49"/><stop offset=".4208" stop-color="#a9ff3e"/><stop offset=".5842" stop-color="#ffff2f"/><stop offset=".6584" stop-color="#ffd922"/><stop offset=".7723" stop-color="#ffae12"/><stop offset=".8713" stop-color="#ff9208"/><stop offset="1" stop-color="#ff7600"/></linearGradient><linearGradient id="i38" gradientUnits="userSpaceOnUse" x1="1389" x2="1596"><stop offset="0" stop-color="#00ff5f"/><stop offset=".0242" stop-color="#04ff5d"/><stop offset=".1063" stop-color="#23ff58"/><stop offset=".2754" stop-color="#6aff4c"/><stop offset=".3913" stop-color="#a1ff43"/><stop offset=".5652" stop-color="#fffe33"/><stop offset=".6522" stop-color="#ffd223"/><stop offset=".744" stop-color="#ffaf16"/><stop offset=".8744" stop-color="#ff8a08"/><stop offset="1" stop-color="#ff7000"/></linearGradient><linearGradient id="i39" gradientUnits="userSpaceOnUse" x1="1388" x2="1600"><stop offset="0" stop-color="#00ff62"/><stop offset=".0189" stop-color="#02ff61"/><stop offset=".0755" stop-color="#18ff5e"/><stop offset=".2642" stop-color="#69ff50"/><stop offset=".3726" stop-color="#9eff48"/><stop offset=".5472" stop-color="#fffe37"/><stop offset=".6179" stop-color="#ffd829"/><stop offset=".7311" stop-color="#ffab18"/><stop offset=".8538" stop-color="#ff880a"/><stop offset="1" stop-color="#ff6a00"/></linearGradient><linearGradient id="i40" gradientUnits="userSpaceOnUse" x1="1387" x2="1605"><stop offset="0" stop-color="#00ff66"/><stop offset=".0183" stop-color="#02ff65"/><stop offset=".078" stop-color="#1aff61"/><stop offset=".2569" stop-color="#6aff54"/><stop offset=".4174" stop-color="#beff46"/><stop offset=".5275" stop-color="#fffe3c"/><stop offset=".6055" stop-color="#ffd32b"/><stop offset=".7018" stop-color="#ffac1b"/><stop offset=".8303" stop-color="#ff860c"/><stop offset="1" stop-color="#ff6300"/></linearGradient><linearGradient id="i41" gradientUnits="userSpaceOnUse" x1="1386" x2="1609"><stop offset="0" stop-color="#00ff69"/><stop offset=".0179" stop-color="#02ff68"/><stop offset=".0448" stop-color="#0dff67"/><stop offset=".2287" stop-color="#60ff5a"/><stop offset=".3767" stop-color="#aeff4d"/><stop offset=".5112" stop-color="#fffe40"/><stop offset=".6054" stop-color="#ffca2b"/><stop offset=".7265" stop-color="#ff9c18"/><stop offset=".8117" stop-color="#ff840e"/><stop offset="1" stop-color="#ff5e00"/></linearGradient><linearGradient id="i42" gradientUnits="userSpaceOnUse" x1="1385" x2="1613"><stop offset="0" stop-color="#00ff6d"/><stop offset=".0132" stop-color="#00ff6c"/><stop offset=".0439" stop-color="#0dff6a"/><stop offset=".2412" stop-color="#6aff5c"/><stop offset=".3684" stop-color="#b0ff51"/><stop offset=".4912" stop-color="#feff45"/><stop offset=".5702" stop-color="#ffd232"/><stop offset=".6886" stop-color="#ffa11e"/><stop offset=".7939" stop-color="#ff8210"/><stop offset=".886" stop-color="#ff6d07"/><stop offset="1" stop-color="#ff5900"/></linearGradient><linearGradient id="i43" gradientUnits="userSpaceOnUse" x1="1384" x2="1618"><stop offset="0" stop-color="#00ff71"/><stop offset=".0128" stop-color="#00ff70"/><stop offset=".0427" stop-color="#0dff6e"/><stop offset=".235" stop-color="#6bff60"/><stop offset=".359" stop-color="#b2ff55"/><stop offset=".4744" stop-color="#feff4a"/><stop offset=".5598" stop-color="#ffcd34"/><stop offset=".6197" stop-color="#ffb228"/><stop offset=".688" stop-color="#ff991d"/><stop offset=".8547" stop-color="#ff6d0a"/><stop offset="1" stop-color="#ff5300"/></linearGradient><linearGradient id="i44" gradientUnits="userSpaceOnUse" x1="1383" x2="1622"><stop offset="0" stop-color="#00ff75"/><stop offset=".0126" stop-color="#00ff74"/><stop offset=".046" stop-color="#0fff72"/><stop offset=".2134" stop-color="#63ff65"/><stop offset=".3305" stop-color="#a7ff5c"/><stop offset=".4603" stop-color="#feff4f"/><stop offset=".5188" stop-color="#ffda3e"/><stop offset=".5649" stop-color="#ffc233"/><stop offset=".682" stop-color="#ff941e"/><stop offset=".8285" stop-color="#ff6d0d"/><stop offset="1" stop-color="#ff4e00"/></linearGradient><linearGradient id="i45" gradientUnits="userSpaceOnUse" x1="1382" x2="1626"><stop offset="0" stop-color="#00ff78"/><stop offset=".0123" stop-color="#00ff78"/><stop offset=".0492" stop-color="#11ff75"/><stop offset=".209" stop-color="#64ff6a"/><stop offset=".3238" stop-color="#a9ff60"/><stop offset=".4467" stop-color="#feff54"/><stop offset=".5246" stop-color="#ffce3d"/><stop offset=".5943" stop-color="#ffad2e"/><stop offset=".6557" stop-color="#ff9623"/><stop offset=".8033" stop-color="#ff6d0f"/><stop offset="1" stop-color="#ff4a00"/></linearGradient><linearGradient id="i46" gradientUnits="userSpaceOnUse" x1="1381" x2="1631"><stop offset="0" stop-color="#00ff7c"/><stop offset=".012" stop-color="#00ff7c"/><stop offset=".116" stop-color="#34ff75"/><stop offset=".224" stop-color="#71ff6c"/><stop offset=".316" stop-color="#abff64"/><stop offset=".432" stop-color="#feff59"/><stop offset=".516" stop-color="#ffc93f"/><stop offset=".572" stop-color="#ffae32"/><stop offset=".66" stop-color="#ff8d22"/><stop offset=".812" stop-color="#ff650e"/><stop offset="1" stop-color="#ff4500"/></linearGradient><linearGradient id="i47" gradientUnits="userSpaceOnUse" x1="1380" x2="1635"><stop offset="0" stop-color="#00ff80"/><stop offset=".0118" stop-color="#00ff80"/><stop offset=".098" stop-color="#2cff7a"/><stop offset=".2078" stop-color="#6bff72"/><stop offset=".3255" stop-color="#b8ff67"/><stop offset=".4196" stop-color="#ffff5e"/><stop offset=".4784" stop-color="#ffd64a"/><stop offset=".5255" stop-color="#ffbc3d"/><stop offset=".5882" stop-color="#ffa02f"/><stop offset=".6588" stop-color="#ff8722"/><stop offset=".8118" stop-color="#ff600e"/><stop offset="1" stop-color="#ff4100"/></linearGradient><linearGradient id="i48" gradientUnits="userSpaceOnUse" x1="1379" x2="1639"><stop offset="0" stop-color="#00ff85"/><stop offset=".0115" stop-color="#00ff84"/><stop offset=".0846" stop-color="#26ff7f"/><stop offset=".2115" stop-color="#71ff75"/><stop offset=".3077" stop-color="#b2ff6d"/><stop offset=".4077" stop-color="#ffff63"/><stop offset=".4846" stop-color="#ffca48"/><stop offset=".55" stop-color="#ffa937"/><stop offset=".6308" stop-color="#ff8a27"/><stop offset=".7" stop-color="#ff751c"/><stop offset=".7923" stop-color="#ff5f11"/><stop offset="1" stop-color="#ff3d00"/></linearGradient><linearGradient id="i49" gradientUnits="userSpaceOnUse" x1="1378" x2="1644"><stop offset="0" stop-color="#00ff89"/><stop offset=".0113" stop-color="#00ff88"/><stop offset=".0714" stop-color="#20ff84"/><stop offset=".188" stop-color="#66ff7b"/><stop offset=".2857" stop-color="#a9ff73"/><stop offset=".3947" stop-color="#ffff69"/><stop offset=".4511" stop-color="#ffd552"/><stop offset=".515" stop-color="#ffb13f"/><stop offset=".6278" stop-color="#ff8427"/><stop offset=".7707" stop-color="#ff5e13"/><stop offset=".8647" stop-color="#ff4c09"/><stop offset="1" stop-color="#ff3900"/></linearGradient><linearGradient id="i50" gradientUnits="userSpaceOnUse" x1="1377" x2="1648"><stop offset="0" stop-color="#00ff8d"/><stop offset=".0111" stop-color="#00ff8c"/><stop offset=".0627" stop-color="#1cff89"/><stop offset=".1734" stop-color="#60ff81"/><stop offset=".2841" stop-color="#aeff78"/><stop offset=".3838" stop-color="#ffff6e"/><stop offset=".4207" stop-color="#ffe15e"/><stop offset=".4723" stop-color="#ffc04c"/><stop offset=".5387" stop-color="#ff9f39"/><stop offset=".6125" stop-color="#ff832a"/><stop offset=".6827" stop-color="#ff6e1f"/><stop offset=".797" stop-color="#ff5410"/><stop offset="1" stop-color="#ff3500"/></linearGradient><linearGradient id="i51" gradientUnits="userSpaceOnUse" x1="1376" x2="1652"><stop offset="0" stop-color="#00ff92"/><stop offset=".0109" stop-color="#00ff91"/><stop offset=".0543" stop-color="#18ff8e"/><stop offset=".1703" stop-color="#61ff86"/><stop offset=".2826" stop-color="#b3ff7c"/><stop offset=".3732" stop-color="#fffe73"/><stop offset=".4457" stop-color="#ffc855"/><stop offset=".5" stop-color="#ffaa44"/><stop offset=".5978" stop-color="#ff822d"/><stop offset=".7101" stop-color="#ff621b"/><stop offset=".779" stop-color="#ff5312"/><stop offset="1" stop-color="#ff3100"/></linearGradient><linearGradient id="i52" gradientUnits="userSpaceOnUse" x1="1375" x2="1657"><stop offset="0" stop-color="#00ff96"/><stop offset=".0106" stop-color="#00ff95"/><stop offset=".0496" stop-color="#16ff93"/><stop offset=".1418" stop-color="#51ff8c"/><stop offset=".2589" stop-color="#a7ff83"/><stop offset=".3617" stop-color="#fffe79"/><stop offset=".4255" stop-color="#ffcc5c"/><stop offset=".4823" stop-color="#ffab48"/><stop offset=".5319" stop-color="#ff943b"/><stop offset=".6028" stop-color="#ff7a2c"/><stop offset=".7589" stop-color="#ff5214"/><stop offset=".8723" stop-color="#ff3e09"/><stop offset="1" stop-color="#ff2e00"/></linearGradient><linearGradient id="i53" gradientUnits="userSpaceOnUse" x1="1374" x2="1661"><stop offset="0" stop-color="#00ff9b"/><stop offset=".0139" stop-color="#01ff9a"/><stop offset=".0453" stop-color="#14ff98"/><stop offset=".1812" stop-color="#70ff8e"/><stop offset=".2578" stop-color="#acff88"/><stop offset=".3519" stop-color="#fffe7f"/><stop offset=".4077" stop-color="#ffd063"/><stop offset=".4669" stop-color="#ffac4d"/><stop offset=".5366" stop-color="#ff8c3a"/><stop offset=".5889" stop-color="#ff792f"/><stop offset=".7422" stop-color="#ff5117"/><stop offset=".8606" stop-color="#ff3c0a"/><stop offset="1" stop-color="#ff2a00"/></linearGradient><linearGradient id="i54" gradientUnits="userSpaceOnUse" x1="1373" x2="1665"><stop offset="0" stop-color="#00ff9f"/><stop offset=".0137" stop-color="#01ff9f"/><stop offset=".0411" stop-color="#12ff9d"/><stop offset=".1644" stop-color="#67ff94"/><stop offset=".2329" stop-color="#9dff8f"/><stop offset=".3425" stop-color="#fffe85"/><stop offset=".387" stop-color="#ffd76d"/><stop offset=".4521" stop-color="#ffad53"/><stop offset=".524" stop-color="#ff8b3d"/><stop offset=".5753" stop-color="#ff7832"/><stop offset=".661" stop-color="#ff5f22"/><stop offset=".7774" stop-color="#ff4612"/><stop offset="1" stop-color="#ff2700"/></linearGradient><linearGradient id="i55" gradientUnits="userSpaceOnUse" x1="1372" x2="1669"><stop offset="0" stop-color="#00ffa4"/><stop offset=".0168" stop-color="#03ffa3"/><stop offset=".1549" stop-color="#63ff9a"/><stop offset=".229" stop-color="#9fff95"/><stop offset=".3333" stop-color="#fffd8a"/><stop offset=".3737" stop-color="#ffd973"/><stop offset=".4377" stop-color="#ffae58"/><stop offset=".5118" stop-color="#ff8a41"/><stop offset=".5623" stop-color="#ff7735"/><stop offset=".6465" stop-color="#ff5e25"/><stop offset=".7609" stop-color="#ff4515"/><stop offset=".8788" stop-color="#ff3308"/><stop offset="1" stop-color="#ff2400"/></linearGradient><linearGradient id="i56" gradientUnits="userSpaceOnUse" x1="1371" x2="1674"><stop offset="0" stop-color="#00ffa9"/><stop offset=".0165" stop-color="#03ffa8"/><stop offset=".1452" stop-color="#5fffa0"/><stop offset=".2244" stop-color="#a1ff9a"/><stop offset=".3234" stop-color="#fffd91"/><stop offset=".3762" stop-color="#ffce72"/><stop offset=".4422" stop-color="#ffa456"/><stop offset=".4983" stop-color="#ff8944"/><stop offset=".5479" stop-color="#ff7638"/><stop offset=".6502" stop-color="#ff5824"/><stop offset=".7591" stop-color="#ff4115"/><stop offset=".8878" stop-color="#ff2e07"/><stop offset="1" stop-color="#ff2100"/></linearGradient><linearGradient id="i57" gradientUnits="userSpaceOnUse" x1="1370" x2="1678"><stop offset="0" stop-color="#00ffae"/><stop offset=".0195" stop-color="#05ffad"/><stop offset=".1526" stop-color="#68ffa5"/><stop offset=".2565" stop-color="#c5ff9d"/><stop offset=".3149" stop-color="#fffd97"/><stop offset=".3636" stop-color="#ffd079"/><stop offset=".4318" stop-color="#ffa35a"/><stop offset=".487" stop-color="#ff8848"/><stop offset=".5682" stop-color="#ff6a33"/><stop offset=".6526" stop-color="#ff5323"/><stop offset=".7435" stop-color="#ff4017"/><stop offset=".8669" stop-color="#ff2d09"/><stop offset="1" stop-color="#ff1e00"/></linearGradient><linearGradient id="i58" gradientUnits="userSpaceOnUse" x1="1370" x2="1682"><stop offset="0" stop-color="#00ffb3"/><stop offset=".0096" stop-color="#01ffb3"/><stop offset=".0417" stop-color="#17ffb1"/><stop offset=".1506" stop-color="#6cffaa"/><stop offset=".2372" stop-color="#bbffa4"/><stop offset=".3045" stop-color="#fffd9d"/><stop offset=".3494" stop-color="#ffd280"/><stop offset=".4199" stop-color="#ffa25e"/><stop offset=".4744" stop-color="#ff874b"/><stop offset=".5513" stop-color="#ff6a37"/><stop offset=".6378" stop-color="#ff5226"/><stop offset=".75" stop-color="#ff3b16"/><stop offset=".8782" stop-color="#ff2908"/><stop offset="1" stop-color="#ff1b00"/></linearGradient><linearGradient id="i59" gradientUnits="userSpaceOnUse" x1="1369" x2="1687"><stop offset="0" stop-color="#00ffb9"/><stop offset=".0094" stop-color="#01ffb8"/><stop offset=".0283" stop-color="#0effb7"/><stop offset=".1415" stop-color="#68ffb1"/><stop offset=".2201" stop-color="#b1ffab"/><stop offset=".2925" stop-color="#feffa6"/><stop offset=".2956" stop-color="#fffca4"/><stop offset=".3459" stop-color="#ffcc81"/><stop offset=".4088" stop-color="#ffa162"/><stop offset=".4623" stop-color="#ff864f"/><stop offset=".5314" stop-color="#ff6b3b"/><stop offset=".6101" stop-color="#ff542a"/><stop offset=".7327" stop-color="#ff3a18"/><stop offset=".8774" stop-color="#ff2508"/><stop offset="1" stop-color="#ff1800"/></linearGradient><linearGradient id="i60" gradientUnits="userSpaceOnUse" x1="1368" x2="1691"><stop offset="0" stop-color="#00ffbe"/><stop offset=".0155" stop-color="#05ffbd"/><stop offset=".13" stop-color="#61ffb7"/><stop offset=".2074" stop-color="#aaffb2"/><stop offset=".2848" stop-color="#feffad"/><stop offset=".2879" stop-color="#fffcaa"/><stop offset=".3344" stop-color="#ffce88"/><stop offset=".3963" stop-color="#ffa268"/><stop offset=".452" stop-color="#ff8552"/><stop offset=".517" stop-color="#ff6b3f"/><stop offset=".613" stop-color="#ff4f2a"/><stop offset=".7183" stop-color="#ff391a"/><stop offset=".8762" stop-color="#ff2209"/><stop offset="1" stop-color="#ff1600"/></linearGradient><linearGradient id="i61" gradientUnits="userSpaceOnUse" x1="1367" x2="1695"><stop offset="0" stop-color="#00ffc4"/><stop offset=".0091" stop-color="#01ffc3"/><stop offset=".0427" stop-color="#1affc2"/><stop offset=".1311" stop-color="#65ffbd"/><stop offset=".2134" stop-color="#b6ffb8"/><stop offset=".2774" stop-color="#ffffb4"/><stop offset=".2988" stop-color="#ffe7a2"/><stop offset=".3323" stop-color="#ffc88a"/><stop offset=".3872" stop-color="#ffa16c"/><stop offset=".4573" stop-color="#ff7d51"/><stop offset=".5457" stop-color="#ff5d38"/><stop offset=".6677" stop-color="#ff3f21"/><stop offset=".7713" stop-color="#ff2d13"/><stop offset="1" stop-color="#ff1300"/></linearGradient><linearGradient id="i62" gradientUnits="userSpaceOnUse" x1="1366" x2="1700"><stop offset="0" stop-color="#00ffc9"/><stop offset=".009" stop-color="#01ffc9"/><stop offset=".0329" stop-color="#13ffc8"/><stop offset=".1347" stop-color="#6cffc3"/><stop offset=".2126" stop-color="#bcffbf"/><stop offset=".2695" stop-color="#ffffbb"/><stop offset=".3144" stop-color="#ffcf96"/><stop offset=".3473" stop-color="#ffb580"/><stop offset=".3772" stop-color="#ffa071"/><stop offset=".4551" stop-color="#ff7851"/><stop offset=".5359" stop-color="#ff5b3a"/><stop offset=".6287" stop-color="#ff4327"/><stop offset=".7545" stop-color="#ff2c15"/><stop offset="1" stop-color="#ff1000"/></linearGradient><linearGradient id="i63" gradientUnits="userSpaceOnUse" x1="1365" x2="1704"><stop offset="0" stop-color="#00ffcf"/><stop offset=".0088" stop-color="#01ffcf"/><stop offset=".0236" stop-color="#0cffce"/><stop offset=".1209" stop-color="#62ffca"/><stop offset=".1917" stop-color="#abffc7"/><stop offset=".2625" stop-color="#ffffc2"/><stop offset=".2832" stop-color="#ffe6af"/><stop offset=".3127" stop-color="#ffc997"/><stop offset=".3687" stop-color="#ff9f75"/><stop offset=".4454" stop-color="#ff7754"/><stop offset=".528" stop-color="#ff593c"/><stop offset=".6254" stop-color="#ff4028"/><stop offset=".7404" stop-color="#ff2b17"/><stop offset=".8673" stop-color="#ff1b09"/><stop offset="1" stop-color="#ff0e00"/></linearGradient><linearGradient id="i64" gradientUnits="userSpaceOnUse" x1="1364" x2="1708"><stop offset="0" stop-color="#00ffd5"/><stop offset=".0087" stop-color="#00ffd5"/><stop offset=".0233" stop-color="#0cffd4"/><stop offset=".125" stop-color="#69ffd1"/><stop offset=".1831" stop-color="#a7ffce"/><stop offset=".2558" stop-color="#fffeca"/><stop offset=".3023" stop-color="#ffcb9f"/><stop offset=".3605" stop-color="#ff9e7a"/><stop offset=".4331" stop-color="#ff7759"/><stop offset=".5203" stop-color="#ff573e"/><stop offset=".6221" stop-color="#ff3d29"/><stop offset=".7209" stop-color="#ff2b1a"/><stop offset=".8576" stop-color="#ff190a"/><stop offset="1" stop-color="#ff0c00"/></linearGradient><linearGradient id="i65" gradientUnits="userSpaceOnUse" x1="1363" x2="1713"><stop offset="0" stop-color="#00ffdb"/><stop offset=".0086" stop-color="#00ffdb"/><stop offset=".0229" stop-color="#0cffdb"/><stop offset=".1057" stop-color="#59ffd8"/><stop offset=".1771" stop-color="#a6ffd5"/><stop offset=".2486" stop-color="#fffed1"/><stop offset=".2914" stop-color="#ffcda7"/><stop offset=".3171" stop-color="#ffb694"/><stop offset=".3543" stop-color="#ff9b7d"/><stop offset=".4229" stop-color="#ff765d"/><stop offset=".5114" stop-color="#ff5540"/><stop offset=".6086" stop-color="#ff3c2b"/><stop offset=".7057" stop-color="#ff2a1b"/><stop offset=".8457" stop-color="#ff180b"/><stop offset="1" stop-color="#ff0900"/></linearGradient><linearGradient id="i66" gradientUnits="userSpaceOnUse" x1="1362" x2="1717"><stop offset="0" stop-color="#00ffe2"/><stop offset=".0085" stop-color="#00ffe2"/><stop offset=".1099" stop-color="#60ffdf"/><stop offset=".1775" stop-color="#acffdd"/><stop offset=".2423" stop-color="#fffed9"/><stop offset=".2845" stop-color="#ffccae"/><stop offset=".3042" stop-color="#ffba9d"/><stop offset=".3465" stop-color="#ff9a81"/><stop offset=".4113" stop-color="#ff7662"/><stop offset=".5042" stop-color="#ff5342"/><stop offset=".5831" stop-color="#ff3e30"/><stop offset=".6986" stop-color="#ff281d"/><stop offset=".8254" stop-color="#ff180d"/><stop offset="1" stop-color="#ff0700"/></linearGradient><linearGradient id="i67" gradientUnits="userSpaceOnUse" x1="1361" x2="1721"><stop offset="0" stop-color="#00ffe8"/><stop offset=".0083" stop-color="#00ffe8"/><stop offset=".0861" stop-color="#4affe7"/><stop offset=".1639" stop-color="#a1ffe5"/><stop offset=".2361" stop-color="#fffee1"/><stop offset=".2639" stop-color="#ffdac1"/><stop offset=".2833" stop-color="#ffc6af"/><stop offset=".3417" stop-color="#ff9784"/><stop offset=".4111" stop-color="#ff7162"/><stop offset=".4722" stop-color="#ff594c"/><stop offset=".5806" stop-color="#ff3b31"/><stop offset=".6861" stop-color="#ff271e"/><stop offset=".8472" stop-color="#ff130b"/><stop offset="1" stop-color="#ff0500"/></linearGradient><linearGradient id="i68" gradientUnits="userSpaceOnUse" x1="1360" x2="1726"><stop offset="0" stop-color="#00ffef"/><stop offset=".0082" stop-color="#00ffef"/><stop offset=".0301" stop-color="#14ffef"/><stop offset=".1175" stop-color="#6fffed"/><stop offset=".1803" stop-color="#bcffec"/><stop offset=".2295" stop-color="#fffdea"/><stop offset=".2514" stop-color="#ffe0ce"/><stop offset=".276" stop-color="#ffc5b5"/><stop offset=".3333" stop-color="#ff9689"/><stop offset=".3907" stop-color="#ff756a"/><stop offset=".4699" stop-color="#ff554c"/><stop offset=".5683" stop-color="#ff3a33"/><stop offset=".6913" stop-color="#ff231d"/><stop offset=".8251" stop-color="#ff120d"/><stop offset="1" stop-color="#ff0300"/></linearGradient><linearGradient id="i69" gradientUnits="userSpaceOnUse" x1="1359" x2="1730"><stop offset="0" stop-color="#00fff6"/><stop offset=".0108" stop-color="#02fff6"/><stop offset=".1024" stop-color="#61fff5"/><stop offset=".1698" stop-color="#b4fff5"/><stop offset=".2237" stop-color="#fffdf2"/><stop offset=".2534" stop-color="#ffd6cc"/><stop offset=".2695" stop-color="#ffc4bc"/><stop offset=".3019" stop-color="#ffa79f"/><stop offset=".3288" stop-color="#ff938c"/><stop offset=".3908" stop-color="#ff706a"/><stop offset=".4663" stop-color="#ff524e"/><stop offset=".5714" stop-color="#ff3632"/><stop offset=".6927" stop-color="#ff201d"/><stop offset=".8464" stop-color="#ff0e0b"/><stop offset="1" stop-color="#ff0100"/></linearGradient><linearGradient id="i70" gradientUnits="userSpaceOnUse" x1="1358" x2="1732"><stop offset="0" stop-color="#00fffd"/><stop offset=".0107" stop-color="#02fffd"/><stop offset=".0909" stop-color="#56fffd"/><stop offset=".1551" stop-color="#a5fffd"/><stop offset=".2193" stop-color="#fffdfb"/><stop offset=".2406" stop-color="#ffdfdd"/><stop offset=".262" stop-color="#ffc6c5"/><stop offset=".2914" stop-color="#ffaba9"/><stop offset=".3262" stop-color="#ff908f"/><stop offset=".3957" stop-color="#ff6a69"/><stop offset=".4652" stop-color="#ff4f4f"/><stop offset=".5668" stop-color="#ff3434"/><stop offset=".6898" stop-color="#ff1f1e"/><stop offset=".8316" stop-color="#ff0d0d"/><stop offset="1" stop-color="#ff0000"/></linearGradient><linearGradient id="i71" gradientUnits="userSpaceOnUse" x1="1357" x2="1728"><stop offset="0" stop-color="#00faff"/><stop offset=".0081" stop-color="#00faff"/><stop offset=".0296" stop-color="#14faff"/><stop offset=".1132" stop-color="#6ef9ff"/><stop offset=".1779" stop-color="#c0f8ff"/><stop offset=".221" stop-color="#fff8ff"/><stop offset=".248" stop-color="#ffd4db"/><stop offset=".2695" stop-color="#ffbdc3"/><stop offset=".3288" stop-color="#ff8d92"/><stop offset=".4016" stop-color="#ff666b"/><stop offset=".4744" stop-color="#ff4c4f"/><stop offset=".5687" stop-color="#ff3337"/><stop offset=".7008" stop-color="#ff1c1f"/><stop offset=".8464" stop-color="#ff0b0e"/><stop offset="1" stop-color="#ff0001"/></linearGradient><linearGradient id="i72" gradientUnits="userSpaceOnUse" x1="1356" x2="1722"><stop offset="0" stop-color="#00f3ff"/><stop offset=".0082" stop-color="#00f3ff"/><stop offset=".0273" stop-color="#11f2ff"/><stop offset=".112" stop-color="#69f1ff"/><stop offset=".1612" stop-color="#a4f0ff"/><stop offset=".2268" stop-color="#feefff"/><stop offset=".2295" stop-color="#ffecfc"/><stop offset=".2541" stop-color="#ffcddc"/><stop offset=".276" stop-color="#ffb7c4"/><stop offset=".3306" stop-color="#ff8c97"/><stop offset=".4044" stop-color="#ff656e"/><stop offset=".4781" stop-color="#ff4a52"/><stop offset=".571" stop-color="#ff3339"/><stop offset=".6776" stop-color="#ff2025"/><stop offset=".8361" stop-color="#ff0c11"/><stop offset="1" stop-color="#ff0003"/></linearGradient><linearGradient id="i73" gradientUnits="userSpaceOnUse" x1="1355" x2="1716"><stop offset="0" stop-color="#00ecff"/><stop offset=".0139" stop-color="#04ecff"/><stop offset=".0803" stop-color="#44eaff"/><stop offset=".1551" stop-color="#97e8ff"/><stop offset=".2355" stop-color="#ffe4fd"/><stop offset=".2548" stop-color="#ffcde3"/><stop offset=".2825" stop-color="#ffb1c5"/><stop offset=".3296" stop-color="#ff8d9e"/><stop offset=".4017" stop-color="#ff6675"/><stop offset=".482" stop-color="#ff4955"/><stop offset=".5817" stop-color="#ff303b"/><stop offset=".7036" stop-color="#ff1c24"/><stop offset=".856" stop-color="#ff0a12"/><stop offset="1" stop-color="#ff0005"/></linearGradient><linearGradient id="i74" gradientUnits="userSpaceOnUse" x1="1354" x2="1710"><stop offset="0" stop-color="#00e5ff"/><stop offset=".014" stop-color="#04e5ff"/><stop offset=".0955" stop-color="#51e3ff"/><stop offset=".177" stop-color="#ace0ff"/><stop offset=".2416" stop-color="#ffdcfd"/><stop offset=".2612" stop-color="#ffc6e4"/><stop offset=".2949" stop-color="#ffa6c1"/><stop offset=".3511" stop-color="#ff8096"/><stop offset=".4129" stop-color="#ff6175"/><stop offset=".486" stop-color="#ff4858"/><stop offset=".5815" stop-color="#ff303e"/><stop offset=".6966" stop-color="#ff1d28"/><stop offset=".8343" stop-color="#ff0c16"/><stop offset="1" stop-color="#ff0007"/></linearGradient><linearGradient id="i75" gradientUnits="userSpaceOnUse" x1="1353" x2="1704"><stop offset="0" stop-color="#00dfff"/><stop offset=".0085" stop-color="#00dfff"/><stop offset=".0171" stop-color="#06deff"/><stop offset=".114" stop-color="#61dbff"/><stop offset=".1795" stop-color="#a9d9ff"/><stop offset=".2479" stop-color="#ffd5fe"/><stop offset=".265" stop-color="#ffc2e8"/><stop offset=".302" stop-color="#ffa0c2"/><stop offset=".3561" stop-color="#ff7d99"/><stop offset=".4103" stop-color="#ff627b"/><stop offset=".4815" stop-color="#ff495e"/><stop offset=".5926" stop-color="#ff2e3f"/><stop offset=".7094" stop-color="#ff1b29"/><stop offset=".8547" stop-color="#ff0a17"/><stop offset="1" stop-color="#ff0009"/></linearGradient><linearGradient id="i76" gradientUnits="userSpaceOnUse" x1="1352" x2="1697"><stop offset="0" stop-color="#00d9ff"/><stop offset=".0116" stop-color="#01d8ff"/><stop offset=".1043" stop-color="#54d5ff"/><stop offset=".1797" stop-color="#a3d1ff"/><stop offset=".2551" stop-color="#ffcdff"/><stop offset=".3014" stop-color="#ffa2cb"/><stop offset=".3623" stop-color="#ff7a9c"/><stop offset=".4319" stop-color="#ff5a77"/><stop offset=".5217" stop-color="#ff3e56"/><stop offset=".6203" stop-color="#ff293d"/><stop offset=".7188" stop-color="#ff1a2b"/><stop offset=".8783" stop-color="#ff0817"/><stop offset="1" stop-color="#ff000c"/></linearGradient><linearGradient id="i77" gradientUnits="userSpaceOnUse" x1="1351" x2="1691"><stop offset="0" stop-color="#00d3ff"/><stop offset=".0118" stop-color="#01d2ff"/><stop offset=".0206" stop-color="#08d2ff"/><stop offset=".1176" stop-color="#5eceff"/><stop offset=".1912" stop-color="#aacaff"/><stop offset=".2618" stop-color="#ffc6ff"/><stop offset=".3088" stop-color="#ff9ccc"/><stop offset=".3676" stop-color="#ff779f"/><stop offset=".4441" stop-color="#ff5677"/><stop offset=".5265" stop-color="#ff3d59"/><stop offset=".6235" stop-color="#ff2840"/><stop offset=".7324" stop-color="#ff182c"/><stop offset=".9" stop-color="#ff0617"/><stop offset="1" stop-color="#ff000e"/></linearGradient><linearGradient id="i78" gradientUnits="userSpaceOnUse" x1="1351" x2="1685"><stop offset="0" stop-color="#00cdff"/><stop offset=".009" stop-color="#01ccff"/><stop offset=".0419" stop-color="#1bcbff"/><stop offset=".1257" stop-color="#65c7ff"/><stop offset=".2006" stop-color="#b1c2ff"/><stop offset=".2665" stop-color="#febeff"/><stop offset=".2695" stop-color="#ffbcfc"/><stop offset=".3144" stop-color="#ff96cd"/><stop offset=".3683" stop-color="#ff75a4"/><stop offset=".4431" stop-color="#ff557c"/><stop offset=".5299" stop-color="#ff3c5c"/><stop offset=".6497" stop-color="#ff243e"/><stop offset=".7455" stop-color="#ff162d"/><stop offset=".8653" stop-color="#ff091e"/><stop offset="1" stop-color="#ff0010"/></linearGradient><linearGradient id="i79" gradientUnits="userSpaceOnUse" x1="1350" x2="1679"><stop offset="0" stop-color="#00c7ff"/><stop offset=".0091" stop-color="#01c6ff"/><stop offset=".0304" stop-color="#11c5ff"/><stop offset=".1337" stop-color="#69c0ff"/><stop offset=".2006" stop-color="#abbcff"/><stop offset=".2766" stop-color="#ffb5fd"/><stop offset=".3131" stop-color="#ff97d6"/><stop offset=".3708" stop-color="#ff74a9"/><stop offset=".4468" stop-color="#ff5480"/><stop offset=".535" stop-color="#ff3a5f"/><stop offset=".6535" stop-color="#ff2341"/><stop offset=".7599" stop-color="#ff142e"/><stop offset="1" stop-color="#ff0013"/></linearGradient><linearGradient id="i80" gradientUnits="userSpaceOnUse" x1="1349" x2="1672"><stop offset="0" stop-color="#00c1ff"/><stop offset=".0093" stop-color="#01c1ff"/><stop offset=".0341" stop-color="#13bfff"/><stop offset=".1424" stop-color="#6db9ff"/><stop offset=".2167" stop-color="#b5b4ff"/><stop offset=".2848" stop-color="#ffaefd"/><stop offset=".3313" stop-color="#ff8bcf"/><stop offset=".4025" stop-color="#ff669d"/><stop offset=".452" stop-color="#ff5384"/><stop offset=".5325" stop-color="#ff3b65"/><stop offset=".6192" stop-color="#ff294d"/><stop offset=".7276" stop-color="#ff1937"/><stop offset=".8885" stop-color="#ff0721"/><stop offset="1" stop-color="#ff0015"/></linearGradient><linearGradient id="i81" gradientUnits="userSpaceOnUse" x1="1348" x2="1666"><stop offset="0" stop-color="#00bcff"/><stop offset=".0094" stop-color="#01bbff"/><stop offset=".0283" stop-color="#0ebaff"/><stop offset=".1258" stop-color="#5bb4ff"/><stop offset=".217" stop-color="#afaeff"/><stop offset=".2925" stop-color="#ffa8fe"/><stop offset=".3333" stop-color="#ff8ad5"/><stop offset=".3679" stop-color="#ff76ba"/><stop offset=".4308" stop-color="#ff5a94"/><stop offset=".5094" stop-color="#ff4172"/><stop offset=".5818" stop-color="#ff305b"/><stop offset=".6981" stop-color="#ff1c40"/><stop offset=".8428" stop-color="#ff0c29"/><stop offset="1" stop-color="#ff0018"/></linearGradient><linearGradient id="i82" gradientUnits="userSpaceOnUse" x1="1347" x2="1660"><stop offset="0" stop-color="#00b6ff"/><stop offset=".0096" stop-color="#01b6ff"/><stop offset=".0319" stop-color="#10b4ff"/><stop offset=".1438" stop-color="#67adff"/><stop offset=".2364" stop-color="#bca7ff"/><stop offset=".3003" stop-color="#ffa1ff"/><stop offset=".3419" stop-color="#ff84d6"/><stop offset=".377" stop-color="#ff71bb"/><stop offset=".4473" stop-color="#ff5492"/><stop offset=".524" stop-color="#ff3d72"/><stop offset=".6134" stop-color="#ff2a57"/><stop offset=".7348" stop-color="#ff173d"/><stop offset=".8594" stop-color="#ff0a2a"/><stop offset="1" stop-color="#ff001b"/></linearGradient><linearGradient id="i83" gradientUnits="userSpaceOnUse" x1="1346" x2="1654"><stop offset="0" stop-color="#00b1ff"/><stop offset=".0097" stop-color="#01b0ff"/><stop offset=".0584" stop-color="#22adff"/><stop offset=".1623" stop-color="#73a7ff"/><stop offset=".237" stop-color="#b6a1ff"/><stop offset=".3084" stop-color="#ff9bff"/><stop offset=".3604" stop-color="#ff7acf"/><stop offset=".4253" stop-color="#ff5ca4"/><stop offset=".4708" stop-color="#ff4c8d"/><stop offset=".5422" stop-color="#ff3971"/><stop offset=".6558" stop-color="#ff2351"/><stop offset=".75" stop-color="#ff153e"/><stop offset=".8864" stop-color="#ff072a"/><stop offset="1" stop-color="#ff001d"/></linearGradient><linearGradient id="i84" gradientUnits="userSpaceOnUse" x1="1345" x2="1648"><stop offset="0" stop-color="#00acff"/><stop offset=".0099" stop-color="#01abff"/><stop offset=".0264" stop-color="#0baaff"/><stop offset=".1584" stop-color="#6ca1ff"/><stop offset=".2013" stop-color="#909eff"/><stop offset=".264" stop-color="#c999ff"/><stop offset=".3168" stop-color="#fe94ff"/><stop offset=".3201" stop-color="#ff92fc"/><stop offset=".3828" stop-color="#ff6ec6"/><stop offset=".4356" stop-color="#ff58a5"/><stop offset=".4983" stop-color="#ff4487"/><stop offset=".5578" stop-color="#ff3571"/><stop offset=".637" stop-color="#ff265a"/><stop offset=".7327" stop-color="#ff1845"/><stop offset=".8746" stop-color="#ff082f"/><stop offset="1" stop-color="#ff0020"/></linearGradient><linearGradient id="i85" gradientUnits="userSpaceOnUse" x1="1344" x2="1641"><stop offset="0" stop-color="#00a7ff"/><stop offset=".0101" stop-color="#00a6ff"/><stop offset=".0303" stop-color="#0da5ff"/><stop offset=".1481" stop-color="#609dff"/><stop offset=".2256" stop-color="#9f97ff"/><stop offset=".33" stop-color="#ff8cfd"/><stop offset=".3737" stop-color="#ff73d6"/><stop offset=".4444" stop-color="#ff55a8"/><stop offset=".5051" stop-color="#ff428b"/><stop offset=".5758" stop-color="#ff3171"/><stop offset=".6498" stop-color="#ff245c"/><stop offset=".7677" stop-color="#ff1443"/><stop offset=".899" stop-color="#ff062f"/><stop offset="1" stop-color="#ff0024"/></linearGradient><linearGradient id="i86" gradientUnits="userSpaceOnUse" x1="1343" x2="1635"><stop offset="0" stop-color="#00a2ff"/><stop offset=".0103" stop-color="#00a1ff"/><stop offset=".0377" stop-color="#119fff"/><stop offset=".1644" stop-color="#6997ff"/><stop offset=".25" stop-color="#ae90ff"/><stop offset=".339" stop-color="#ff86fd"/><stop offset=".4041" stop-color="#ff65c8"/><stop offset=".4555" stop-color="#ff51a9"/><stop offset=".5171" stop-color="#ff3f8c"/><stop offset=".5925" stop-color="#ff2e71"/><stop offset=".6815" stop-color="#ff1f59"/><stop offset=".7842" stop-color="#ff1244"/><stop offset="1" stop-color="#ff0027"/></linearGradient><linearGradient id="i87" gradientUnits="userSpaceOnUse" x1="1342" x2="1629"><stop offset="0" stop-color="#009dff"/><stop offset=".0105" stop-color="#009cff"/><stop offset=".0453" stop-color="#159aff"/><stop offset=".1638" stop-color="#6592ff"/><stop offset=".2439" stop-color="#a38bff"/><stop offset=".3484" stop-color="#ff81fe"/><stop offset=".4042" stop-color="#ff65d0"/><stop offset=".4669" stop-color="#ff4daa"/><stop offset=".5226" stop-color="#ff3e90"/><stop offset=".5819" stop-color="#ff307a"/><stop offset=".676" stop-color="#ff1f5f"/><stop offset=".7631" stop-color="#ff144c"/><stop offset=".885" stop-color="#ff0738"/><stop offset="1" stop-color="#ff002a"/></linearGradient><linearGradient id="i88" gradientUnits="userSpaceOnUse" x1="1341" x2="1623"><stop offset="0" stop-color="#0098ff"/><stop offset=".0106" stop-color="#0098ff"/><stop offset=".0284" stop-color="#0a97ff"/><stop offset=".1631" stop-color="#618dff"/><stop offset=".2624" stop-color="#ac85ff"/><stop offset=".3582" stop-color="#ff7bfe"/><stop offset=".422" stop-color="#ff5dcc"/><stop offset=".4787" stop-color="#ff4aab"/><stop offset=".5355" stop-color="#ff3a91"/><stop offset=".5957" stop-color="#ff2d7b"/><stop offset=".7553" stop-color="#ff1552"/><stop offset=".9078" stop-color="#ff0539"/><stop offset="1" stop-color="#ff002d"/></linearGradient><linearGradient id="i89" gradientUnits="userSpaceOnUse" x1="1340" x2="1616"><stop offset="0" stop-color="#0094ff"/><stop offset=".0109" stop-color="#0093ff"/><stop offset=".0362" stop-color="#0e91ff"/><stop offset=".1522" stop-color="#5689ff"/><stop offset=".2609" stop-color="#a480ff"/><stop offset=".3696" stop-color="#ff76ff"/><stop offset=".4239" stop-color="#ff5dd4"/><stop offset=".4928" stop-color="#ff46ac"/><stop offset=".5435" stop-color="#ff3995"/><stop offset=".6159" stop-color="#ff2a7b"/><stop offset=".7754" stop-color="#ff1353"/><stop offset=".8986" stop-color="#ff063e"/><stop offset="1" stop-color="#ff0031"/></linearGradient><linearGradient id="i90" gradientUnits="userSpaceOnUse" x1="1339" x2="1610"><stop offset="0" stop-color="#008fff"/><stop offset=".0111" stop-color="#008fff"/><stop offset=".048" stop-color="#148cff"/><stop offset=".1661" stop-color="#5c83ff"/><stop offset=".2768" stop-color="#aa7aff"/><stop offset=".3801" stop-color="#fe70ff"/><stop offset=".3838" stop-color="#ff6efc"/><stop offset=".4428" stop-color="#ff56d0"/><stop offset=".5055" stop-color="#ff42ad"/><stop offset=".5572" stop-color="#ff3596"/><stop offset=".631" stop-color="#ff277c"/><stop offset=".7934" stop-color="#ff1054"/><stop offset="1" stop-color="#ff0034"/></linearGradient><linearGradient id="i91" gradientUnits="userSpaceOnUse" x1="1338" x2="1604"><stop offset="0" stop-color="#008bff"/><stop offset=".0113" stop-color="#008aff"/><stop offset=".0639" stop-color="#1c87ff"/><stop offset=".1805" stop-color="#627eff"/><stop offset=".2932" stop-color="#b074ff"/><stop offset=".3947" stop-color="#ff69fd"/><stop offset=".4549" stop-color="#ff52d1"/><stop offset=".5188" stop-color="#ff3fae"/><stop offset=".6278" stop-color="#ff2783"/><stop offset=".782" stop-color="#ff125b"/><stop offset=".9323" stop-color="#ff0341"/><stop offset="1" stop-color="#ff0038"/></linearGradient><linearGradient id="i92" gradientUnits="userSpaceOnUse" x1="1337" x2="1598"><stop offset="0" stop-color="#0087ff"/><stop offset=".0115" stop-color="#0086ff"/><stop offset=".0805" stop-color="#2481ff"/><stop offset=".1954" stop-color="#6878ff"/><stop offset=".2797" stop-color="#a071ff"/><stop offset=".4061" stop-color="#ff64fd"/><stop offset=".4483" stop-color="#ff54de"/><stop offset=".5057" stop-color="#ff42bc"/><stop offset=".5785" stop-color="#ff319b"/><stop offset=".6437" stop-color="#ff2484"/><stop offset=".8008" stop-color="#ff0f5c"/><stop offset="1" stop-color="#ff003c"/></linearGradient><linearGradient id="i93" gradientUnits="userSpaceOnUse" x1="1336" x2="1592"><stop offset="0" stop-color="#0083ff"/><stop offset=".0117" stop-color="#0082ff"/><stop offset=".0547" stop-color="#157fff"/><stop offset=".2031" stop-color="#6974ff"/><stop offset=".3086" stop-color="#ae6aff"/><stop offset=".418" stop-color="#ff5ffe"/><stop offset=".4531" stop-color="#ff52e4"/><stop offset=".5078" stop-color="#ff41c3"/><stop offset=".5742" stop-color="#ff31a4"/><stop offset=".6445" stop-color="#ff248a"/><stop offset=".8008" stop-color="#ff0f61"/><stop offset="1" stop-color="#ff0040"/></linearGradient><linearGradient id="i94" gradientUnits="userSpaceOnUse" x1="1335" x2="1585"><stop offset="0" stop-color="#007eff"/><stop offset=".016" stop-color="#017dff"/><stop offset=".12" stop-color="#3676ff"/><stop offset=".212" stop-color="#6a6fff"/><stop offset=".324" stop-color="#b165ff"/><stop offset=".432" stop-color="#ff5afe"/><stop offset=".488" stop-color="#ff47d8"/><stop offset=".548" stop-color="#ff38b8"/><stop offset=".664" stop-color="#ff218b"/><stop offset=".824" stop-color="#ff0d62"/><stop offset="1" stop-color="#ff0045"/></linearGradient><linearGradient id="i95" gradientUnits="userSpaceOnUse" x1="1334" x2="1579"><stop offset="0" stop-color="#007aff"/><stop offset=".0163" stop-color="#0179ff"/><stop offset=".1143" stop-color="#3172ff"/><stop offset=".2204" stop-color="#6b6aff"/><stop offset=".3388" stop-color="#b460ff"/><stop offset=".4449" stop-color="#ff55ff"/><stop offset=".5265" stop-color="#ff3dcb"/><stop offset=".6" stop-color="#ff2ca9"/><stop offset=".6571" stop-color="#ff2294"/><stop offset=".8163" stop-color="#ff0e69"/><stop offset="1" stop-color="#ff0049"/></linearGradient><linearGradient id="i96" gradientUnits="userSpaceOnUse" x1="1333" x2="1573"><stop offset="0" stop-color="#0077ff"/><stop offset=".0167" stop-color="#0175ff"/><stop offset=".0625" stop-color="#1672ff"/><stop offset=".2167" stop-color="#6567ff"/><stop offset=".3417" stop-color="#af5cff"/><stop offset=".4583" stop-color="#ff50ff"/><stop offset=".5375" stop-color="#ff3ace"/><stop offset=".6042" stop-color="#ff2baf"/><stop offset=".675" stop-color="#ff1f95"/><stop offset=".8417" stop-color="#ff0b69"/><stop offset="1" stop-color="#ff004e"/></linearGradient><linearGradient id="i97" gradientUnits="userSpaceOnUse" x1="1332" x2="1567"><stop offset="0" stop-color="#0073ff"/><stop offset=".017" stop-color="#0172ff"/><stop offset=".0426" stop-color="#0c70ff"/><stop offset=".2255" stop-color="#6662ff"/><stop offset=".3574" stop-color="#b257ff"/><stop offset=".4723" stop-color="#fe4bff"/><stop offset=".5489" stop-color="#ff37d1"/><stop offset=".6043" stop-color="#ff2bb7"/><stop offset=".6809" stop-color="#ff1e9a"/><stop offset=".7574" stop-color="#ff1483"/><stop offset=".8638" stop-color="#ff096a"/><stop offset="1" stop-color="#ff0052"/></linearGradient><linearGradient id="i98" gradientUnits="userSpaceOnUse" x1="1331" x2="1560"><stop offset="0" stop-color="#006fff"/><stop offset=".0131" stop-color="#006eff"/><stop offset=".0349" stop-color="#086dff"/><stop offset=".2358" stop-color="#675eff"/><stop offset=".3755" stop-color="#b552ff"/><stop offset=".4891" stop-color="#fe47ff"/><stop offset=".5633" stop-color="#ff34d4"/><stop offset=".6288" stop-color="#ff27b6"/><stop offset=".7031" stop-color="#ff1c9b"/><stop offset=".7817" stop-color="#ff1284"/><stop offset=".8908" stop-color="#ff076b"/><stop offset="1" stop-color="#ff0058"/></linearGradient><linearGradient id="i99" gradientUnits="userSpaceOnUse" x1="1331" x2="1554"><stop offset="0" stop-color="#006bff"/><stop offset=".0135" stop-color="#016aff"/><stop offset=".0673" stop-color="#1767ff"/><stop offset=".2601" stop-color="#7158ff"/><stop offset=".3767" stop-color="#b04eff"/><stop offset=".5067" stop-color="#ff41fe"/><stop offset=".6009" stop-color="#ff2cca"/><stop offset=".722" stop-color="#ff199c"/><stop offset=".8027" stop-color="#ff0f85"/><stop offset="1" stop-color="#ff005d"/></linearGradient><linearGradient id="i100" gradientUnits="userSpaceOnUse" x1="1330" x2="1548"><stop offset="0" stop-color="#0067ff"/><stop offset=".0138" stop-color="#0166ff"/><stop offset=".055" stop-color="#1164ff"/><stop offset=".2523" stop-color="#6955ff"/><stop offset=".4037" stop-color="#b849ff"/><stop offset=".5229" stop-color="#ff3dfe"/><stop offset=".6101" stop-color="#ff2acf"/><stop offset=".6697" stop-color="#ff20b6"/><stop offset=".7523" stop-color="#ff159a"/><stop offset=".8257" stop-color="#ff0d86"/><stop offset="1" stop-color="#ff0063"/></linearGradient><linearGradient id="i101" gradientUnits="userSpaceOnUse" x1="1329" x2="1542"><stop offset="0" stop-color="#0064ff"/><stop offset=".0235" stop-color="#0462ff"/><stop offset=".0845" stop-color="#1c5eff"/><stop offset=".2864" stop-color="#754fff"/><stop offset=".4319" stop-color="#c043ff"/><stop offset=".5399" stop-color="#ff39ff"/><stop offset=".6197" stop-color="#ff28d4"/><stop offset=".7324" stop-color="#ff17a8"/><stop offset=".8451" stop-color="#ff0b88"/><stop offset="1" stop-color="#ff0068"/></linearGradient><linearGradient id="i102" gradientUnits="userSpaceOnUse" x1="1328" x2="1536"><stop offset="0" stop-color="#0060ff"/><stop offset=".0192" stop-color="#025fff"/><stop offset=".0721" stop-color="#165cff"/><stop offset=".2788" stop-color="#6d4dff"/><stop offset=".4375" stop-color="#bb40ff"/><stop offset=".5577" stop-color="#ff34ff"/><stop offset=".6298" stop-color="#ff26d9"/><stop offset=".7452" stop-color="#ff15ac"/><stop offset=".8702" stop-color="#ff0889"/><stop offset="1" stop-color="#ff006e"/></linearGradient><linearGradient id="i103" gradientUnits="userSpaceOnUse" x1="1327" x2="1529"><stop offset="0" stop-color="#005dff"/><stop offset=".0198" stop-color="#025cff"/><stop offset=".099" stop-color="#1f57ff"/><stop offset=".2921" stop-color="#6e49ff"/><stop offset=".4109" stop-color="#a53fff"/><stop offset=".5792" stop-color="#fe30ff"/><stop offset=".6485" stop-color="#ff23dc"/><stop offset=".7475" stop-color="#ff15b5"/><stop offset=".8713" stop-color="#ff0891"/><stop offset="1" stop-color="#ff0076"/></linearGradient><linearGradient id="i104" gradientUnits="userSpaceOnUse" x1="1326" x2="1523"><stop offset="0" stop-color="#005aff"/><stop offset=".0152" stop-color="#0059ff"/><stop offset=".0863" stop-color="#1954ff"/><stop offset=".2792" stop-color="#6447ff"/><stop offset=".4569" stop-color="#b439ff"/><stop offset=".599" stop-color="#fe2cff"/><stop offset=".6853" stop-color="#ff1dd6"/><stop offset=".7868" stop-color="#ff11b1"/><stop offset=".8782" stop-color="#ff0897"/><stop offset="1" stop-color="#ff007c"/></linearGradient><linearGradient id="i105" gradientUnits="userSpaceOnUse" x1="1325" x2="1517"><stop offset="0" stop-color="#0056ff"/><stop offset=".0156" stop-color="#0055ff"/><stop offset=".1094" stop-color="#2050ff"/><stop offset=".2917" stop-color="#6543ff"/><stop offset=".4583" stop-color="#ad36ff"/><stop offset=".625" stop-color="#ff27fe"/><stop offset=".6979" stop-color="#ff1bdb"/><stop offset=".7865" stop-color="#ff10ba"/><stop offset=".8594" stop-color="#ff09a4"/><stop offset="1" stop-color="#ff0083"/></linearGradient><linearGradient id="i106" gradientUnits="userSpaceOnUse" x1="1324" x2="1511"><stop offset="0" stop-color="#0053ff"/><stop offset=".016" stop-color="#0052ff"/><stop offset=".0749" stop-color="#134fff"/><stop offset=".3102" stop-color="#683fff"/><stop offset=".4706" stop-color="#ab33ff"/><stop offset=".6471" stop-color="#ff23fe"/><stop offset=".7166" stop-color="#ff19de"/><stop offset=".8128" stop-color="#ff0dbb"/><stop offset=".9144" stop-color="#ff049e"/><stop offset="1" stop-color="#ff008b"/></linearGradient><linearGradient id="i107" gradientUnits="userSpaceOnUse" x1="1323" x2="1504"><stop offset="0" stop-color="#0050ff"/><stop offset=".0166" stop-color="#004fff"/><stop offset=".0939" stop-color="#184aff"/><stop offset=".3315" stop-color="#6b3bff"/><stop offset=".4862" stop-color="#a92fff"/><stop offset=".674" stop-color="#ff1fff"/><stop offset=".7348" stop-color="#ff17e3"/><stop offset=".8011" stop-color="#ff0fca"/><stop offset=".8674" stop-color="#ff08b5"/><stop offset="1" stop-color="#ff0094"/></linearGradient><linearGradient id="i108" gradientUnits="userSpaceOnUse" x1="1322" x2="1498"><stop offset="0" stop-color="#004dff"/><stop offset=".017" stop-color="#004cff"/><stop offset=".1136" stop-color="#1d46ff"/><stop offset=".358" stop-color="#7036ff"/><stop offset=".517" stop-color="#ae2bff"/><stop offset=".6989" stop-color="#ff1bff"/><stop offset=".7784" stop-color="#ff11dd"/><stop offset=".8409" stop-color="#ff0bc7"/><stop offset="1" stop-color="#ff009c"/></linearGradient><linearGradient id="i109" gradientUnits="userSpaceOnUse" x1="1321" x2="1492"><stop offset="0" stop-color="#004aff"/><stop offset=".0175" stop-color="#0049ff"/><stop offset=".1345" stop-color="#2242ff"/><stop offset=".386" stop-color="#7532ff"/><stop offset=".5497" stop-color="#b326ff"/><stop offset=".7251" stop-color="#fe18ff"/><stop offset=".7953" stop-color="#ff0fe2"/><stop offset=".8772" stop-color="#ff07c6"/><stop offset="1" stop-color="#ff00a5"/></linearGradient><linearGradient id="i110" gradientUnits="userSpaceOnUse" x1="1320" x2="1486"><stop offset="0" stop-color="#0047ff"/><stop offset=".0181" stop-color="#0046ff"/><stop offset=".1566" stop-color="#273eff"/><stop offset=".4217" stop-color="#7c2dff"/><stop offset=".6024" stop-color="#bf20ff"/><stop offset=".753" stop-color="#fe14ff"/><stop offset=".8855" stop-color="#ff06ce"/><stop offset="1" stop-color="#ff00ae"/></linearGradient><linearGradient id="i111" gradientUnits="userSpaceOnUse" x1="1319" x2="1480"><stop offset="0" stop-color="#0044ff"/><stop offset=".0186" stop-color="#0043ff"/><stop offset=".1739" stop-color="#2a3aff"/><stop offset=".4534" stop-color="#8129ff"/><stop offset=".6584" stop-color="#cb1aff"/><stop offset=".7826" stop-color="#fe10ff"/><stop offset=".8634" stop-color="#ff08e1"/><stop offset=".9565" stop-color="#ff00c4"/><stop offset="1" stop-color="#ff00b8"/></linearGradient><linearGradient id="i112" gradientUnits="userSpaceOnUse" x1="1318" x2="1473"><stop offset="0" stop-color="#0041ff"/><stop offset=".0258" stop-color="#0140ff"/><stop offset=".3097" stop-color="#4e30ff"/><stop offset=".5806" stop-color="#a41fff"/><stop offset=".8194" stop-color="#fd0dff"/><stop offset=".9613" stop-color="#ff00d0"/><stop offset="1" stop-color="#ff00c5"/></linearGradient><linearGradient id="i113" gradientUnits="userSpaceOnUse" x1="1317" x2="1467"><stop offset="0" stop-color="#003eff"/><stop offset=".0267" stop-color="#013dff"/><stop offset=".14" stop-color="#1d37ff"/><stop offset=".4133" stop-color="#6828ff"/><stop offset=".6733" stop-color="#bb17ff"/><stop offset=".86" stop-color="#ff09ff"/><stop offset=".96" stop-color="#ff00dc"/><stop offset="1" stop-color="#ff00d0"/></linearGradient><linearGradient id="i114" gradientUnits="userSpaceOnUse" x1="1316" x2="1461"><stop offset="0" stop-color="#003bff"/><stop offset=".0276" stop-color="#013aff"/><stop offset=".0966" stop-color="#1137ff"/><stop offset=".4138" stop-color="#6326ff"/><stop offset=".6414" stop-color="#a717ff"/><stop offset=".8966" stop-color="#ff05ff"/><stop offset="1" stop-color="#ff00dd"/></linearGradient><linearGradient id="i115" gradientUnits="userSpaceOnUse" x1="1315" x2="1455"><stop offset="0" stop-color="#0039ff"/><stop offset=".0286" stop-color="#0137ff"/><stop offset=".1143" stop-color="#1433ff"/><stop offset=".4286" stop-color="#6223ff"/><stop offset=".7286" stop-color="#b910ff"/><stop offset=".9357" stop-color="#ff02ff"/><stop offset="1" stop-color="#ff00ea"/></linearGradient><linearGradient id="i116" gradientUnits="userSpaceOnUse" x1="1314" x2="1449"><stop offset="0" stop-color="#0036ff"/><stop offset=".0296" stop-color="#0135ff"/><stop offset=".1333" stop-color="#1730ff"/><stop offset=".4444" stop-color="#6120ff"/><stop offset=".7185" stop-color="#ac10ff"/><stop offset=".9778" stop-color="#fe00ff"/><stop offset="1" stop-color="#ff00f9"/></linearGradient><linearGradient id="i117" gradientUnits="userSpaceOnUse" x1="1313" x2="1442"><stop offset="0" stop-color="#0033ff"/><stop offset=".0233" stop-color="#0032ff"/><stop offset=".0775" stop-color="#0a30ff"/><stop offset=".4651" stop-color="#601dff"/><stop offset=".7907" stop-color="#b50bff"/><stop offset="1" stop-color="#f400ff"/></linearGradient><linearGradient id="i118" gradientUnits="userSpaceOnUse" x1="1312" x2="1436"><stop offset="0" stop-color="#0031ff"/><stop offset=".0403" stop-color="#022fff"/><stop offset=".0968" stop-color="#0d2dff"/><stop offset=".4839" stop-color="#5f1bff"/><stop offset=".75" stop-color="#a00cff"/><stop offset="1" stop-color="#e500ff"/></linearGradient><linearGradient id="i119" gradientUnits="userSpaceOnUse" x1="1311" x2="1430"><stop offset="0" stop-color="#002eff"/><stop offset=".042" stop-color="#022dff"/><stop offset=".1345" stop-color="#1329ff"/><stop offset=".5042" stop-color="#5e18ff"/><stop offset=".7395" stop-color="#940cff"/><stop offset="1" stop-color="#d700ff"/></linearGradient><linearGradient id="i120" gradientUnits="userSpaceOnUse" x1="1311" x2="1424"><stop offset="0" stop-color="#002bff"/><stop offset=".0885" stop-color="#0b28ff"/><stop offset=".4779" stop-color="#5418ff"/><stop offset=".6549" stop-color="#790fff"/><stop offset=".9381" stop-color="#ba00ff"/><stop offset="1" stop-color="#ca00ff"/></linearGradient><linearGradient id="i121" gradientUnits="userSpaceOnUse" x1="1310" x2="1417"><stop offset="0" stop-color="#0029ff"/><stop offset=".0374" stop-color="#0228ff"/><stop offset=".1308" stop-color="#1124ff"/><stop offset=".4393" stop-color="#4718ff"/><stop offset=".8037" stop-color="#8f07ff"/><stop offset="1" stop-color="#bb00ff"/></linearGradient><linearGradient id="i122" gradientUnits="userSpaceOnUse" x1="1309" x2="1411"><stop offset="0" stop-color="#0027ff"/><stop offset=".0392" stop-color="#0225ff"/><stop offset=".4706" stop-color="#4815ff"/><stop offset="1" stop-color="#ae00ff"/></linearGradient><linearGradient id="i123" gradientUnits="userSpaceOnUse" x1="1308" x2="1405"><stop offset="0" stop-color="#0024ff"/><stop offset=".0515" stop-color="#0322ff"/><stop offset=".5052" stop-color="#4912ff"/><stop offset="1" stop-color="#a200ff"/></linearGradient><linearGradient id="i124" gradientUnits="userSpaceOnUse" x1="1307" x2="1399"><stop offset="0" stop-color="#0022ff"/><stop offset=".0326" stop-color="#0021ff"/><stop offset=".413" stop-color="#3614ff"/><stop offset="1" stop-color="#9700ff"/></linearGradient><linearGradient id="i125" gradientUnits="userSpaceOnUse" x1="1306" x2="1393"><stop offset="0" stop-color="#001fff"/><stop offset=".0345" stop-color="#001eff"/><stop offset=".3908" stop-color="#2f13ff"/><stop offset=".9195" stop-color="#7f00ff"/><stop offset="1" stop-color="#8c00ff"/></linearGradient><linearGradient id="i126" gradientUnits="userSpaceOnUse" x1="1305" x2="1386"><stop offset="0" stop-color="#001dff"/><stop offset=".037" stop-color="#001cff"/><stop offset=".4074" stop-color="#2d11ff"/><stop offset="1" stop-color="#7f00ff"/></linearGradient><linearGradient id="i127" gradientUnits="userSpaceOnUse" x1="1304" x2="1380"><stop offset="0" stop-color="#001bff"/><stop offset=".0395" stop-color="#001aff"/><stop offset=".4211" stop-color="#2b0fff"/><stop offset="1" stop-color="#7500ff"/></linearGradient><linearGradient id="i128" gradientUnits="userSpaceOnUse" x1="1303" x2="1374"><stop offset="0" stop-color="#0019ff"/><stop offset=".0423" stop-color="#0018ff"/><stop offset=".4366" stop-color="#290eff"/><stop offset="1" stop-color="#6b00ff"/></linearGradient><linearGradient id="i129" gradientUnits="userSpaceOnUse" x1="1302" x2="1368"><stop offset="0" stop-color="#0017ff"/><stop offset=".0455" stop-color="#0016ff"/><stop offset=".3636" stop-color="#1e0eff"/><stop offset="1" stop-color="#6100ff"/></linearGradient><linearGradient id="i130" gradientUnits="userSpaceOnUse" x1="1301" x2="1361"><stop offset="0" stop-color="#0015ff"/><stop offset=".0667" stop-color="#0113ff"/><stop offset=".2667" stop-color="#120fff"/><stop offset="1" stop-color="#5700ff"/></linearGradient><linearGradient id="i131" gradientUnits="userSpaceOnUse" x1="1300" x2="1355"><stop offset="0" stop-color="#0012ff"/><stop offset=".0727" stop-color="#0111ff"/><stop offset=".2545" stop-color="#0f0dff"/><stop offset="1" stop-color="#4e00ff"/></linearGradient><linearGradient id="i132" gradientUnits="userSpaceOnUse" x1="1299" x2="1349"><stop offset="0" stop-color="#0010ff"/><stop offset=".14" stop-color="#050eff"/><stop offset="1" stop-color="#4500ff"/></linearGradient><linearGradient id="i133" gradientUnits="userSpaceOnUse" x1="1298" x2="1343"><stop offset="0" stop-color="#000eff"/><stop offset=".0667" stop-color="#000dff"/><stop offset=".2222" stop-color="#090bff"/><stop offset="1" stop-color="#3d00ff"/></linearGradient><linearGradient id="i134" gradientUnits="userSpaceOnUse" x1="1297" x2="1337"><stop offset="0" stop-color="#000cff"/><stop offset=".125" stop-color="#020bff"/><stop offset="1" stop-color="#3400ff"/></linearGradient><linearGradient id="i135" gradientUnits="userSpaceOnUse" x1="1296" x2="1330"><stop offset="0" stop-color="#000aff"/><stop offset=".1471" stop-color="#0209ff"/><stop offset="1" stop-color="#2b00ff"/></linearGradient><linearGradient id="i136" gradientUnits="userSpaceOnUse" x1="1295" x2="1324"><stop offset="0" stop-color="#0008ff"/><stop offset=".1724" stop-color="#0207ff"/><stop offset="1" stop-color="#2400ff"/></linearGradient><linearGradient id="i137" gradientUnits="userSpaceOnUse" x1="1294" x2="1318"><stop offset="0" stop-color="#0006ff"/><stop offset=".2083" stop-color="#0205ff"/><stop offset="1" stop-color="#1c00ff"/></linearGradient><linearGradient id="i138" gradientUnits="userSpaceOnUse" x1="1293" x2="1312"><stop offset="0" stop-color="#0005ff"/><stop offset=".3158" stop-color="#0302ff"/><stop offset="1" stop-color="#1500ff"/></linearGradient><linearGradient id="i139" gradientUnits="userSpaceOnUse" x1="1292" x2="1305"><stop offset="0" stop-color="#0003ff"/><stop offset=".2308" stop-color="#0002ff"/><stop offset="1" stop-color="#0d00ff"/></linearGradient><linearGradient id="i140" gradientUnits="userSpaceOnUse" x1="1292" x2="1299"><stop offset="0" stop-color="#0001ff"/><stop offset="1" stop-color="#0600ff"/></linearGradient>
<clipPath id="cl"><polygon points="1315.98,785.72 1315.89,785.72 1315.71,785.8 1315.54,785.8 1315.27,785.87 1315,785.87 1314.65,785.87 1314.2,785.87 1313.58,785.64 1313.45,785.57 1313.28,785.48 1313.06,785.36 1312.84,785.23 1312.61,785.1 1312.38,784.95 1312.16,784.8 1311.91,784.63 1311.65,784.45 1311.36,784.24 1311.05,784.02 1310.71,783.77 1310.36,783.51 1309.98,783.22 1309.59,782.92 1309.19,782.6 1308.77,782.26 1308.33,781.91 1307.87,781.53 1307.37,781.14 1306.85,780.73 1306.3,780.31 1305.73,779.86 1305.11,779.39 1304.44,778.88 1303.73,778.34 1302.97,777.77 1302.17,777.17 1301.33,776.53 1300.45,775.86 1299.54,775.16 1298.59,774.44 1297.61,773.68 1296.57,772.86 1295.48,771.97 1294.34,771.03 1293.15,770.03 1291.91,768.97 1290.62,767.81 1289.27,766.54 1287.89,765.21 1286.47,763.84 1285,762.34 1283.42,760.62 1281.73,758.62 1279.91,756.36 1278,753.9 1275.98,751.19 1273.85,748.15 1271.61,744.72 1269.27,740.98 1266.83,736.96 1264.27,732.57 1261.58,727.68 1258.75,722.2 1255.78,716.19 1252.68,709.71 1249.44,702.68 1246.06,694.99 1242.51,686.56 1238.75,677.42 1234.79,667.65 1230.71,657.17 1226.57,645.9 1222.46,633.76 1218.34,620.71 1214.17,606.81 1209.99,592.11 1205.85,576.67 1201.78,560.53 1197.72,543.52 1193.64,525.58 1189.64,507.02 1185.84,488.11 1182.35,469.14 1179.11,449.9 1176.03,430.2 1173.22,410.35 1170.77,390.69 1168.78,371.53 1167.19,352.73 1165.94,334.08 1165.1,315.78 1164.76,298.07 1164.96,281.15 1165.71,264.87 1166.96,249.09 1168.72,234.04 1171,219.95 1173.83,207.07 1177.27,195.31 1181.31,184.51 1185.84,174.79 1190.78,166.27 1196.02,159.08 1201.64,153.34 1207.72,148.98 1214.13,145.79 1220.74,143.58 1227.43,142.15 1234.24,141.72 1241.27,142.4 1248.44,143.89 1255.65,145.88 1262.83,148.06 1270.02,150.53 1277.26,153.5 1284.51,156.82 1291.7,160.31 1298.77,163.82 1305.7,167.36 1312.53,171.03 1319.3,174.82 1326,178.72 1332.66,182.69 1339.27,186.74 1345.8,190.9 1352.29,195.14 1358.76,199.47 1365.22,203.89 1371.68,208.39 1378.12,212.98 1384.54,217.65 1390.95,222.39 1397.34,227.18 1403.72,232.03 1410.08,236.96 1416.43,241.94 1422.77,246.97 1429.11,252.03 1435.45,257.13 1441.78,262.29 1448.11,267.48 1454.45,272.71 1460.79,277.96 1467.14,283.25 1473.49,288.57 1479.85,293.93 1486.21,299.3 1492.55,304.68 1498.88,310.07 1505.21,315.49 1511.53,320.92 1517.84,326.35 1524.14,331.78 1530.44,337.2 1536.75,342.63 1543.04,348.06 1549.31,353.48 1555.55,358.88 1561.76,364.26 1567.95,369.65 1574.12,375.01 1580.25,380.36 1586.34,385.66 1592.4,390.94 1598.42,396.2 1604.41,401.43 1610.35,406.62 1616.24,411.76 1622.08,416.85 1627.88,421.91 1633.62,426.92 1639.3,431.87 1644.9,436.76 1650.44,441.58 1655.93,446.34 1661.34,451.04 1666.66,455.67 1671.87,460.21 1677,464.68 1682.03,469.09 1686.97,473.41 1691.78,477.63 1696.45,481.72 1700.98,485.66 1705.36,489.49 1709.62,493.2 1713.78,496.82 1717.84,500.35 1721.82,503.82 1725.7,507.21 1729.48,510.5 1733.13,513.68 1736.65,516.74 1740.02,519.66 1743.26,522.46 1746.38,525.16 1749.38,527.75 1752.26,530.25 1755.03,532.66 1757.67,534.97 1760.2,537.19 1762.63,539.31 1764.95,541.35 1767.17,543.3 1769.28,545.15 1771.29,546.91 1773.22,548.59 1775.07,550.21 1776.94,551.83 1778.83,553.47 1780.59,554.99 1782.08,556.27 1783.14,557.19 1789.62,562.86 1795.03,567.6 1799.47,571.48 1803.02,574.51 1805.68,576.84 1807.72,578.62 1809.23,579.95 1810.21,580.8 1811,581.5 1811.62,582.04 1812.25,582.59 1812.78,583.05 1813.13,583.36 1813.31,583.52 1813.4,583.59"/></clipPath>
<clipPath id="ct"><polygon points="1729.37,533.36 1427.69,323.7 1294.6,743.01"/></clipPath>
<filter id="vb" x="-2%" y="-2%" width="104%" height="104%"><feGaussianBlur stdDeviation="0 1.1"/></filter>
</defs>
<g clip-path="url(#cl)"><g filter="url(#vb)"><rect x="1221" y="140" width="26" height="3.6" fill="url(#o0)"/><rect x="1211" y="143" width="48" height="3.6" fill="url(#o1)"/><rect x="1205" y="146" width="63" height="3.6" fill="url(#o2)"/><rect x="1201" y="149" width="75" height="3.6" fill="url(#o3)"/><rect x="1198" y="152" width="85" height="3.6" fill="url(#o4)"/><rect x="1195" y="155" width="94" height="3.6" fill="url(#o5)"/><rect x="1192" y="158" width="104" height="3.6" fill="url(#o6)"/><rect x="1190" y="161" width="112" height="3.6" fill="url(#o7)"/><rect x="1188" y="164" width="119" height="3.6" fill="url(#o8)"/><rect x="1186" y="167" width="127" height="3.6" fill="url(#o9)"/><rect x="1184" y="170" width="135" height="3.6" fill="url(#o10)"/><rect x="1183" y="173" width="141" height="3.6" fill="url(#o11)"/><rect x="1181" y="176" width="148" height="3.6" fill="url(#o12)"/><rect x="1180" y="179" width="154" height="3.6" fill="url(#o13)"/><rect x="1179" y="182" width="160" height="3.6" fill="url(#o14)"/><rect x="1177" y="185" width="167" height="3.6" fill="url(#o15)"/><rect x="1176" y="188" width="172" height="3.6" fill="url(#o16)"/><rect x="1175" y="191" width="178" height="3.6" fill="url(#o17)"/><rect x="1174" y="194" width="184" height="3.6" fill="url(#o18)"/><rect x="1173" y="197" width="189" height="3.6" fill="url(#o19)"/><rect x="1173" y="200" width="193" height="3.6" fill="url(#o20)"/><rect x="1172" y="203" width="199" height="3.6" fill="url(#o21)"/><rect x="1171" y="206" width="204" height="3.6" fill="url(#o22)"/><rect x="1170" y="209" width="209" height="3.6" fill="url(#o23)"/><rect x="1170" y="212" width="213" height="3.6" fill="url(#o24)"/><rect x="1169" y="215" width="219" height="3.6" fill="url(#o25)"/><rect x="1168" y="218" width="224" height="3.6" fill="url(#o26)"/><rect x="1168" y="221" width="228" height="3.6" fill="url(#o27)"/><rect x="1167" y="224" width="233" height="3.6" fill="url(#o28)"/><rect x="1167" y="227" width="237" height="3.6" fill="url(#o29)"/><rect x="1166" y="230" width="241" height="3.6" fill="url(#o30)"/><rect x="1166" y="233" width="245" height="3.6" fill="url(#o31)"/><rect x="1166" y="236" width="249" height="3.6" fill="url(#o32)"/><rect x="1165" y="239" width="254" height="3.6" fill="url(#o33)"/><rect x="1165" y="242" width="258" height="3.6" fill="url(#o34)"/><rect x="1165" y="245" width="262" height="3.6" fill="url(#o35)"/><rect x="1164" y="248" width="266" height="3.6" fill="url(#o36)"/><rect x="1164" y="251" width="270" height="3.6" fill="url(#o37)"/><rect x="1164" y="254" width="274" height="3.6" fill="url(#o38)"/><rect x="1164" y="257" width="277" height="3.6" fill="url(#o39)"/><rect x="1163" y="260" width="282" height="3.6" fill="url(#o40)"/><rect x="1163" y="263" width="286" height="3.6" fill="url(#o41)"/><rect x="1163" y="266" width="289" height="3.6" fill="url(#o42)"/><rect x="1163" y="269" width="293" height="3.6" fill="url(#o43)"/><rect x="1163" y="272" width="297" height="3.6" fill="url(#o44)"/><rect x="1163" y="275" width="300" height="3.6" fill="url(#o45)"/><rect x="1162" y="278" width="305" height="3.6" fill="url(#o46)"/><rect x="1162" y="281" width="309" height="3.6" fill="url(#o47)"/><rect x="1162" y="284" width="312" height="3.6" fill="url(#o48)"/><rect x="1162" y="287" width="316" height="3.6" fill="url(#o49)"/><rect x="1162" y="290" width="319" height="3.6" fill="url(#o50)"/><rect x="1162" y="293" width="323" height="3.6" fill="url(#o51)"/><rect x="1162" y="296" width="326" height="3.6" fill="url(#o52)"/><rect x="1162" y="299" width="330" height="3.6" fill="url(#o53)"/><rect x="1162" y="302" width="333" height="3.6" fill="url(#o54)"/><rect x="1162" y="305" width="337" height="3.6" fill="url(#o55)"/><rect x="1162" y="308" width="340" height="3.6" fill="url(#o56)"/><rect x="1163" y="311" width="343" height="3.6" fill="url(#o57)"/><rect x="1163" y="314" width="346" height="3.6" fill="url(#o58)"/><rect x="1163" y="317" width="350" height="3.6" fill="url(#o59)"/><rect x="1163" y="320" width="353" height="3.6" fill="url(#o60)"/><rect x="1163" y="323" width="357" height="3.6" fill="url(#o61)"/><rect x="1163" y="326" width="360" height="3.6" fill="url(#o62)"/><rect x="1163" y="329" width="364" height="3.6" fill="url(#o63)"/><rect x="1163" y="332" width="367" height="3.6" fill="url(#o64)"/><rect x="1163" y="335" width="371" height="3.6" fill="url(#o65)"/><rect x="1164" y="338" width="373" height="3.6" fill="url(#o66)"/><rect x="1164" y="341" width="377" height="3.6" fill="url(#o67)"/><rect x="1164" y="344" width="380" height="3.6" fill="url(#o68)"/><rect x="1164" y="347" width="384" height="3.6" fill="url(#o69)"/><rect x="1165" y="350" width="386" height="3.6" fill="url(#o70)"/><rect x="1165" y="353" width="390" height="3.6" fill="url(#o71)"/><rect x="1165" y="356" width="393" height="3.6" fill="url(#o72)"/><rect x="1165" y="359" width="397" height="3.6" fill="url(#o73)"/><rect x="1165" y="362" width="400" height="3.6" fill="url(#o74)"/><rect x="1166" y="365" width="403" height="3.6" fill="url(#o75)"/><rect x="1166" y="368" width="406" height="3.6" fill="url(#o76)"/><rect x="1166" y="371" width="409" height="3.6" fill="url(#o77)"/><rect x="1167" y="374" width="412" height="3.6" fill="url(#o78)"/><rect x="1167" y="377" width="415" height="3.6" fill="url(#o79)"/><rect x="1167" y="380" width="419" height="3.6" fill="url(#o80)"/><rect x="1167" y="383" width="422" height="3.6" fill="url(#o81)"/><rect x="1168" y="386" width="425" height="3.6" fill="url(#o82)"/><rect x="1168" y="389" width="428" height="3.6" fill="url(#o83)"/><rect x="1168" y="392" width="432" height="3.6" fill="url(#o84)"/><rect x="1169" y="395" width="434" height="3.6" fill="url(#o85)"/><rect x="1169" y="398" width="437" height="3.6" fill="url(#o86)"/><rect x="1170" y="401" width="440" height="3.6" fill="url(#o87)"/><rect x="1170" y="404" width="443" height="3.6" fill="url(#o88)"/><rect x="1170" y="407" width="447" height="3.6" fill="url(#o89)"/><rect x="1171" y="410" width="449" height="3.6" fill="url(#o90)"/><rect x="1171" y="413" width="453" height="3.6" fill="url(#o91)"/><rect x="1172" y="416" width="455" height="3.6" fill="url(#o92)"/><rect x="1172" y="419" width="458" height="3.6" fill="url(#o93)"/><rect x="1172" y="422" width="462" height="3.6" fill="url(#o94)"/><rect x="1173" y="425" width="464" height="3.6" fill="url(#o95)"/><rect x="1173" y="428" width="468" height="3.6" fill="url(#o96)"/><rect x="1174" y="431" width="470" height="3.6" fill="url(#o97)"/><rect x="1174" y="434" width="474" height="3.6" fill="url(#o98)"/><rect x="1175" y="437" width="476" height="3.6" fill="url(#o99)"/><rect x="1175" y="440" width="480" height="3.6" fill="url(#o100)"/><rect x="1176" y="443" width="482" height="3.6" fill="url(#o101)"/><rect x="1176" y="446" width="485" height="3.6" fill="url(#o102)"/><rect x="1176" y="449" width="489" height="3.6" fill="url(#o103)"/><rect x="1177" y="452" width="491" height="3.6" fill="url(#o104)"/><rect x="1177" y="455" width="495" height="3.6" fill="url(#o105)"/><rect x="1178" y="458" width="497" height="3.6" fill="url(#o106)"/><rect x="1178" y="461" width="501" height="3.6" fill="url(#o107)"/><rect x="1179" y="464" width="503" height="3.6" fill="url(#o108)"/><rect x="1179" y="467" width="507" height="3.6" fill="url(#o109)"/><rect x="1180" y="470" width="509" height="3.6" fill="url(#o110)"/><rect x="1181" y="473" width="511" height="3.6" fill="url(#o111)"/><rect x="1181" y="476" width="515" height="3.6" fill="url(#o112)"/><rect x="1182" y="479" width="517" height="3.6" fill="url(#o113)"/><rect x="1182" y="482" width="521" height="3.6" fill="url(#o114)"/><rect x="1183" y="485" width="523" height="3.6" fill="url(#o115)"/><rect x="1183" y="488" width="527" height="3.6" fill="url(#o116)"/><rect x="1184" y="491" width="529" height="3.6" fill="url(#o117)"/><rect x="1185" y="494" width="531" height="3.6" fill="url(#o118)"/><rect x="1185" y="497" width="535" height="3.6" fill="url(#o119)"/><rect x="1186" y="500" width="537" height="3.6" fill="url(#o120)"/><rect x="1186" y="503" width="541" height="3.6" fill="url(#o121)"/><rect x="1187" y="506" width="543" height="3.6" fill="url(#o122)"/><rect x="1188" y="509" width="546" height="3.6" fill="url(#o123)"/><rect x="1188" y="512" width="549" height="3.6" fill="url(#o124)"/><rect x="1189" y="515" width="552" height="3.6" fill="url(#o125)"/><rect x="1190" y="518" width="554" height="3.6" fill="url(#o126)"/><rect x="1190" y="521" width="558" height="3.6" fill="url(#o127)"/><rect x="1191" y="524" width="560" height="3.6" fill="url(#o128)"/><rect x="1191" y="527" width="563" height="3.6" fill="url(#o129)"/><rect x="1192" y="530" width="566" height="3.6" fill="url(#o130)"/><rect x="1193" y="533" width="568" height="3.6" fill="url(#o131)"/><rect x="1194" y="536" width="571" height="3.6" fill="url(#o132)"/><rect x="1194" y="539" width="574" height="3.6" fill="url(#o133)"/><rect x="1195" y="542" width="577" height="3.6" fill="url(#o134)"/><rect x="1196" y="545" width="579" height="3.6" fill="url(#o135)"/><rect x="1196" y="548" width="582" height="3.6" fill="url(#o136)"/><rect x="1197" y="551" width="585" height="3.6" fill="url(#o137)"/><rect x="1198" y="554" width="587" height="3.6" fill="url(#o138)"/><rect x="1198" y="557" width="591" height="3.6" fill="url(#o139)"/><rect x="1199" y="560" width="593" height="3.6" fill="url(#o140)"/><rect x="1200" y="563" width="596" height="3.6" fill="url(#o141)"/><rect x="1201" y="566" width="598" height="3.6" fill="url(#o142)"/><rect x="1201" y="569" width="602" height="3.6" fill="url(#o143)"/><rect x="1202" y="572" width="604" height="3.6" fill="url(#o144)"/><rect x="1203" y="575" width="607" height="3.6" fill="url(#o145)"/><rect x="1204" y="578" width="609" height="3.6" fill="url(#o146)"/><rect x="1205" y="581" width="610" height="3.6" fill="url(#o147)"/><rect x="1205" y="584" width="610" height="3.6" fill="url(#o148)"/><rect x="1206" y="587" width="602" height="3.6" fill="url(#o149)"/><rect x="1207" y="590" width="593" height="3.6" fill="url(#o150)"/><rect x="1208" y="593" width="585" height="3.6" fill="url(#o151)"/><rect x="1209" y="596" width="576" height="3.6" fill="url(#o152)"/><rect x="1209" y="599" width="569" height="3.6" fill="url(#o153)"/><rect x="1210" y="602" width="561" height="3.6" fill="url(#o154)"/><rect x="1211" y="605" width="552" height="3.6" fill="url(#o155)"/><rect x="1212" y="608" width="544" height="3.6" fill="url(#o156)"/><rect x="1213" y="611" width="535" height="3.6" fill="url(#o157)"/><rect x="1214" y="614" width="527" height="3.6" fill="url(#o158)"/><rect x="1215" y="617" width="519" height="3.6" fill="url(#o159)"/><rect x="1216" y="620" width="510" height="3.6" fill="url(#o160)"/><rect x="1217" y="623" width="502" height="3.6" fill="url(#o161)"/><rect x="1218" y="626" width="494" height="3.6" fill="url(#o162)"/><rect x="1218" y="629" width="486" height="3.6" fill="url(#o163)"/><rect x="1219" y="632" width="478" height="3.6" fill="url(#o164)"/><rect x="1220" y="635" width="469" height="3.6" fill="url(#o165)"/><rect x="1221" y="638" width="461" height="3.6" fill="url(#o166)"/><rect x="1222" y="641" width="453" height="3.6" fill="url(#o167)"/><rect x="1223" y="644" width="444" height="3.6" fill="url(#o168)"/><rect x="1224" y="647" width="436" height="3.6" fill="url(#o169)"/><rect x="1226" y="650" width="426" height="3.6" fill="url(#o170)"/><rect x="1227" y="653" width="418" height="3.6" fill="url(#o171)"/><rect x="1228" y="656" width="410" height="3.6" fill="url(#o172)"/><rect x="1229" y="659" width="401" height="3.6" fill="url(#o173)"/><rect x="1230" y="662" width="393" height="3.6" fill="url(#o174)"/><rect x="1231" y="665" width="385" height="3.6" fill="url(#o175)"/><rect x="1232" y="668" width="376" height="3.6" fill="url(#o176)"/><rect x="1234" y="671" width="367" height="3.6" fill="url(#o177)"/><rect x="1235" y="674" width="358" height="3.6" fill="url(#o178)"/><rect x="1236" y="677" width="350" height="3.6" fill="url(#o179)"/><rect x="1237" y="680" width="342" height="3.6" fill="url(#o180)"/><rect x="1239" y="683" width="332" height="3.6" fill="url(#o181)"/><rect x="1240" y="686" width="324" height="3.6" fill="url(#o182)"/><rect x="1241" y="689" width="315" height="3.6" fill="url(#o183)"/><rect x="1242" y="692" width="307" height="3.6" fill="url(#o184)"/><rect x="1244" y="695" width="298" height="3.6" fill="url(#o185)"/><rect x="1245" y="698" width="289" height="3.6" fill="url(#o186)"/><rect x="1246" y="701" width="281" height="3.6" fill="url(#o187)"/><rect x="1248" y="704" width="272" height="3.6" fill="url(#o188)"/><rect x="1249" y="707" width="263" height="3.6" fill="url(#o189)"/><rect x="1250" y="710" width="255" height="3.6" fill="url(#o190)"/><rect x="1252" y="713" width="245" height="3.6" fill="url(#o191)"/><rect x="1253" y="716" width="237" height="3.6" fill="url(#o192)"/><rect x="1255" y="719" width="228" height="3.6" fill="url(#o193)"/><rect x="1256" y="722" width="219" height="3.6" fill="url(#o194)"/><rect x="1258" y="725" width="210" height="3.6" fill="url(#o195)"/><rect x="1259" y="728" width="202" height="3.6" fill="url(#o196)"/><rect x="1261" y="731" width="192" height="3.6" fill="url(#o197)"/><rect x="1263" y="734" width="183" height="3.6" fill="url(#o198)"/><rect x="1264" y="737" width="174" height="3.6" fill="url(#o199)"/><rect x="1266" y="740" width="165" height="3.6" fill="url(#o200)"/><rect x="1268" y="743" width="156" height="3.6" fill="url(#o201)"/><rect x="1270" y="746" width="146" height="3.6" fill="url(#o202)"/><rect x="1272" y="749" width="137" height="3.6" fill="url(#o203)"/><rect x="1274" y="752" width="127" height="3.6" fill="url(#o204)"/><rect x="1276" y="755" width="118" height="3.6" fill="url(#o205)"/><rect x="1279" y="758" width="108" height="3.6" fill="url(#o206)"/><rect x="1281" y="761" width="98" height="3.6" fill="url(#o207)"/><rect x="1284" y="764" width="88" height="3.6" fill="url(#o208)"/><rect x="1287" y="767" width="78" height="3.6" fill="url(#o209)"/><rect x="1291" y="770" width="66" height="3.6" fill="url(#o210)"/><rect x="1294" y="773" width="56" height="3.6" fill="url(#o211)"/><rect x="1298" y="776" width="44" height="3.6" fill="url(#o212)"/><rect x="1302" y="779" width="33" height="3.6" fill="url(#o213)"/><rect x="1306" y="782" width="22" height="3.6" fill="url(#o214)"/><rect x="1310" y="785" width="10" height="2.6" fill="url(#o215)"/></g></g>
<g clip-path="url(#ct)"><g filter="url(#vb)"><rect x="1425" y="322" width="7" height="3.6" fill="url(#i0)"/><rect x="1424" y="325" width="12" height="3.6" fill="url(#i1)"/><rect x="1423" y="328" width="18" height="3.6" fill="url(#i2)"/><rect x="1422" y="331" width="23" height="3.6" fill="url(#i3)"/><rect x="1421" y="334" width="28" height="3.6" fill="url(#i4)"/><rect x="1420" y="337" width="34" height="3.6" fill="url(#i5)"/><rect x="1419" y="340" width="39" height="3.6" fill="url(#i6)"/><rect x="1418" y="343" width="44" height="3.6" fill="url(#i7)"/><rect x="1417" y="346" width="50" height="3.6" fill="url(#i8)"/><rect x="1416" y="349" width="55" height="3.6" fill="url(#i9)"/><rect x="1415" y="352" width="60" height="3.6" fill="url(#i10)"/><rect x="1414" y="355" width="66" height="3.6" fill="url(#i11)"/><rect x="1413" y="358" width="71" height="3.6" fill="url(#i12)"/><rect x="1412" y="361" width="76" height="3.6" fill="url(#i13)"/><rect x="1411" y="364" width="81" height="3.6" fill="url(#i14)"/><rect x="1410" y="367" width="87" height="3.6" fill="url(#i15)"/><rect x="1410" y="370" width="91" height="3.6" fill="url(#i16)"/><rect x="1409" y="373" width="96" height="3.6" fill="url(#i17)"/><rect x="1408" y="376" width="102" height="3.6" fill="url(#i18)"/><rect x="1407" y="379" width="107" height="3.6" fill="url(#i19)"/><rect x="1406" y="382" width="112" height="3.6" fill="url(#i20)"/><rect x="1405" y="385" width="118" height="3.6" fill="url(#i21)"/><rect x="1404" y="388" width="123" height="3.6" fill="url(#i22)"/><rect x="1403" y="391" width="128" height="3.6" fill="url(#i23)"/><rect x="1402" y="394" width="134" height="3.6" fill="url(#i24)"/><rect x="1401" y="397" width="139" height="3.6" fill="url(#i25)"/><rect x="1400" y="400" width="144" height="3.6" fill="url(#i26)"/><rect x="1399" y="403" width="150" height="3.6" fill="url(#i27)"/><rect x="1398" y="406" width="155" height="3.6" fill="url(#i28)"/><rect x="1397" y="409" width="160" height="3.6" fill="url(#i29)"/><rect x="1396" y="412" width="166" height="3.6" fill="url(#i30)"/><rect x="1395" y="415" width="171" height="3.6" fill="url(#i31)"/><rect x="1394" y="418" width="176" height="3.6" fill="url(#i32)"/><rect x="1393" y="421" width="182" height="3.6" fill="url(#i33)"/><rect x="1392" y="424" width="187" height="3.6" fill="url(#i34)"/><rect x="1391" y="427" width="192" height="3.6" fill="url(#i35)"/><rect x="1390" y="430" width="197" height="3.6" fill="url(#i36)"/><rect x="1390" y="433" width="202" height="3.6" fill="url(#i37)"/><rect x="1389" y="436" width="207" height="3.6" fill="url(#i38)"/><rect x="1388" y="439" width="212" height="3.6" fill="url(#i39)"/><rect x="1387" y="442" width="218" height="3.6" fill="url(#i40)"/><rect x="1386" y="445" width="223" height="3.6" fill="url(#i41)"/><rect x="1385" y="448" width="228" height="3.6" fill="url(#i42)"/><rect x="1384" y="451" width="234" height="3.6" fill="url(#i43)"/><rect x="1383" y="454" width="239" height="3.6" fill="url(#i44)"/><rect x="1382" y="457" width="244" height="3.6" fill="url(#i45)"/><rect x="1381" y="460" width="250" height="3.6" fill="url(#i46)"/><rect x="1380" y="463" width="255" height="3.6" fill="url(#i47)"/><rect x="1379" y="466" width="260" height="3.6" fill="url(#i48)"/><rect x="1378" y="469" width="266" height="3.6" fill="url(#i49)"/><rect x="1377" y="472" width="271" height="3.6" fill="url(#i50)"/><rect x="1376" y="475" width="276" height="3.6" fill="url(#i51)"/><rect x="1375" y="478" width="282" height="3.6" fill="url(#i52)"/><rect x="1374" y="481" width="287" height="3.6" fill="url(#i53)"/><rect x="1373" y="484" width="292" height="3.6" fill="url(#i54)"/><rect x="1372" y="487" width="297" height="3.6" fill="url(#i55)"/><rect x="1371" y="490" width="303" height="3.6" fill="url(#i56)"/><rect x="1370" y="493" width="308" height="3.6" fill="url(#i57)"/><rect x="1370" y="496" width="312" height="3.6" fill="url(#i58)"/><rect x="1369" y="499" width="318" height="3.6" fill="url(#i59)"/><rect x="1368" y="502" width="323" height="3.6" fill="url(#i60)"/><rect x="1367" y="505" width="328" height="3.6" fill="url(#i61)"/><rect x="1366" y="508" width="334" height="3.6" fill="url(#i62)"/><rect x="1365" y="511" width="339" height="3.6" fill="url(#i63)"/><rect x="1364" y="514" width="344" height="3.6" fill="url(#i64)"/><rect x="1363" y="517" width="350" height="3.6" fill="url(#i65)"/><rect x="1362" y="520" width="355" height="3.6" fill="url(#i66)"/><rect x="1361" y="523" width="360" height="3.6" fill="url(#i67)"/><rect x="1360" y="526" width="366" height="3.6" fill="url(#i68)"/><rect x="1359" y="529" width="371" height="3.6" fill="url(#i69)"/><rect x="1358" y="532" width="374" height="3.6" fill="url(#i70)"/><rect x="1357" y="535" width="371" height="3.6" fill="url(#i71)"/><rect x="1356" y="538" width="366" height="3.6" fill="url(#i72)"/><rect x="1355" y="541" width="361" height="3.6" fill="url(#i73)"/><rect x="1354" y="544" width="356" height="3.6" fill="url(#i74)"/><rect x="1353" y="547" width="351" height="3.6" fill="url(#i75)"/><rect x="1352" y="550" width="345" height="3.6" fill="url(#i76)"/><rect x="1351" y="553" width="340" height="3.6" fill="url(#i77)"/><rect x="1351" y="556" width="334" height="3.6" fill="url(#i78)"/><rect x="1350" y="559" width="329" height="3.6" fill="url(#i79)"/><rect x="1349" y="562" width="323" height="3.6" fill="url(#i80)"/><rect x="1348" y="565" width="318" height="3.6" fill="url(#i81)"/><rect x="1347" y="568" width="313" height="3.6" fill="url(#i82)"/><rect x="1346" y="571" width="308" height="3.6" fill="url(#i83)"/><rect x="1345" y="574" width="303" height="3.6" fill="url(#i84)"/><rect x="1344" y="577" width="297" height="3.6" fill="url(#i85)"/><rect x="1343" y="580" width="292" height="3.6" fill="url(#i86)"/><rect x="1342" y="583" width="287" height="3.6" fill="url(#i87)"/><rect x="1341" y="586" width="282" height="3.6" fill="url(#i88)"/><rect x="1340" y="589" width="276" height="3.6" fill="url(#i89)"/><rect x="1339" y="592" width="271" height="3.6" fill="url(#i90)"/><rect x="1338" y="595" width="266" height="3.6" fill="url(#i91)"/><rect x="1337" y="598" width="261" height="3.6" fill="url(#i92)"/><rect x="1336" y="601" width="256" height="3.6" fill="url(#i93)"/><rect x="1335" y="604" width="250" height="3.6" fill="url(#i94)"/><rect x="1334" y="607" width="245" height="3.6" fill="url(#i95)"/><rect x="1333" y="610" width="240" height="3.6" fill="url(#i96)"/><rect x="1332" y="613" width="235" height="3.6" fill="url(#i97)"/><rect x="1331" y="616" width="229" height="3.6" fill="url(#i98)"/><rect x="1331" y="619" width="223" height="3.6" fill="url(#i99)"/><rect x="1330" y="622" width="218" height="3.6" fill="url(#i100)"/><rect x="1329" y="625" width="213" height="3.6" fill="url(#i101)"/><rect x="1328" y="628" width="208" height="3.6" fill="url(#i102)"/><rect x="1327" y="631" width="202" height="3.6" fill="url(#i103)"/><rect x="1326" y="634" width="197" height="3.6" fill="url(#i104)"/><rect x="1325" y="637" width="192" height="3.6" fill="url(#i105)"/><rect x="1324" y="640" width="187" height="3.6" fill="url(#i106)"/><rect x="1323" y="643" width="181" height="3.6" fill="url(#i107)"/><rect x="1322" y="646" width="176" height="3.6" fill="url(#i108)"/><rect x="1321" y="649" width="171" height="3.6" fill="url(#i109)"/><rect x="1320" y="652" width="166" height="3.6" fill="url(#i110)"/><rect x="1319" y="655" width="161" height="3.6" fill="url(#i111)"/><rect x="1318" y="658" width="155" height="3.6" fill="url(#i112)"/><rect x="1317" y="661" width="150" height="3.6" fill="url(#i113)"/><rect x="1316" y="664" width="145" height="3.6" fill="url(#i114)"/><rect x="1315" y="667" width="140" height="3.6" fill="url(#i115)"/><rect x="1314" y="670" width="135" height="3.6" fill="url(#i116)"/><rect x="1313" y="673" width="129" height="3.6" fill="url(#i117)"/><rect x="1312" y="676" width="124" height="3.6" fill="url(#i118)"/><rect x="1311" y="679" width="119" height="3.6" fill="url(#i119)"/><rect x="1311" y="682" width="113" height="3.6" fill="url(#i120)"/><rect x="1310" y="685" width="107" height="3.6" fill="url(#i121)"/><rect x="1309" y="688" width="102" height="3.6" fill="url(#i122)"/><rect x="1308" y="691" width="97" height="3.6" fill="url(#i123)"/><rect x="1307" y="694" width="92" height="3.6" fill="url(#i124)"/><rect x="1306" y="697" width="87" height="3.6" fill="url(#i125)"/><rect x="1305" y="700" width="81" height="3.6" fill="url(#i126)"/><rect x="1304" y="703" width="76" height="3.6" fill="url(#i127)"/><rect x="1303" y="706" width="71" height="3.6" fill="url(#i128)"/><rect x="1302" y="709" width="66" height="3.6" fill="url(#i129)"/><rect x="1301" y="712" width="60" height="3.6" fill="url(#i130)"/><rect x="1300" y="715" width="55" height="3.6" fill="url(#i131)"/><rect x="1299" y="718" width="50" height="3.6" fill="url(#i132)"/><rect x="1298" y="721" width="45" height="3.6" fill="url(#i133)"/><rect x="1297" y="724" width="40" height="3.6" fill="url(#i134)"/><rect x="1296" y="727" width="34" height="3.6" fill="url(#i135)"/><rect x="1295" y="730" width="29" height="3.6" fill="url(#i136)"/><rect x="1294" y="733" width="24" height="3.6" fill="url(#i137)"/><rect x="1293" y="736" width="19" height="3.6" fill="url(#i138)"/><rect x="1292" y="739" width="13" height="3.6" fill="url(#i139)"/><rect x="1292" y="742" width="7" height="3.6" fill="url(#i140)"/></g></g>
<rect x="1161.5" y="137" width="746" height="2" fill="#8e8e8e"/>
<rect x="1905.5" y="137" width="2" height="653" fill="#8e8e8e"/>
<rect x="1161.5" y="137" width="2" height="653" fill="#bcbcbc"/>
<rect x="1161.5" y="788.2" width="746" height="1.8" fill="#bcbcbc"/>
<rect x="1161.5" y="790" width="2" height="6.8" fill="#e4e4e4"/>
<text x="1162" y="817.6" font-size="19" fill="#e2e2e2" text-anchor="middle" textLength="9.43" lengthAdjust="spacingAndGlyphs">0</text>
<rect x="1155.3" y="789" width="6.2" height="1.3" fill="#e8e8e8"/>
<text x="1154.6" y="797.2" font-size="19" fill="#e2e2e2" text-anchor="end" textLength="9.43" lengthAdjust="spacingAndGlyphs">0</text>
<rect x="1248.69" y="790" width="2" height="6.8" fill="#e4e4e4"/>
<text x="1249.19" y="817.6" font-size="19" fill="#e2e2e2" text-anchor="middle" textLength="23.5" lengthAdjust="spacingAndGlyphs">0,1</text>
<rect x="1155.3" y="711.52" width="6.2" height="1.3" fill="#e8e8e8"/>
<text x="1154.6" y="719.72" font-size="19" fill="#e2e2e2" text-anchor="end" textLength="23.5" lengthAdjust="spacingAndGlyphs">0,1</text>
<rect x="1337.38" y="790" width="2" height="6.8" fill="#e4e4e4"/>
<text x="1337.88" y="817.6" font-size="19" fill="#e2e2e2" text-anchor="middle" textLength="23.5" lengthAdjust="spacingAndGlyphs">0,2</text>
<rect x="1155.3" y="634.04" width="6.2" height="1.3" fill="#e8e8e8"/>
<text x="1154.6" y="642.24" font-size="19" fill="#e2e2e2" text-anchor="end" textLength="23.5" lengthAdjust="spacingAndGlyphs">0,2</text>
<rect x="1426.07" y="790" width="2" height="6.8" fill="#e4e4e4"/>
<text x="1426.57" y="817.6" font-size="19" fill="#e2e2e2" text-anchor="middle" textLength="23.5" lengthAdjust="spacingAndGlyphs">0,3</text>
<rect x="1155.3" y="556.56" width="6.2" height="1.3" fill="#e8e8e8"/>
<text x="1154.6" y="564.76" font-size="19" fill="#e2e2e2" text-anchor="end" textLength="23.5" lengthAdjust="spacingAndGlyphs">0,3</text>
<rect x="1514.76" y="790" width="2" height="6.8" fill="#e4e4e4"/>
<text x="1515.26" y="817.6" font-size="19" fill="#e2e2e2" text-anchor="middle" textLength="23.5" lengthAdjust="spacingAndGlyphs">0,4</text>
<rect x="1155.3" y="479.08" width="6.2" height="1.3" fill="#e8e8e8"/>
<text x="1154.6" y="487.28" font-size="19" fill="#e2e2e2" text-anchor="end" textLength="23.5" lengthAdjust="spacingAndGlyphs">0,4</text>
<rect x="1603.45" y="790" width="2" height="6.8" fill="#e4e4e4"/>
<text x="1603.95" y="817.6" font-size="19" fill="#e2e2e2" text-anchor="middle" textLength="23.5" lengthAdjust="spacingAndGlyphs">0,5</text>
<rect x="1155.3" y="401.6" width="6.2" height="1.3" fill="#e8e8e8"/>
<text x="1154.6" y="409.8" font-size="19" fill="#e2e2e2" text-anchor="end" textLength="23.5" lengthAdjust="spacingAndGlyphs">0,5</text>
<rect x="1692.14" y="790" width="2" height="6.8" fill="#e4e4e4"/>
<text x="1692.64" y="817.6" font-size="19" fill="#e2e2e2" text-anchor="middle" textLength="23.5" lengthAdjust="spacingAndGlyphs">0,6</text>
<rect x="1155.3" y="324.12" width="6.2" height="1.3" fill="#e8e8e8"/>
<text x="1154.6" y="332.32" font-size="19" fill="#e2e2e2" text-anchor="end" textLength="23.5" lengthAdjust="spacingAndGlyphs">0,6</text>
<rect x="1780.83" y="790" width="2" height="6.8" fill="#e4e4e4"/>
<text x="1781.33" y="817.6" font-size="19" fill="#e2e2e2" text-anchor="middle" textLength="23.5" lengthAdjust="spacingAndGlyphs">0,7</text>
<rect x="1155.3" y="246.64" width="6.2" height="1.3" fill="#e8e8e8"/>
<text x="1154.6" y="254.84" font-size="19" fill="#e2e2e2" text-anchor="end" textLength="23.5" lengthAdjust="spacingAndGlyphs">0,7</text>
<rect x="1869.52" y="790" width="2" height="6.8" fill="#e4e4e4"/>
<text x="1870.02" y="817.6" font-size="19" fill="#e2e2e2" text-anchor="middle" textLength="23.5" lengthAdjust="spacingAndGlyphs">0,8</text>
<rect x="1155.3" y="169.16" width="6.2" height="1.3" fill="#e8e8e8"/>
<text x="1154.6" y="177.36" font-size="19" fill="#e2e2e2" text-anchor="end" textLength="23.5" lengthAdjust="spacingAndGlyphs">0,8</text>
<text x="1519.4" y="132" font-size="19" fill="#e2e2e2" text-anchor="middle" textLength="86.28" lengthAdjust="spacingAndGlyphs">CIE 1931 xy</text>
<rect x="1487.3" y="524.2" width="15.8" height="17.6" fill="none" stroke="#fff" stroke-width="1.8"/>
<rect x="1546.4" y="523.6" width="15.8" height="17.6" fill="none" stroke="#fff" stroke-width="1.8"/>
<rect x="1600" y="523.6" width="15.8" height="17.6" fill="none" stroke="#fff" stroke-width="1.8"/>
<rect x="1656.1" y="523.6" width="15.8" height="17.6" fill="none" stroke="#fff" stroke-width="1.8"/>
<rect x="1720.7" y="523.8" width="15.8" height="17.6" fill="none" stroke="#fff" stroke-width="1.8"/>
<rect x="1428.3" y="482" width="15.8" height="17.6" fill="none" stroke="#fff" stroke-width="1.8"/>
<rect x="1426.6" y="441.1" width="15.8" height="17.6" fill="none" stroke="#fff" stroke-width="1.8"/>
<rect x="1423.2" y="400.6" width="15.8" height="17.6" fill="none" stroke="#fff" stroke-width="1.8"/>
<rect x="1421.5" y="360.9" width="15.8" height="17.6" fill="none" stroke="#fff" stroke-width="1.8"/>
<rect x="1418.6" y="315" width="15.8" height="17.6" fill="none" stroke="#fff" stroke-width="1.8"/>
<rect x="1401.3" y="567.1" width="15.8" height="17.6" fill="none" stroke="#fff" stroke-width="1.8"/>
<rect x="1372.6" y="607.6" width="15.8" height="17.6" fill="none" stroke="#fff" stroke-width="1.8"/>
<rect x="1345.1" y="648.1" width="15.8" height="17.6" fill="none" stroke="#fff" stroke-width="1.8"/>
<rect x="1316.9" y="688.2" width="15.8" height="17.6" fill="none" stroke="#fff" stroke-width="1.8"/>
<rect x="1285.2" y="733.7" width="15.8" height="17.6" fill="none" stroke="#fff" stroke-width="1.8"/>
<rect x="1415.9" y="525.2" width="15.8" height="17.6" fill="none" stroke="#fff" stroke-width="1.8"/>
<rect x="1400.3" y="525.2" width="15.8" height="17.6" fill="none" stroke="#fff" stroke-width="1.8"/>
<rect x="1384.7" y="525.2" width="15.8" height="17.6" fill="none" stroke="#fff" stroke-width="1.8"/>
<rect x="1369.1" y="525.2" width="15.8" height="17.6" fill="none" stroke="#fff" stroke-width="1.8"/>
<rect x="1353.5" y="525.2" width="15.8" height="17.6" fill="none" stroke="#fff" stroke-width="1.8"/>
<rect x="1432.5" y="551.5" width="15.8" height="17.6" fill="none" stroke="#fff" stroke-width="1.8"/>
<rect x="1434.1" y="579.3" width="15.8" height="17.6" fill="none" stroke="#fff" stroke-width="1.8"/>
<rect x="1434.1" y="604.2" width="15.8" height="17.6" fill="none" stroke="#fff" stroke-width="1.8"/>
<rect x="1435.9" y="632" width="15.8" height="17.6" fill="none" stroke="#fff" stroke-width="1.8"/>
<rect x="1437.5" y="660.3" width="15.8" height="17.6" fill="none" stroke="#fff" stroke-width="1.8"/>
<rect x="1449.02" y="496.9" width="15.8" height="17.6" fill="none" stroke="#fff" stroke-width="1.8"/>
<rect x="1468.54" y="469.01" width="15.8" height="17.6" fill="none" stroke="#fff" stroke-width="1.8"/>
<rect x="1487.16" y="441.89" width="15.8" height="17.6" fill="none" stroke="#fff" stroke-width="1.8"/>
<rect x="1504.9" y="417.09" width="15.8" height="17.6" fill="none" stroke="#fff" stroke-width="1.8"/>
<rect x="1524.68" y="388.19" width="15.8" height="17.6" fill="none" stroke="#fff" stroke-width="1.8"/>
<ellipse cx="1509.2" cy="532.4" rx="4.9" ry="5.6" fill="rgba(176,152,152,.82)" stroke="#0c0c0c" stroke-width="1.7"/>
<ellipse cx="1573.7" cy="533.7" rx="4.9" ry="5.6" fill="rgba(176,136,136,.82)" stroke="#0c0c0c" stroke-width="1.7"/>
<ellipse cx="1625.6" cy="533.7" rx="4.9" ry="5.6" fill="rgba(176,116,116,.82)" stroke="#0c0c0c" stroke-width="1.7"/>
<ellipse cx="1679.6" cy="533.7" rx="4.9" ry="5.6" fill="rgba(176,84,84,.82)" stroke="#0c0c0c" stroke-width="1.7"/>
<ellipse cx="1733.2" cy="536.2" rx="4.9" ry="5.6" fill="rgba(176,0,0,.82)" stroke="#0c0c0c" stroke-width="1.7"/>
<ellipse cx="1429.8" cy="486.6" rx="4.9" ry="5.6" fill="rgba(152,176,152,.82)" stroke="#0c0c0c" stroke-width="1.7"/>
<ellipse cx="1418.9" cy="436.4" rx="4.9" ry="5.6" fill="rgba(136,176,136,.82)" stroke="#0c0c0c" stroke-width="1.7"/>
<ellipse cx="1406.2" cy="388.7" rx="4.9" ry="5.6" fill="rgba(116,176,116,.82)" stroke="#0c0c0c" stroke-width="1.7"/>
<ellipse cx="1393.5" cy="317" rx="4.9" ry="5.6" fill="rgba(84,176,84,.82)" stroke="#0c0c0c" stroke-width="1.7"/>
<ellipse cx="1380" cy="248.6" rx="4.9" ry="5.6" fill="rgba(0,176,0,.82)" stroke="#0c0c0c" stroke-width="1.7"/>
<ellipse cx="1409.2" cy="574.6" rx="4.9" ry="5.6" fill="rgba(152,152,176,.82)" stroke="#0c0c0c" stroke-width="1.7"/>
<ellipse cx="1380" cy="618" rx="4.9" ry="5.6" fill="rgba(136,136,176,.82)" stroke="#0c0c0c" stroke-width="1.7"/>
<ellipse cx="1354.3" cy="656.9" rx="4.9" ry="5.6" fill="rgba(116,116,176,.82)" stroke="#0c0c0c" stroke-width="1.7"/>
<ellipse cx="1326.5" cy="698.2" rx="4.9" ry="5.6" fill="rgba(84,84,176,.82)" stroke="#0c0c0c" stroke-width="1.7"/>
<ellipse cx="1294.8" cy="743.8" rx="4.9" ry="5.6" fill="rgba(0,0,176,.82)" stroke="#0c0c0c" stroke-width="1.7"/>
<ellipse cx="1417.2" cy="532.4" rx="4.9" ry="5.6" fill="rgba(152,176,176,.82)" stroke="#0c0c0c" stroke-width="1.7"/>
<ellipse cx="1394.8" cy="532.4" rx="4.9" ry="5.6" fill="rgba(136,176,176,.82)" stroke="#0c0c0c" stroke-width="1.7"/>
<ellipse cx="1371.2" cy="533.7" rx="4.9" ry="5.6" fill="rgba(116,176,176,.82)" stroke="#0c0c0c" stroke-width="1.7"/>
<ellipse cx="1350.5" cy="532.4" rx="4.9" ry="5.6" fill="rgba(84,176,176,.82)" stroke="#0c0c0c" stroke-width="1.7"/>
<ellipse cx="1326.3" cy="533.9" rx="4.9" ry="5.6" fill="rgba(0,176,176,.82)" stroke="#0c0c0c" stroke-width="1.7"/>
<ellipse cx="1446.3" cy="560.7" rx="4.9" ry="5.6" fill="rgba(176,152,176,.82)" stroke="#0c0c0c" stroke-width="1.7"/>
<ellipse cx="1454.3" cy="588.5" rx="4.9" ry="5.6" fill="rgba(176,136,176,.82)" stroke="#0c0c0c" stroke-width="1.7"/>
<ellipse cx="1461" cy="611.3" rx="4.9" ry="5.6" fill="rgba(176,116,176,.82)" stroke="#0c0c0c" stroke-width="1.7"/>
<ellipse cx="1465.3" cy="634.1" rx="4.9" ry="5.6" fill="rgba(176,84,176,.82)" stroke="#0c0c0c" stroke-width="1.7"/>
<ellipse cx="1472.9" cy="656.9" rx="4.9" ry="5.6" fill="rgba(176,0,176,.82)" stroke="#0c0c0c" stroke-width="1.7"/>
<ellipse cx="1457.22" cy="504.82" rx="4.9" ry="5.6" fill="rgba(176,176,152,.82)" stroke="#0c0c0c" stroke-width="1.7"/>
<ellipse cx="1479.4" cy="473.06" rx="4.9" ry="5.6" fill="rgba(176,176,136,.82)" stroke="#0c0c0c" stroke-width="1.7"/>
<ellipse cx="1498.02" cy="445.94" rx="4.9" ry="5.6" fill="rgba(176,176,116,.82)" stroke="#0c0c0c" stroke-width="1.7"/>
<ellipse cx="1514.87" cy="419.6" rx="4.9" ry="5.6" fill="rgba(176,176,84,.82)" stroke="#0c0c0c" stroke-width="1.7"/>
<ellipse cx="1537.76" cy="387.13" rx="4.9" ry="5.6" fill="rgba(176,176,0,.82)" stroke="#0c0c0c" stroke-width="1.7"/>
<rect x="1431.1" y="525.3" width="15" height="17.4" fill="none" stroke="#0a0a0a" stroke-width="2.2"/>
<ellipse cx="1439" cy="534.6" rx="4.4" ry="5.2" fill="#fff" stroke="#0c0c0c" stroke-width="1.3"/>
<defs><linearGradient id="p0" gradientUnits="userSpaceOnUse" x1="1695" x2="1908"><stop offset="0" stop-color="#6a9900"/><stop offset=".7887" stop-color="#999900"/><stop offset="1" stop-color="#998d00"/></linearGradient><linearGradient id="p1" gradientUnits="userSpaceOnUse" x1="1695" x2="1908"><stop offset="0" stop-color="#6b9900"/><stop offset=".7746" stop-color="#999900"/><stop offset="1" stop-color="#998c00"/></linearGradient><linearGradient id="p2" gradientUnits="userSpaceOnUse" x1="1695" x2="1908"><stop offset="0" stop-color="#6b9900"/><stop offset=".7606" stop-color="#999900"/><stop offset="1" stop-color="#998b00"/></linearGradient><linearGradient id="p3" gradientUnits="userSpaceOnUse" x1="1695" x2="1908"><stop offset="0" stop-color="#6c9900"/><stop offset=".7418" stop-color="#999900"/><stop offset="1" stop-color="#998a00"/></linearGradient><linearGradient id="p4" gradientUnits="userSpaceOnUse" x1="1695" x2="1908"><stop offset="0" stop-color="#6d9900"/><stop offset=".7277" stop-color="#999900"/><stop offset="1" stop-color="#998900"/></linearGradient><linearGradient id="p5" gradientUnits="userSpaceOnUse" x1="1695" x2="1908"><stop offset="0" stop-color="#6e9901"/><stop offset=".7136" stop-color="#999900"/><stop offset="1" stop-color="#998800"/></linearGradient><linearGradient id="p6" gradientUnits="userSpaceOnUse" x1="1695" x2="1908"><stop offset="0" stop-color="#6e9901"/><stop offset=".6995" stop-color="#999900"/><stop offset="1" stop-color="#998800"/></linearGradient><linearGradient id="p7" gradientUnits="userSpaceOnUse" x1="1695" x2="1908"><stop offset="0" stop-color="#6f9901"/><stop offset=".6808" stop-color="#999900"/><stop offset="1" stop-color="#998700"/></linearGradient><linearGradient id="p8" gradientUnits="userSpaceOnUse" x1="1695" x2="1908"><stop offset="0" stop-color="#709902"/><stop offset=".6667" stop-color="#999900"/><stop offset="1" stop-color="#998600"/></linearGradient><linearGradient id="p9" gradientUnits="userSpaceOnUse" x1="1695" x2="1908"><stop offset="0" stop-color="#719902"/><stop offset=".6526" stop-color="#999900"/><stop offset="1" stop-color="#998500"/></linearGradient><linearGradient id="p10" gradientUnits="userSpaceOnUse" x1="1695" x2="1908"><stop offset="0" stop-color="#719903"/><stop offset=".169" stop-color="#7b9900"/><stop offset=".6385" stop-color="#999900"/><stop offset="1" stop-color="#998400"/></linearGradient><linearGradient id="p11" gradientUnits="userSpaceOnUse" x1="1695" x2="1908"><stop offset="0" stop-color="#729903"/><stop offset=".2019" stop-color="#7e9900"/><stop offset=".6197" stop-color="#999900"/><stop offset="1" stop-color="#998300"/></linearGradient><linearGradient id="p12" gradientUnits="userSpaceOnUse" x1="1695" x2="1908"><stop offset="0" stop-color="#739904"/><stop offset=".2347" stop-color="#819900"/><stop offset=".6056" stop-color="#999900"/><stop offset="1" stop-color="#998200"/></linearGradient><linearGradient id="p13" gradientUnits="userSpaceOnUse" x1="1695" x2="1908"><stop offset="0" stop-color="#749904"/><stop offset=".2676" stop-color="#849900"/><stop offset=".5915" stop-color="#999900"/><stop offset="1" stop-color="#998200"/></linearGradient><linearGradient id="p14" gradientUnits="userSpaceOnUse" x1="1695" x2="1908"><stop offset="0" stop-color="#759904"/><stop offset=".5775" stop-color="#999900"/><stop offset="1" stop-color="#998100"/></linearGradient><linearGradient id="p15" gradientUnits="userSpaceOnUse" x1="1695" x2="1908"><stop offset="0" stop-color="#759905"/><stop offset=".3286" stop-color="#8a9900"/><stop offset=".5587" stop-color="#999900"/><stop offset="1" stop-color="#998000"/></linearGradient><linearGradient id="p16" gradientUnits="userSpaceOnUse" x1="1695" x2="1908"><stop offset="0" stop-color="#769905"/><stop offset=".5446" stop-color="#999900"/><stop offset="1" stop-color="#997f00"/></linearGradient><linearGradient id="p17" gradientUnits="userSpaceOnUse" x1="1695" x2="1908"><stop offset="0" stop-color="#779906"/><stop offset=".5305" stop-color="#999900"/><stop offset="1" stop-color="#997e00"/></linearGradient><linearGradient id="p18" gradientUnits="userSpaceOnUse" x1="1695" x2="1908"><stop offset="0" stop-color="#789906"/><stop offset=".5164" stop-color="#999900"/><stop offset="1" stop-color="#997e00"/></linearGradient><linearGradient id="p19" gradientUnits="userSpaceOnUse" x1="1695" x2="1908"><stop offset="0" stop-color="#799907"/><stop offset=".5023" stop-color="#999900"/><stop offset="1" stop-color="#997d00"/></linearGradient><linearGradient id="p20" gradientUnits="userSpaceOnUse" x1="1695" x2="1908"><stop offset="0" stop-color="#7a9907"/><stop offset=".4836" stop-color="#999901"/><stop offset="1" stop-color="#997c00"/></linearGradient><linearGradient id="p21" gradientUnits="userSpaceOnUse" x1="1695" x2="1908"><stop offset="0" stop-color="#7a9908"/><stop offset=".4695" stop-color="#999901"/><stop offset="1" stop-color="#997b00"/></linearGradient><linearGradient id="p22" gradientUnits="userSpaceOnUse" x1="1695" x2="1908"><stop offset="0" stop-color="#7b9908"/><stop offset=".4554" stop-color="#999902"/><stop offset="1" stop-color="#997a00"/></linearGradient><linearGradient id="p23" gradientUnits="userSpaceOnUse" x1="1695" x2="1908"><stop offset="0" stop-color="#7c9908"/><stop offset=".4413" stop-color="#999903"/><stop offset=".5822" stop-color="#999000"/><stop offset="1" stop-color="#997900"/></linearGradient><linearGradient id="p24" gradientUnits="userSpaceOnUse" x1="1695" x2="1908"><stop offset="0" stop-color="#7d9909"/><stop offset=".4225" stop-color="#999903"/><stop offset="1" stop-color="#997900"/></linearGradient><linearGradient id="p25" gradientUnits="userSpaceOnUse" x1="1695" x2="1908"><stop offset="0" stop-color="#7e9909"/><stop offset=".4085" stop-color="#999904"/><stop offset=".6432" stop-color="#998b00"/><stop offset="1" stop-color="#997800"/></linearGradient><linearGradient id="p26" gradientUnits="userSpaceOnUse" x1="1695" x2="1908"><stop offset="0" stop-color="#7f990a"/><stop offset=".3944" stop-color="#999905"/><stop offset=".6761" stop-color="#998800"/><stop offset="1" stop-color="#997700"/></linearGradient><linearGradient id="p27" gradientUnits="userSpaceOnUse" x1="1695" x2="1908"><stop offset="0" stop-color="#80990a"/><stop offset=".3803" stop-color="#999905"/><stop offset=".7089" stop-color="#998500"/><stop offset="1" stop-color="#997600"/></linearGradient><linearGradient id="p28" gradientUnits="userSpaceOnUse" x1="1695" x2="1908"><stop offset="0" stop-color="#81990b"/><stop offset=".3615" stop-color="#999906"/><stop offset=".7371" stop-color="#998300"/><stop offset="1" stop-color="#997600"/></linearGradient><linearGradient id="p29" gradientUnits="userSpaceOnUse" x1="1695" x2="1908"><stop offset="0" stop-color="#81990b"/><stop offset=".3474" stop-color="#999907"/><stop offset=".77" stop-color="#998000"/><stop offset="1" stop-color="#997500"/></linearGradient><linearGradient id="p30" gradientUnits="userSpaceOnUse" x1="1695" x2="1908"><stop offset="0" stop-color="#82990c"/><stop offset=".3333" stop-color="#999907"/><stop offset=".6338" stop-color="#998603"/><stop offset="1" stop-color="#997400"/></linearGradient><linearGradient id="p31" gradientUnits="userSpaceOnUse" x1="1695" x2="1908"><stop offset="0" stop-color="#83990c"/><stop offset=".3192" stop-color="#999908"/><stop offset=".6714" stop-color="#998303"/><stop offset="1" stop-color="#997300"/></linearGradient><linearGradient id="p32" gradientUnits="userSpaceOnUse" x1="1695" x2="1908"><stop offset="0" stop-color="#84990d"/><stop offset=".3005" stop-color="#999909"/><stop offset=".6197" stop-color="#998504"/><stop offset="1" stop-color="#997200"/></linearGradient><linearGradient id="p33" gradientUnits="userSpaceOnUse" x1="1695" x2="1908"><stop offset="0" stop-color="#85990d"/><stop offset=".2864" stop-color="#99990a"/><stop offset=".6573" stop-color="#998204"/><stop offset="1" stop-color="#997200"/></linearGradient><linearGradient id="p34" gradientUnits="userSpaceOnUse" x1="1695" x2="1908"><stop offset="0" stop-color="#86990e"/><stop offset=".2723" stop-color="#99990a"/><stop offset=".5869" stop-color="#998505"/><stop offset="1" stop-color="#997100"/></linearGradient><linearGradient id="p35" gradientUnits="userSpaceOnUse" x1="1695" x2="1908"><stop offset="0" stop-color="#87990e"/><stop offset=".2582" stop-color="#99990b"/><stop offset=".6244" stop-color="#998205"/><stop offset="1" stop-color="#997000"/></linearGradient><linearGradient id="p36" gradientUnits="userSpaceOnUse" x1="1695" x2="1908"><stop offset="0" stop-color="#88990f"/><stop offset=".2394" stop-color="#99990c"/><stop offset=".5728" stop-color="#998406"/><stop offset="1" stop-color="#996f00"/></linearGradient><linearGradient id="p37" gradientUnits="userSpaceOnUse" x1="1695" x2="1908"><stop offset="0" stop-color="#89990f"/><stop offset=".2254" stop-color="#99990c"/><stop offset=".6103" stop-color="#998106"/><stop offset="1" stop-color="#996f01"/></linearGradient><linearGradient id="p38" gradientUnits="userSpaceOnUse" x1="1695" x2="1908"><stop offset="0" stop-color="#8a9910"/><stop offset=".2113" stop-color="#99990d"/><stop offset=".5399" stop-color="#998407"/><stop offset="1" stop-color="#996e01"/></linearGradient><linearGradient id="p39" gradientUnits="userSpaceOnUse" x1="1695" x2="1908"><stop offset="0" stop-color="#8b9910"/><stop offset=".1972" stop-color="#99990e"/><stop offset=".5634" stop-color="#998207"/><stop offset="1" stop-color="#996d01"/></linearGradient><linearGradient id="q0" gradientUnits="userSpaceOnUse" x1="1695" x2="1908"><stop offset="0" stop-color="#b0ff00"/><stop offset=".7934" stop-color="#ffff00"/><stop offset="1" stop-color="#ffeb00"/></linearGradient><linearGradient id="q1" gradientUnits="userSpaceOnUse" x1="1695" x2="1908"><stop offset="0" stop-color="#b2ff00"/><stop offset=".3944" stop-color="#d7ff00"/><stop offset=".7746" stop-color="#ffff00"/><stop offset="1" stop-color="#ffe900"/></linearGradient><linearGradient id="q2" gradientUnits="userSpaceOnUse" x1="1695" x2="1908"><stop offset="0" stop-color="#b3ff00"/><stop offset=".7606" stop-color="#ffff00"/><stop offset="1" stop-color="#ffe800"/></linearGradient><linearGradient id="q3" gradientUnits="userSpaceOnUse" x1="1695" x2="1908"><stop offset="0" stop-color="#b4ff00"/><stop offset=".7465" stop-color="#ffff00"/><stop offset="1" stop-color="#ffe600"/></linearGradient><linearGradient id="q4" gradientUnits="userSpaceOnUse" x1="1695" x2="1908"><stop offset="0" stop-color="#b5ff00"/><stop offset=".7324" stop-color="#ffff00"/><stop offset="1" stop-color="#ffe500"/></linearGradient><linearGradient id="q5" gradientUnits="userSpaceOnUse" x1="1695" x2="1908"><stop offset="0" stop-color="#b7ff01"/><stop offset=".7183" stop-color="#ffff00"/><stop offset="1" stop-color="#ffe300"/></linearGradient><linearGradient id="q6" gradientUnits="userSpaceOnUse" x1="1695" x2="1908"><stop offset="0" stop-color="#b8ff02"/><stop offset=".6995" stop-color="#ffff00"/><stop offset="1" stop-color="#ffe200"/></linearGradient><linearGradient id="q7" gradientUnits="userSpaceOnUse" x1="1695" x2="1908"><stop offset="0" stop-color="#b9ff02"/><stop offset=".6854" stop-color="#ffff00"/><stop offset="1" stop-color="#ffe000"/></linearGradient><linearGradient id="q8" gradientUnits="userSpaceOnUse" x1="1695" x2="1908"><stop offset="0" stop-color="#baff03"/><stop offset=".1221" stop-color="#c6ff00"/><stop offset=".6714" stop-color="#ffff00"/><stop offset="1" stop-color="#ffdf00"/></linearGradient><linearGradient id="q9" gradientUnits="userSpaceOnUse" x1="1695" x2="1908"><stop offset="0" stop-color="#bcff04"/><stop offset=".1549" stop-color="#cbff00"/><stop offset=".6573" stop-color="#ffff00"/><stop offset="1" stop-color="#ffde00"/></linearGradient><linearGradient id="q10" gradientUnits="userSpaceOnUse" x1="1695" x2="1908"><stop offset="0" stop-color="#bdff04"/><stop offset=".1831" stop-color="#cfff00"/><stop offset=".6385" stop-color="#ffff00"/><stop offset="1" stop-color="#ffdc00"/></linearGradient><linearGradient id="q11" gradientUnits="userSpaceOnUse" x1="1695" x2="1908"><stop offset="0" stop-color="#beff05"/><stop offset=".216" stop-color="#d4ff00"/><stop offset=".6244" stop-color="#ffff00"/><stop offset="1" stop-color="#ffdb00"/></linearGradient><linearGradient id="q12" gradientUnits="userSpaceOnUse" x1="1695" x2="1908"><stop offset="0" stop-color="#c0ff06"/><stop offset=".2488" stop-color="#d9ff00"/><stop offset=".6103" stop-color="#ffff00"/><stop offset="1" stop-color="#ffd900"/></linearGradient><linearGradient id="q13" gradientUnits="userSpaceOnUse" x1="1695" x2="1908"><stop offset="0" stop-color="#c1ff07"/><stop offset=".2817" stop-color="#ddff00"/><stop offset=".5962" stop-color="#ffff00"/><stop offset="1" stop-color="#ffd800"/></linearGradient><linearGradient id="q14" gradientUnits="userSpaceOnUse" x1="1695" x2="1908"><stop offset="0" stop-color="#c2ff07"/><stop offset=".3099" stop-color="#e2ff00"/><stop offset=".5775" stop-color="#ffff00"/><stop offset="1" stop-color="#ffd700"/></linearGradient><linearGradient id="q15" gradientUnits="userSpaceOnUse" x1="1695" x2="1908"><stop offset="0" stop-color="#c4ff08"/><stop offset=".3427" stop-color="#e7ff00"/><stop offset=".5634" stop-color="#ffff00"/><stop offset="1" stop-color="#ffd500"/></linearGradient><linearGradient id="q16" gradientUnits="userSpaceOnUse" x1="1695" x2="1908"><stop offset="0" stop-color="#c5ff09"/><stop offset=".3756" stop-color="#ecff00"/><stop offset=".5493" stop-color="#ffff00"/><stop offset="1" stop-color="#ffd400"/></linearGradient><linearGradient id="q17" gradientUnits="userSpaceOnUse" x1="1695" x2="1908"><stop offset="0" stop-color="#c6ff0a"/><stop offset=".4085" stop-color="#f1ff00"/><stop offset=".5352" stop-color="#ffff00"/><stop offset=".7746" stop-color="#ffe600"/><stop offset="1" stop-color="#ffd300"/></linearGradient><linearGradient id="q18" gradientUnits="userSpaceOnUse" x1="1695" x2="1908"><stop offset="0" stop-color="#c8ff0a"/><stop offset=".5164" stop-color="#ffff00"/><stop offset="1" stop-color="#ffd100"/></linearGradient><linearGradient id="q19" gradientUnits="userSpaceOnUse" x1="1695" x2="1908"><stop offset="0" stop-color="#c9ff0b"/><stop offset=".5023" stop-color="#ffff00"/><stop offset=".7746" stop-color="#ffe300"/><stop offset="1" stop-color="#ffd000"/></linearGradient><linearGradient id="q20" gradientUnits="userSpaceOnUse" x1="1695" x2="1908"><stop offset="0" stop-color="#cbff0c"/><stop offset=".4883" stop-color="#ffff01"/><stop offset=".7277" stop-color="#ffe600"/><stop offset="1" stop-color="#ffce00"/></linearGradient><linearGradient id="q21" gradientUnits="userSpaceOnUse" x1="1695" x2="1908"><stop offset="0" stop-color="#ccff0d"/><stop offset=".4742" stop-color="#ffff02"/><stop offset=".7324" stop-color="#ffe400"/><stop offset="1" stop-color="#ffcd00"/></linearGradient><linearGradient id="q22" gradientUnits="userSpaceOnUse" x1="1695" x2="1908"><stop offset="0" stop-color="#cdff0d"/><stop offset=".4554" stop-color="#ffff03"/><stop offset=".77" stop-color="#ffdf00"/><stop offset="1" stop-color="#ffcc00"/></linearGradient><linearGradient id="q23" gradientUnits="userSpaceOnUse" x1="1695" x2="1908"><stop offset="0" stop-color="#cfff0e"/><stop offset=".4413" stop-color="#ffff04"/><stop offset=".5962" stop-color="#ffef00"/><stop offset="1" stop-color="#ffca00"/></linearGradient><linearGradient id="q24" gradientUnits="userSpaceOnUse" x1="1695" x2="1908"><stop offset="0" stop-color="#d0ff0f"/><stop offset=".4272" stop-color="#ffff05"/><stop offset=".6291" stop-color="#ffea00"/><stop offset="1" stop-color="#ffc900"/></linearGradient><linearGradient id="q25" gradientUnits="userSpaceOnUse" x1="1695" x2="1908"><stop offset="0" stop-color="#d2ff10"/><stop offset=".4131" stop-color="#ffff06"/><stop offset=".662" stop-color="#ffe500"/><stop offset="1" stop-color="#ffc800"/></linearGradient><linearGradient id="q26" gradientUnits="userSpaceOnUse" x1="1695" x2="1908"><stop offset="0" stop-color="#d3ff10"/><stop offset=".3944" stop-color="#ffff08"/><stop offset=".6901" stop-color="#ffe100"/><stop offset="1" stop-color="#ffc600"/></linearGradient><linearGradient id="q27" gradientUnits="userSpaceOnUse" x1="1695" x2="1908"><stop offset="0" stop-color="#d5ff11"/><stop offset=".3803" stop-color="#ffff09"/><stop offset=".723" stop-color="#ffdc00"/><stop offset="1" stop-color="#ffc500"/></linearGradient><linearGradient id="q28" gradientUnits="userSpaceOnUse" x1="1695" x2="1908"><stop offset="0" stop-color="#d6ff12"/><stop offset=".3662" stop-color="#ffff0a"/><stop offset=".7559" stop-color="#ffd800"/><stop offset="1" stop-color="#ffc400"/></linearGradient><linearGradient id="q29" gradientUnits="userSpaceOnUse" x1="1695" x2="1908"><stop offset="0" stop-color="#d8ff13"/><stop offset=".3521" stop-color="#ffff0b"/><stop offset=".6573" stop-color="#ffdf03"/><stop offset="1" stop-color="#ffc300"/></linearGradient><linearGradient id="q30" gradientUnits="userSpaceOnUse" x1="1695" x2="1908"><stop offset="0" stop-color="#d9ff14"/><stop offset=".338" stop-color="#ffff0c"/><stop offset=".6197" stop-color="#ffe105"/><stop offset=".8169" stop-color="#ffd000"/><stop offset="1" stop-color="#ffc100"/></linearGradient><linearGradient id="q31" gradientUnits="userSpaceOnUse" x1="1695" x2="1908"><stop offset="0" stop-color="#dbff15"/><stop offset=".3192" stop-color="#ffff0d"/><stop offset=".6573" stop-color="#ffdc05"/><stop offset=".8498" stop-color="#ffcc00"/><stop offset="1" stop-color="#ffc000"/></linearGradient><linearGradient id="q32" gradientUnits="userSpaceOnUse" x1="1695" x2="1908"><stop offset="0" stop-color="#dcff15"/><stop offset=".3052" stop-color="#ffff0f"/><stop offset=".6197" stop-color="#ffde06"/><stop offset="1" stop-color="#ffbf00"/></linearGradient><linearGradient id="q33" gradientUnits="userSpaceOnUse" x1="1695" x2="1908"><stop offset="0" stop-color="#deff16"/><stop offset=".2911" stop-color="#ffff10"/><stop offset=".6244" stop-color="#ffdc07"/><stop offset="1" stop-color="#ffbd00"/></linearGradient><linearGradient id="q34" gradientUnits="userSpaceOnUse" x1="1695" x2="1908"><stop offset="0" stop-color="#e0ff17"/><stop offset=".277" stop-color="#ffff11"/><stop offset=".5869" stop-color="#ffde08"/><stop offset="1" stop-color="#ffbc00"/></linearGradient><linearGradient id="q35" gradientUnits="userSpaceOnUse" x1="1695" x2="1908"><stop offset="0" stop-color="#e1ff18"/><stop offset=".2582" stop-color="#ffff12"/><stop offset=".6244" stop-color="#ffd908"/><stop offset="1" stop-color="#ffbb00"/></linearGradient><linearGradient id="q36" gradientUnits="userSpaceOnUse" x1="1695" x2="1908"><stop offset="0" stop-color="#e3ff19"/><stop offset=".2441" stop-color="#ffff13"/><stop offset=".5869" stop-color="#ffdb0a"/><stop offset="1" stop-color="#ffba01"/></linearGradient><linearGradient id="q37" gradientUnits="userSpaceOnUse" x1="1695" x2="1908"><stop offset="0" stop-color="#e4ff1a"/><stop offset=".23" stop-color="#ffff15"/><stop offset=".5493" stop-color="#ffdd0b"/><stop offset="1" stop-color="#ffb801"/></linearGradient><linearGradient id="q38" gradientUnits="userSpaceOnUse" x1="1695" x2="1908"><stop offset="0" stop-color="#e6ff1b"/><stop offset=".216" stop-color="#ffff16"/><stop offset=".554" stop-color="#ffdb0c"/><stop offset="1" stop-color="#ffb702"/></linearGradient><linearGradient id="q39" gradientUnits="userSpaceOnUse" x1="1695" x2="1908"><stop offset="0" stop-color="#e7ff1b"/><stop offset=".2019" stop-color="#ffff17"/><stop offset=".5634" stop-color="#ffd90c"/><stop offset="1" stop-color="#ffb602"/></linearGradient><clipPath id="cbx"><rect x="1695.5" y="138.5" width="212" height="237.3"/></clipPath><clipPath id="cin"><polygon points="1695.5,163.11 1907.5,351.55 1907.5,375.8 1695.5,375.8"/></clipPath></defs>
<g clip-path="url(#cbx)"><rect x="1695" y="138.5" width="213" height="6.6" fill="url(#p0)"/><rect x="1695" y="144.5" width="213" height="6.6" fill="url(#p1)"/><rect x="1695" y="150.5" width="213" height="6.6" fill="url(#p2)"/><rect x="1695" y="156.5" width="213" height="6.6" fill="url(#p3)"/><rect x="1695" y="162.5" width="213" height="6.6" fill="url(#p4)"/><rect x="1695" y="168.5" width="213" height="6.6" fill="url(#p5)"/><rect x="1695" y="174.5" width="213" height="6.6" fill="url(#p6)"/><rect x="1695" y="180.5" width="213" height="6.6" fill="url(#p7)"/><rect x="1695" y="186.5" width="213" height="6.6" fill="url(#p8)"/><rect x="1695" y="192.5" width="213" height="6.6" fill="url(#p9)"/><rect x="1695" y="198.5" width="213" height="6.6" fill="url(#p10)"/><rect x="1695" y="204.5" width="213" height="6.6" fill="url(#p11)"/><rect x="1695" y="210.5" width="213" height="6.6" fill="url(#p12)"/><rect x="1695" y="216.5" width="213" height="6.6" fill="url(#p13)"/><rect x="1695" y="222.5" width="213" height="6.6" fill="url(#p14)"/><rect x="1695" y="228.5" width="213" height="6.6" fill="url(#p15)"/><rect x="1695" y="234.5" width="213" height="6.6" fill="url(#p16)"/><rect x="1695" y="240.5" width="213" height="6.6" fill="url(#p17)"/><rect x="1695" y="246.5" width="213" height="6.6" fill="url(#p18)"/><rect x="1695" y="252.5" width="213" height="6.6" fill="url(#p19)"/><rect x="1695" y="258.5" width="213" height="6.6" fill="url(#p20)"/><rect x="1695" y="264.5" width="213" height="6.6" fill="url(#p21)"/><rect x="1695" y="270.5" width="213" height="6.6" fill="url(#p22)"/><rect x="1695" y="276.5" width="213" height="6.6" fill="url(#p23)"/><rect x="1695" y="282.5" width="213" height="6.6" fill="url(#p24)"/><rect x="1695" y="288.5" width="213" height="6.6" fill="url(#p25)"/><rect x="1695" y="294.5" width="213" height="6.6" fill="url(#p26)"/><rect x="1695" y="300.5" width="213" height="6.6" fill="url(#p27)"/><rect x="1695" y="306.5" width="213" height="6.6" fill="url(#p28)"/><rect x="1695" y="312.5" width="213" height="6.6" fill="url(#p29)"/><rect x="1695" y="318.5" width="213" height="6.6" fill="url(#p30)"/><rect x="1695" y="324.5" width="213" height="6.6" fill="url(#p31)"/><rect x="1695" y="330.5" width="213" height="6.6" fill="url(#p32)"/><rect x="1695" y="336.5" width="213" height="6.6" fill="url(#p33)"/><rect x="1695" y="342.5" width="213" height="6.6" fill="url(#p34)"/><rect x="1695" y="348.5" width="213" height="6.6" fill="url(#p35)"/><rect x="1695" y="354.5" width="213" height="6.6" fill="url(#p36)"/><rect x="1695" y="360.5" width="213" height="6.6" fill="url(#p37)"/><rect x="1695" y="366.5" width="213" height="6.6" fill="url(#p38)"/><rect x="1695" y="372.5" width="213" height="3.9" fill="url(#p39)"/><g clip-path="url(#cin)"><rect x="1695" y="138.5" width="213" height="6.6" fill="url(#q0)"/><rect x="1695" y="144.5" width="213" height="6.6" fill="url(#q1)"/><rect x="1695" y="150.5" width="213" height="6.6" fill="url(#q2)"/><rect x="1695" y="156.5" width="213" height="6.6" fill="url(#q3)"/><rect x="1695" y="162.5" width="213" height="6.6" fill="url(#q4)"/><rect x="1695" y="168.5" width="213" height="6.6" fill="url(#q5)"/><rect x="1695" y="174.5" width="213" height="6.6" fill="url(#q6)"/><rect x="1695" y="180.5" width="213" height="6.6" fill="url(#q7)"/><rect x="1695" y="186.5" width="213" height="6.6" fill="url(#q8)"/><rect x="1695" y="192.5" width="213" height="6.6" fill="url(#q9)"/><rect x="1695" y="198.5" width="213" height="6.6" fill="url(#q10)"/><rect x="1695" y="204.5" width="213" height="6.6" fill="url(#q11)"/><rect x="1695" y="210.5" width="213" height="6.6" fill="url(#q12)"/><rect x="1695" y="216.5" width="213" height="6.6" fill="url(#q13)"/><rect x="1695" y="222.5" width="213" height="6.6" fill="url(#q14)"/><rect x="1695" y="228.5" width="213" height="6.6" fill="url(#q15)"/><rect x="1695" y="234.5" width="213" height="6.6" fill="url(#q16)"/><rect x="1695" y="240.5" width="213" height="6.6" fill="url(#q17)"/><rect x="1695" y="246.5" width="213" height="6.6" fill="url(#q18)"/><rect x="1695" y="252.5" width="213" height="6.6" fill="url(#q19)"/><rect x="1695" y="258.5" width="213" height="6.6" fill="url(#q20)"/><rect x="1695" y="264.5" width="213" height="6.6" fill="url(#q21)"/><rect x="1695" y="270.5" width="213" height="6.6" fill="url(#q22)"/><rect x="1695" y="276.5" width="213" height="6.6" fill="url(#q23)"/><rect x="1695" y="282.5" width="213" height="6.6" fill="url(#q24)"/><rect x="1695" y="288.5" width="213" height="6.6" fill="url(#q25)"/><rect x="1695" y="294.5" width="213" height="6.6" fill="url(#q26)"/><rect x="1695" y="300.5" width="213" height="6.6" fill="url(#q27)"/><rect x="1695" y="306.5" width="213" height="6.6" fill="url(#q28)"/><rect x="1695" y="312.5" width="213" height="6.6" fill="url(#q29)"/><rect x="1695" y="318.5" width="213" height="6.6" fill="url(#q30)"/><rect x="1695" y="324.5" width="213" height="6.6" fill="url(#q31)"/><rect x="1695" y="330.5" width="213" height="6.6" fill="url(#q32)"/><rect x="1695" y="336.5" width="213" height="6.6" fill="url(#q33)"/><rect x="1695" y="342.5" width="213" height="6.6" fill="url(#q34)"/><rect x="1695" y="348.5" width="213" height="6.6" fill="url(#q35)"/><rect x="1695" y="354.5" width="213" height="6.6" fill="url(#q36)"/><rect x="1695" y="360.5" width="213" height="6.6" fill="url(#q37)"/><rect x="1695" y="366.5" width="213" height="6.6" fill="url(#q38)"/><rect x="1695" y="372.5" width="213" height="3.9" fill="url(#q39)"/></g></g>
<rect x="1695.5" y="138.5" width="212" height="237.3" fill="none" stroke="#8c8c8c" stroke-width="2"/>
<rect x="1792.1" y="247.85" width="15.6" height="17.4" fill="none" stroke="#fff" stroke-width="1.8"/>
<ellipse cx="1823.82" cy="197.35" rx="5" ry="5.7" fill="rgba(205,205,0,.55)" stroke="#0c0c0c" stroke-width="1.4"/>
<defs><linearGradient id="th" x1="0" y1="0" x2="0" y2="1"><stop offset="0" stop-color="#303030"/><stop offset=".5" stop-color="#2a2a2a"/><stop offset=".52" stop-color="#161616"/><stop offset="1" stop-color="#0a0a0a"/></linearGradient><linearGradient id="tl" x1="0" y1="0" x2="0" y2="1"><stop offset="0" stop-color="#343434"/><stop offset="1" stop-color="#222"/></linearGradient></defs>
<rect x="1123" y="846" width="756" height="38.8" fill="url(#th)"/>
<rect x="1123" y="846" width="22.4" height="38.8" fill="#000"/>
<rect x="1145.4" y="884.8" width="733.6" height="37.1" fill="#444444"/>
<rect x="1123" y="884.8" width="22.4" height="37.1" fill="url(#tl)"/>
<rect x="1145.4" y="921.6" width="733.6" height="36.6" fill="#868686"/>
<rect x="1123" y="921.6" width="22.4" height="36.6" fill="url(#tl)"/>
<rect x="1145.4" y="957.9" width="733.6" height="37.1" fill="#444444"/>
<rect x="1123" y="957.9" width="22.4" height="37.1" fill="url(#tl)"/>
<rect x="1145.4" y="994.7" width="733.6" height="37" fill="#868686"/>
<rect x="1123" y="994.7" width="22.4" height="37" fill="url(#tl)"/>
<rect x="1145.4" y="1031.4" width="733.6" height="36.6" fill="#444444"/>
<rect x="1123" y="1031.4" width="22.4" height="36.6" fill="url(#tl)"/>
<rect x="1145.4" y="1067.7" width="733.6" height="37" fill="#868686"/>
<rect x="1123" y="1067.7" width="22.4" height="37" fill="url(#tl)"/>
<text x="1336.4" y="873.5" font-size="21.4" fill="#f4f4f4" textLength="46" lengthAdjust="spacingAndGlyphs">20%</text>
<text x="1446.3" y="873.5" font-size="21.4" fill="#f4f4f4" textLength="46" lengthAdjust="spacingAndGlyphs">40%</text>
<text x="1556.2" y="873.5" font-size="21.4" fill="#f4f4f4" textLength="46" lengthAdjust="spacingAndGlyphs">60%</text>
<text x="1666.1" y="873.5" font-size="21.4" fill="#f4f4f4" textLength="46" lengthAdjust="spacingAndGlyphs">80%</text>
<text x="1776" y="873.5" font-size="21.4" fill="#f4f4f4" textLength="60.2" lengthAdjust="spacingAndGlyphs">100%</text>
<text x="1152.3" y="911.8" font-size="21.8" fill="#f2f2f2" textLength="90.5" lengthAdjust="spacingAndGlyphs">x: CIE31</text>
<text x="1336.4" y="911.8" font-size="21.8" fill="#f2f2f2" textLength="62.65" lengthAdjust="spacingAndGlyphs">0,334</text>
<text x="1446.3" y="911.8" font-size="21.8" fill="#f2f2f2" textLength="62.65" lengthAdjust="spacingAndGlyphs">0,359</text>
<text x="1556.2" y="911.8" font-size="21.8" fill="#f2f2f2" textLength="62.65" lengthAdjust="spacingAndGlyphs">0,380</text>
<text x="1666.1" y="911.8" font-size="21.8" fill="#f2f2f2" textLength="62.65" lengthAdjust="spacingAndGlyphs">0,399</text>
<text x="1776" y="911.8" font-size="21.8" fill="#f2f2f2" textLength="62.65" lengthAdjust="spacingAndGlyphs">0,425</text>
<text x="1152.3" y="948.6" font-size="21.8" fill="#f2f2f2" textLength="90.5" lengthAdjust="spacingAndGlyphs">y: CIE31</text>
<text x="1336.4" y="948.6" font-size="21.8" fill="#f2f2f2" textLength="62.65" lengthAdjust="spacingAndGlyphs">0,366</text>
<text x="1446.3" y="948.6" font-size="21.8" fill="#f2f2f2" textLength="62.65" lengthAdjust="spacingAndGlyphs">0,407</text>
<text x="1556.2" y="948.6" font-size="21.8" fill="#f2f2f2" textLength="62.65" lengthAdjust="spacingAndGlyphs">0,442</text>
<text x="1666.1" y="948.6" font-size="21.8" fill="#f2f2f2" textLength="62.65" lengthAdjust="spacingAndGlyphs">0,476</text>
<text x="1776" y="948.6" font-size="21.8" fill="#f2f2f2" textLength="62.65" lengthAdjust="spacingAndGlyphs">0,518</text>
<text x="1152.3" y="984.9" font-size="21.8" fill="#f2f2f2" textLength="14" lengthAdjust="spacingAndGlyphs">Y</text>
<text x="1336.4" y="984.9" font-size="21.8" fill="#f2f2f2" textLength="91.11" lengthAdjust="spacingAndGlyphs">105,595</text>
<text x="1446.3" y="984.9" font-size="21.8" fill="#f2f2f2" textLength="91.11" lengthAdjust="spacingAndGlyphs">103,420</text>
<text x="1556.2" y="984.9" font-size="21.8" fill="#f2f2f2" textLength="91.11" lengthAdjust="spacingAndGlyphs">102,668</text>
<text x="1666.1" y="984.9" font-size="21.8" fill="#f2f2f2" textLength="91.11" lengthAdjust="spacingAndGlyphs">101,681</text>
<text x="1776" y="984.9" font-size="21.8" fill="#f2f2f2" textLength="91.11" lengthAdjust="spacingAndGlyphs">102,464</text>
<text x="1152.3" y="1021.7" font-size="21.8" fill="#f2f2f2" textLength="165" lengthAdjust="spacingAndGlyphs">Target x:CIE31</text>
<text x="1336.4" y="1021.7" font-size="21.8" fill="#f2f2f2" textLength="62.65" lengthAdjust="spacingAndGlyphs">0,334</text>
<text x="1446.3" y="1021.7" font-size="21.8" fill="#f2f2f2" textLength="62.65" lengthAdjust="spacingAndGlyphs">0,356</text>
<text x="1556.2" y="1021.7" font-size="21.8" fill="#f2f2f2" textLength="62.65" lengthAdjust="spacingAndGlyphs">0,377</text>
<text x="1666.1" y="1021.7" font-size="21.8" fill="#f2f2f2" textLength="62.65" lengthAdjust="spacingAndGlyphs">0,397</text>
<text x="1776" y="1021.7" font-size="21.8" fill="#f2f2f2" textLength="62.65" lengthAdjust="spacingAndGlyphs">0,419</text>
<text x="1152.3" y="1058.4" font-size="21.8" fill="#f2f2f2" textLength="165" lengthAdjust="spacingAndGlyphs">Target y:CIE31</text>
<text x="1336.4" y="1058.4" font-size="21.8" fill="#f2f2f2" textLength="62.65" lengthAdjust="spacingAndGlyphs">0,365</text>
<text x="1446.3" y="1058.4" font-size="21.8" fill="#f2f2f2" textLength="62.65" lengthAdjust="spacingAndGlyphs">0,401</text>
<text x="1556.2" y="1058.4" font-size="21.8" fill="#f2f2f2" textLength="62.65" lengthAdjust="spacingAndGlyphs">0,436</text>
<text x="1666.1" y="1058.4" font-size="21.8" fill="#f2f2f2" textLength="62.65" lengthAdjust="spacingAndGlyphs">0,468</text>
<text x="1776" y="1058.4" font-size="21.8" fill="#f2f2f2" textLength="62.65" lengthAdjust="spacingAndGlyphs">0,505</text>
<text x="1152.3" y="1094.7" font-size="21.8" fill="#f2f2f2" textLength="94" lengthAdjust="spacingAndGlyphs">Target Y</text>
<text x="1336.4" y="1094.7" font-size="21.8" fill="#f2f2f2" textLength="76.88" lengthAdjust="spacingAndGlyphs">99,284</text>
<text x="1446.3" y="1094.7" font-size="21.8" fill="#f2f2f2" textLength="76.88" lengthAdjust="spacingAndGlyphs">97,541</text>
<text x="1556.2" y="1094.7" font-size="21.8" fill="#f2f2f2" textLength="76.88" lengthAdjust="spacingAndGlyphs">96,202</text>
<text x="1666.1" y="1094.7" font-size="21.8" fill="#f2f2f2" textLength="76.88" lengthAdjust="spacingAndGlyphs">95,151</text>
<text x="1776" y="1094.7" font-size="21.8" fill="#f2f2f2" textLength="76.88" lengthAdjust="spacingAndGlyphs">94,135</text>
<defs><linearGradient id="icg" x1="0" y1="0" x2="1" y2="1"><stop offset="0" stop-color="#ff5a10"/><stop offset=".3" stop-color="#e00000"/><stop offset=".5" stop-color="#106010"/><stop offset=".75" stop-color="#d01040"/><stop offset="1" stop-color="#c00000"/></linearGradient><linearGradient id="lgt" x1="0" y1="0" x2="0" y2="1"><stop offset="0" stop-color="#ffffff"/><stop offset=".5" stop-color="#f2f2f2"/><stop offset="1" stop-color="#c4c4c4"/></linearGradient></defs>
<rect x="7.7" y="6" width="13.3" height="13.6" fill="url(#icg)"/>
<rect x="10.5" y="8" width="8" height="10" fill="#d8f0c8" opacity=".75"/>
<text x="14.4" y="18.2" font-size="13.5" fill="#000" text-anchor="middle" textLength="8" lengthAdjust="spacingAndGlyphs" font-weight="bold" font-style="italic">5</text>
<text x="25.8" y="17.2" font-size="11.6" fill="#111" textLength="274.7" lengthAdjust="spacingAndGlyphs">CalMAN 5 CalMAN Ultimate for Business 261 Days Remaining</text>
<path d="M1818.5 13.5h9M1856.5 8.5h8v8h-8zM1895 8l9 9M1904 8l-9 9" stroke="#222" stroke-width="1" fill="none"/>
<text x="5.5" y="45.1" font-size="24.5" fill="url(#lgt)" textLength="98.5" lengthAdjust="spacingAndGlyphs" font-weight="bold" style="filter:drop-shadow(0 1px 1px rgba(90,0,0,.8))">CalMAN</text>
<text x="109.6" y="45.1" font-size="24.5" fill="url(#lgt)" textLength="15.3" lengthAdjust="spacingAndGlyphs" font-weight="bold" style="filter:drop-shadow(0 1px 1px rgba(90,0,0,.8))">5</text>
<path d="M76.7 32.2L73.4 40.2H80z" fill="#f3f3f3"/>
<g fill="none" stroke="#c4161a" stroke-width="1.05" stroke-linecap="round" stroke-linejoin="round"><path d="M76.3 33.5L76.9 36.2M76.2 33.8L74.4 33.9L73 35M76.4 33.9L78.2 34.8L79.6 34M76.9 36.2L75.2 38.2L72.8 39.2M76.9 36.2L78.3 37.6L78.3 39.8"/></g><circle cx="76.4" cy="31.9" r="1" fill="#c4161a"/>
<path d="M137.4 37.3h8.6l-4.3 4.3z" fill="#fff"/>
<path d="M9 63.4v8.6l5.4-4.3z" fill="#fff"/>
<text x="30.6" y="73" font-size="10.3" fill="#e8e8e8" textLength="39.8" lengthAdjust="spacingAndGlyphs">History 1</text>
<path d="M85 70.5h6.4M88.2 67.3v6.4" stroke="#777" stroke-width="1"/>
<text x="1468" y="65.8" font-size="9.6" fill="#f4f4f4" textLength="55.5" lengthAdjust="spacingAndGlyphs">X-Rite i1Pro 2</text>
<text x="1468" y="77.6" font-size="9.6" fill="#f4f4f4" textLength="65.5" lengthAdjust="spacingAndGlyphs">LCD Direct View</text>
<text x="1578.3" y="71.1" font-size="7.6" fill="#fff" text-anchor="middle" textLength="12.5" lengthAdjust="spacingAndGlyphs" font-weight="bold">183</text>
<text x="1603.7" y="65.8" font-size="9.6" fill="#f4f4f4" textLength="54.5" lengthAdjust="spacingAndGlyphs">Mobile Forge</text>
<text x="1719" y="65.8" font-size="9.6" fill="#f4f4f4" textLength="89.5" lengthAdjust="spacingAndGlyphs">Direct Display Control</text>
<path d="M1541.2 67.4h6.6l-3.3 3.4z" fill="#fff"/>
<path d="M1689.2 67.4h6.6l-3.3 3.4z" fill="#fff"/>
<path d="M1816.2 67.4h6.6l-3.3 3.4z" fill="#fff"/>
<g transform="translate(1849.5,68)"><circle r="3.3" fill="none" stroke="#d4d4d4" stroke-width="1.7"/><g stroke="#d4d4d4" stroke-width="1.7"><path d="M0 -3.8V-5.9" transform="rotate(0)"/><path d="M0 -3.8V-5.9" transform="rotate(45)"/><path d="M0 -3.8V-5.9" transform="rotate(90)"/><path d="M0 -3.8V-5.9" transform="rotate(135)"/><path d="M0 -3.8V-5.9" transform="rotate(180)"/><path d="M0 -3.8V-5.9" transform="rotate(225)"/><path d="M0 -3.8V-5.9" transform="rotate(270)"/><path d="M0 -3.8V-5.9" transform="rotate(315)"/></g></g>
<text x="1880" y="72.8" font-size="12.4" fill="#f4f4f4" text-anchor="middle" font-weight="bold">?</text>
<path d="M1911.6 62.6v9.6l-4.4-4.8z" fill="#f0f0f0"/>
<path d="M17.3 1141.3h7l-3.5-3.6z" fill="#2a2a2a"/>
<text x="108.5" y="1179.6" font-size="9.4" fill="#2a2a2a" text-anchor="middle" textLength="16.5" lengthAdjust="spacingAndGlyphs">20%</text>
<text x="237.2" y="1179.6" font-size="9.4" fill="#2a2a2a" text-anchor="middle" textLength="16.5" lengthAdjust="spacingAndGlyphs">40%</text>
<text x="365.9" y="1179.6" font-size="9.4" fill="#2a2a2a" text-anchor="middle" textLength="16.5" lengthAdjust="spacingAndGlyphs">60%</text>
<text x="494.6" y="1179.6" font-size="9.4" fill="#2a2a2a" text-anchor="middle" textLength="16.5" lengthAdjust="spacingAndGlyphs">80%</text>
<text x="623.3" y="1179.6" font-size="9.6" fill="#fff" text-anchor="middle" textLength="22.5" lengthAdjust="spacingAndGlyphs" font-weight="bold">100%</text>
<path d="M1662.3 1142.3h7l-3.5-3.6z" fill="#2a2a2a"/>
<rect x="1703" y="1142" width="7" height="7" fill="#2a2a2a"/>
<path d="M1743.2 1141v9l6.6-4.5z" fill="#2a2a2a"/>
<path d="M1781 1141.5h-2v8h2M1786.4 1141.5h2v8h-2" stroke="#2a2a2a" stroke-width="1.3" fill="none"/><path d="M1782 1145.5h1.2M1784.4 1145.5h1.2" stroke="#2a2a2a" stroke-width="1.3"/>
<path d="M1821.7 1145.3c-1.6-2.4-4.6-2.4-4.6 0s3 2.4 4.6 0c1.6-2.4 4.6-2.4 4.6 0s-3 2.4-4.6 0z" stroke="#2a2a2a" stroke-width="1.3" fill="none"/>
<path d="M1855.3 1144.6a4.4 4.4 0 0 1 7.6-2.2M1863.9 1146.4a4.4 4.4 0 0 1-7.6 2.2" stroke="#2a2a2a" stroke-width="1.6" fill="none"/><path d="M1861.4 1143.4l3.2.4-.2-3.2zM1857.8 1147.6l-3.2-.4.2 3.2z" fill="#2a2a2a"/>
<path d="M1893.6 1145.6l3.2 3.2 5.6-6.6" stroke="#1a1a1a" stroke-width="2.2" fill="none"/>
<path d="M1713.6 1168l-3.4 3.6 3.4 3.6M1717.6 1168l-3.4 3.6 3.4 3.6" stroke="#2a2a2a" stroke-width="1.2" fill="none"/>
<path d="M1890.2 1168l3.4 3.6-3.4 3.6M1894.2 1168l3.4 3.6-3.4 3.6" stroke="#2a2a2a" stroke-width="1.2" fill="none"/>
<text x="1735.6" y="1178.3" font-size="18.6" fill="#2a2a2a" textLength="42.4" lengthAdjust="spacingAndGlyphs">Back</text>
<text x="1826.6" y="1178.3" font-size="18.6" fill="#2a2a2a" textLength="43.1" lengthAdjust="spacingAndGlyphs">Next</text>
</svg>
<div id="border"></div>
</div></body></html>
